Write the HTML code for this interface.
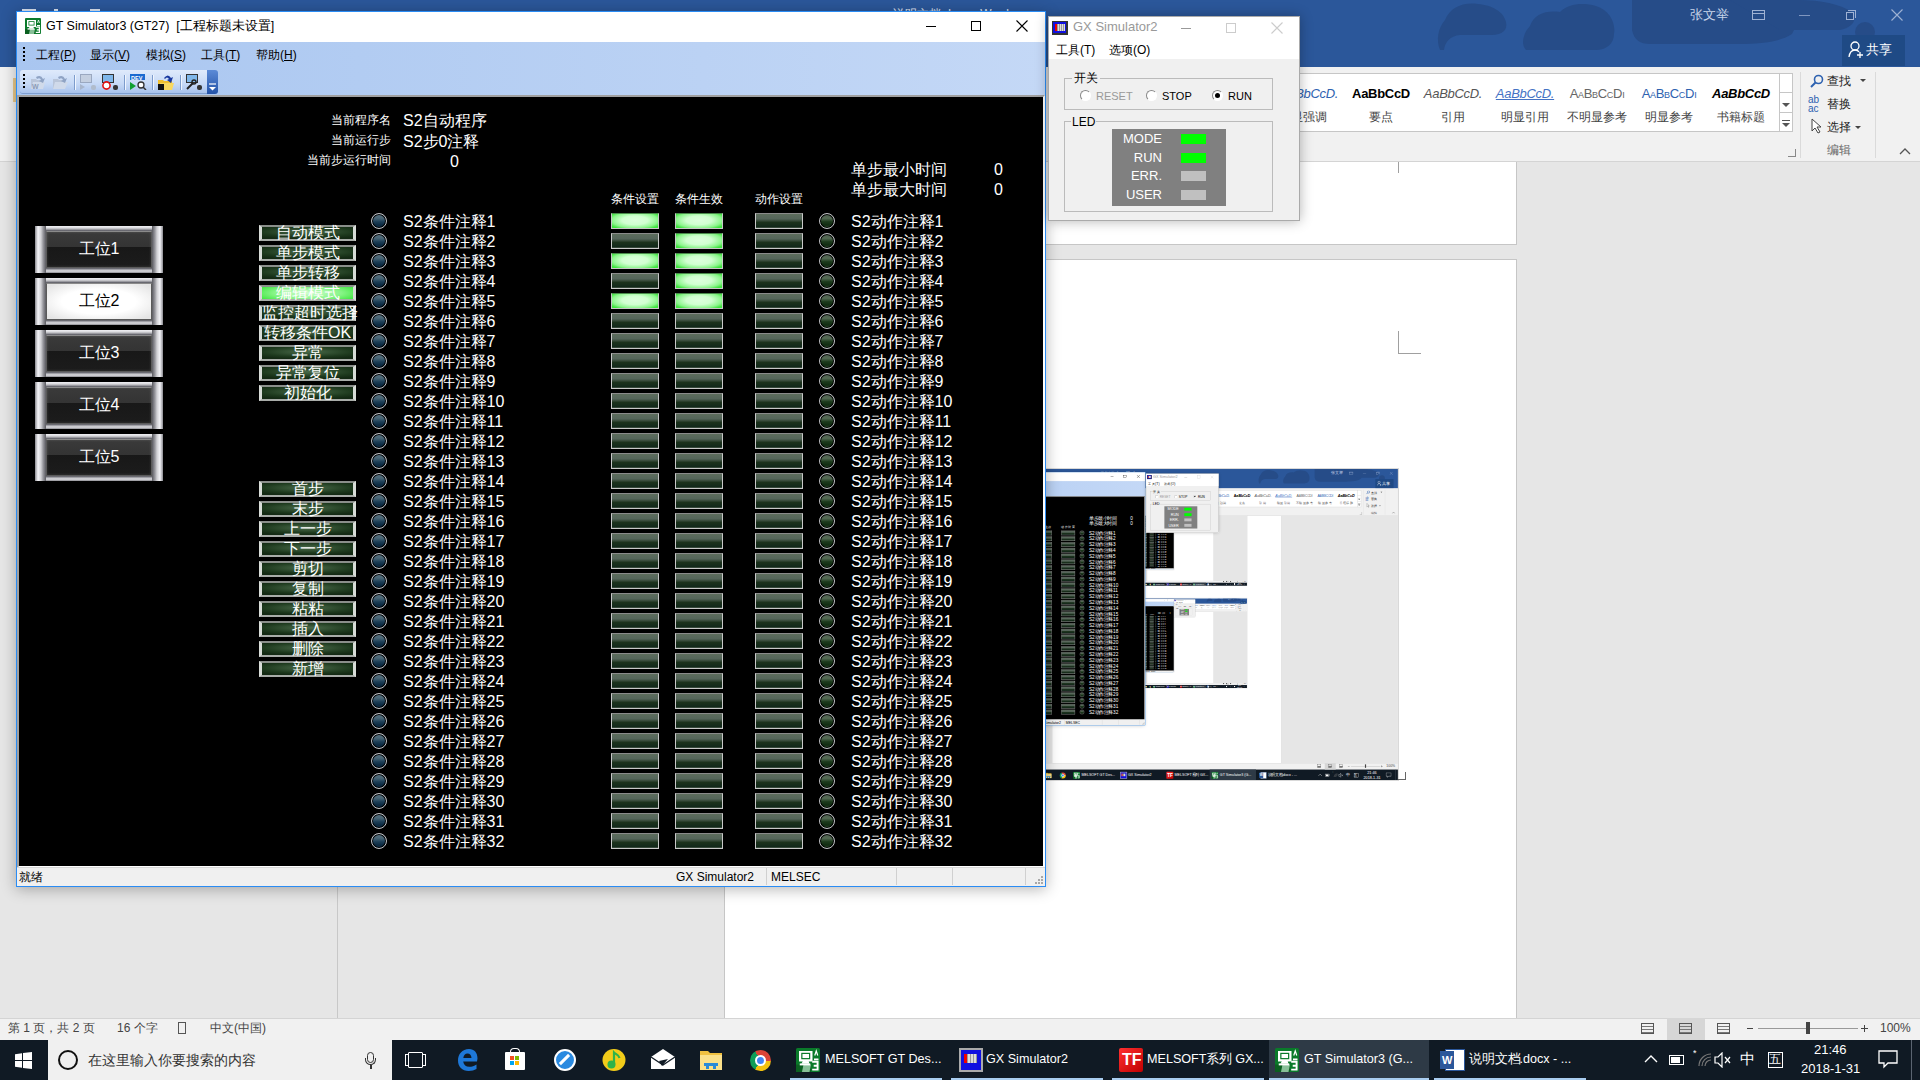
<!DOCTYPE html><html><head><meta charset="utf-8"><style>
*{margin:0;padding:0;box-sizing:border-box}
html,body{width:1920px;height:1080px;overflow:hidden;background:#e6e6e6;font-family:"Liberation Sans",sans-serif;position:relative}
.abs{position:absolute}
.t{position:absolute;white-space:nowrap}
.cj{display:inline-block;white-space:nowrap;overflow:visible}
</style></head><body>

<div class="abs" style="left:0;top:0;width:1920px;height:67px;background:#2b579a"></div>
<div class="abs" style="left:0;top:67px;width:1920px;height:95px;background:#f1f1f1;border-bottom:1px solid #d4d4d4"></div>
<div class="abs" style="left:0;top:162px;width:1920px;height:856px;background:#e6e6e6"></div>
<div class="abs" style="left:0;top:162px;width:1920px;height:856px;overflow:hidden">
<div class="abs" style="left:725px;top:0px;width:792px;height:83px;background:#fff;border-right:1px solid #c6c6c6;border-bottom:1px solid #c6c6c6"></div>
<div class="abs" style="left:724px;top:97px;width:793px;height:759px;background:#fff;border-top:1px solid #c6c6c6;border-right:1px solid #c6c6c6;border-left:1px solid #c6c6c6"></div>
<div class="abs" style="left:1398px;top:0px;width:1px;height:11px;background:#a0a0a0"></div>
<div class="abs" style="left:1398px;top:169px;width:1px;height:23px;background:#a0a0a0"></div>
<div class="abs" style="left:1398px;top:191px;width:23px;height:1px;background:#a0a0a0"></div>
<div class="abs" style="left:843px;top:307px;width:555px;height:311px;overflow:hidden;box-shadow:0 0 0 1px rgba(0,0,0,.15)"><div class="abs" style="left:0;top:0;width:1920px;height:1080px;transform:scale(0.289);transform-origin:0 0;overflow:hidden;background:#e6e6e6">
<div class="abs" style="left:0;top:0;width:1920px;height:67px;background:#2b579a"></div>
<div class="abs" style="left:0;top:67px;width:1920px;height:95px;background:#f1f1f1;border-bottom:1px solid #d4d4d4"></div>
<div class="abs" style="left:0;top:162px;width:1920px;height:856px;background:#e6e6e6"></div>
<div class="abs" style="left:0;top:162px;width:1920px;height:856px;overflow:hidden">
<div class="abs" style="left:725px;top:0px;width:792px;height:856px;background:#fff;border-right:1px solid #c6c6c6"></div>
<div class="abs" style="left:843px;top:-69px;width:555px;height:311px;overflow:hidden;box-shadow:0 0 0 1px rgba(0,0,0,.15)"><div class="abs" style="left:0;top:0;width:1920px;height:1080px;transform:scale(0.289);transform-origin:0 0;overflow:hidden;background:#e6e6e6">
<div class="abs" style="left:0;top:0;width:1920px;height:67px;background:#2b579a"></div>
<div class="abs" style="left:0;top:67px;width:1920px;height:95px;background:#f1f1f1;border-bottom:1px solid #d4d4d4"></div>
<div class="abs" style="left:0;top:162px;width:1920px;height:856px;background:#e6e6e6"></div>
<div class="abs" style="left:0;top:162px;width:1920px;height:856px;overflow:hidden">
<div class="abs" style="left:725px;top:0px;width:792px;height:856px;background:#fff;border-right:1px solid #c6c6c6"></div>
</div>
<div class="abs" style="left:0;top:1018px;width:1920px;height:22px;background:#f1f1f1;border-top:1px solid #d4d4d4"></div>
<div class="abs" style="left:0;top:1040px;width:1920px;height:40px;background:#101a24"></div>
<div class="abs" style="left:48px;top:1040px;width:344px;height:40px;background:#f0f0f0"></div>
<svg class="abs" style="left:1400px;top:0" width="520" height="66"><g fill="#264c88"><path d="M40 50C36 40 38 28 45 20C50 8 62 2 78 4C92 5 104 12 106 22C108 30 102 35 92 35H60C50 36 45 42 44 50Z"/><path d="M126 50C120 44 124 32 130 26C134 14 146 10 160 12C168 4 182 2 196 6C210 10 216 24 214 34C214 44 206 50 196 50Z"/><path d="M232 0H394C398 10 398 24 392 34C380 42 360 44 340 44H250C240 44 234 40 232 30Z"/><path d="M330 0H400C420 0 440 4 452 12C458 20 452 28 440 30H380Z"/><circle cx="465" cy="32" r="10"/></g></svg>
<div class="t" style="left:893px;top:7px;font-size:12px;line-height:14px;color:#e0e8f4"><span class="cj" style="width:4em">说明文档</span>.docx - Word</div>
<div class="abs" style="left:22px;top:9px;width:14px;height:3px;background:#dde6f3"></div><div class="abs" style="left:54px;top:9px;width:4px;height:3px;background:#dde6f3"></div><div class="abs" style="left:90px;top:9px;width:10px;height:3px;background:#dde6f3"></div>
<div class="t" style="left:1690px;top:7px;font-size:13px;line-height:16px;color:#c8d4e8"><span class="cj" style="width:3em">张文举</span></div>
<div class="abs" style="left:1752px;top:10px;width:13px;height:10px;border:1px solid #9fb2d4"></div>
<div class="abs" style="left:1752px;top:13px;width:13px;height:1px;background:#9fb2d4"></div>
<div class="abs" style="left:1799px;top:15px;width:11px;height:1px;background:#7f96c0"></div>
<div class="abs" style="left:1846px;top:12px;width:8px;height:8px;border:1px solid #9fb2d4"></div><div class="abs" style="left:1848px;top:10px;width:8px;height:8px;border-top:1px solid #9fb2d4;border-right:1px solid #9fb2d4"></div>
<svg class="abs" style="left:1891px;top:9px" width="12" height="12"><path d="M0.5 0.5L11.5 11.5M11.5 0.5L0.5 11.5" stroke="#9fb2d4" stroke-width="1.1"/></svg>
<div class="abs" style="left:1842px;top:35px;width:63px;height:31px;background:#1f4a85"></div>
<svg class="abs" style="left:1848px;top:41px" width="16" height="18"><circle cx="7" cy="5" r="4" fill="none" stroke="#fff" stroke-width="1.3"/><path d="M1 16 Q2 9 7 9 Q10 9 11 11" fill="none" stroke="#fff" stroke-width="1.3"/><path d="M9 14h6M12 11v6" stroke="#fff" stroke-width="1.3"/></svg>
<div class="t" style="left:1866px;top:42px;font-size:13px;line-height:16px;color:#fff"><span class="cj" style="width:2em">共享</span></div>
<div class="abs" style="left:1290px;top:73px;width:490px;height:59px;background:#fff;border:1px solid #c6c6c6"></div>
<div class="abs" style="left:1779px;top:73px;width:14px;height:59px;background:#fff;border:1px solid #c6c6c6"></div>
<div class="abs" style="left:1780px;top:92px;width:12px;height:1px;background:#c6c6c6"></div>
<div class="abs" style="left:1780px;top:112px;width:12px;height:1px;background:#c6c6c6"></div>
<div class="abs" style="left:1782px;top:103px;width:0;height:0;border-left:4px solid transparent;border-right:4px solid transparent;border-top:4px solid #555"></div>
<div class="abs" style="left:1782px;top:120px;width:8px;height:1px;background:#555"></div>
<div class="abs" style="left:1782px;top:123px;width:0;height:0;border-left:4px solid transparent;border-right:4px solid transparent;border-top:4px solid #555"></div>
<div class="t" style="left:1273px;width:72px;overflow:hidden;text-align:center;top:86px;font-size:13px;line-height:16px;color:#2e62b0;font-style:italic;font-weight:normal;letter-spacing:-0.3px">AaBbCcD.</div>
<div class="t" style="left:1269px;width:80px;text-align:center;top:110px;font-size:12px;line-height:14px;color:#444"><span class="cj" style="width:3em">显强调</span></div>
<div class="t" style="left:1345px;width:72px;overflow:hidden;text-align:center;top:86px;font-size:13px;line-height:16px;color:#000;font-style:normal;font-weight:bold;letter-spacing:-0.3px">AaBbCcD</div>
<div class="t" style="left:1341px;width:80px;text-align:center;top:110px;font-size:12px;line-height:14px;color:#444"><span class="cj" style="width:2em">要点</span></div>
<div class="t" style="left:1417px;width:72px;overflow:hidden;text-align:center;top:86px;font-size:13px;line-height:16px;color:#555;font-style:italic;font-weight:normal;letter-spacing:-0.3px">AaBbCcD.</div>
<div class="t" style="left:1413px;width:80px;text-align:center;top:110px;font-size:12px;line-height:14px;color:#444"><span class="cj" style="width:2em">引用</span></div>
<div class="t" style="left:1489px;width:72px;overflow:hidden;text-align:center;top:86px;font-size:13px;line-height:16px;color:#4472c4;font-style:italic;font-weight:normal;text-decoration:underline;letter-spacing:-0.3px">AaBbCcD.</div>
<div class="t" style="left:1485px;width:80px;text-align:center;top:110px;font-size:12px;line-height:14px;color:#444"><span class="cj" style="width:4em">明显引用</span></div>
<div class="t" style="left:1561px;width:72px;overflow:hidden;text-align:center;top:86px;font-size:13px;line-height:16px;color:#666;font-style:normal;font-weight:normal;font-variant:small-caps;letter-spacing:-0.3px">AaBbCcDı</div>
<div class="t" style="left:1557px;width:80px;text-align:center;top:110px;font-size:12px;line-height:14px;color:#444"><span class="cj" style="width:5em">不明显参考</span></div>
<div class="t" style="left:1633px;width:72px;overflow:hidden;text-align:center;top:86px;font-size:13px;line-height:16px;color:#2e62b0;font-style:normal;font-weight:normal;font-variant:small-caps;letter-spacing:-0.3px">AaBbCcDı</div>
<div class="t" style="left:1629px;width:80px;text-align:center;top:110px;font-size:12px;line-height:14px;color:#444"><span class="cj" style="width:4em">明显参考</span></div>
<div class="t" style="left:1705px;width:72px;overflow:hidden;text-align:center;top:86px;font-size:13px;line-height:16px;color:#000;font-style:italic;font-weight:bold;letter-spacing:-0.3px">AaBbCcD</div>
<div class="t" style="left:1701px;width:80px;text-align:center;top:110px;font-size:12px;line-height:14px;color:#444"><span class="cj" style="width:4em">书籍标题</span></div>
<div class="abs" style="left:1800px;top:72px;width:1px;height:86px;background:#dadada"></div>
<div class="abs" style="left:1875px;top:72px;width:1px;height:86px;background:#dadada"></div>
<svg class="abs" style="left:1810px;top:74px" width="14" height="14"><circle cx="8.5" cy="5.5" r="4" fill="none" stroke="#2e62b0" stroke-width="1.6"/><path d="M5.5 8.5L1 13" stroke="#2e62b0" stroke-width="2"/></svg>
<div class="t" style="left:1827px;top:74px;font-size:12px;line-height:14px;color:#222"><span class="cj" style="width:2em">查找</span></div>
<div class="abs" style="left:1860px;top:79px;width:0;height:0;border-left:3px solid transparent;border-right:3px solid transparent;border-top:3px solid #444"></div>
<div class="t" style="left:1808px;top:95px;font-size:10px;line-height:9px;color:#2e62b0">ab<br>ac</div>
<div class="t" style="left:1827px;top:97px;font-size:12px;line-height:14px;color:#222"><span class="cj" style="width:2em">替换</span></div>
<svg class="abs" style="left:1811px;top:118px" width="12" height="16"><path d="M1 1L1 13L4 10L7 15L9 14L6 9L10 9Z" fill="#fff" stroke="#444" stroke-width="1"/></svg>
<div class="t" style="left:1827px;top:120px;font-size:12px;line-height:14px;color:#222"><span class="cj" style="width:2em">选择</span></div>
<div class="abs" style="left:1855px;top:126px;width:0;height:0;border-left:3px solid transparent;border-right:3px solid transparent;border-top:3px solid #444"></div>
<div class="t" style="left:1827px;top:143px;font-size:12px;line-height:14px;color:#666"><span class="cj" style="width:2em">编辑</span></div>
<svg class="abs" style="left:1899px;top:148px" width="12" height="8"><path d="M1 6L6 1L11 6" fill="none" stroke="#555" stroke-width="1.3"/></svg>
<div class="abs" style="left:1788px;top:149px;width:8px;height:8px;border-right:1px solid #888;border-bottom:1px solid #888"></div>
<div class="abs" style="left:13px;top:78px;width:4px;height:24px;background:#e9c98a"></div>
<div class="abs" style="left:0px;top:162px;width:17px;height:856px;background:#e6e6e6"></div>
<div class="abs" style="left:337px;top:886px;width:1px;height:132px;background:#c8c8c8"></div>
<div class="t" style="left:8px;top:1021px;font-size:12px;line-height:14px;color:#444"><span class="cj" style="width:1em">第</span> 1 <span class="cj" style="width:3em">页，共</span> 2 <span class="cj" style="width:1em">页</span></div>
<div class="t" style="left:117px;top:1021px;font-size:12px;line-height:14px;color:#444">16 <span class="cj" style="width:2em">个字</span></div>
<div class="abs" style="left:178px;top:1022px;width:8px;height:12px;border:1px solid #555"></div>
<div class="t" style="left:210px;top:1021px;font-size:12px;line-height:14px;color:#444"><span class="cj" style="width:2em">中文</span>(<span class="cj" style="width:2em">中国</span>)</div>
<div class="abs" style="left:1667px;top:1018px;width:38px;height:22px;background:#d6d6d6"></div>
<div class="abs" style="left:1641px;top:1023px;width:13px;height:11px;border:1px solid #555;background:repeating-linear-gradient(transparent 0 2px,#777 2px 3px)"></div>
<div class="abs" style="left:1679px;top:1023px;width:13px;height:11px;border:1px solid #555;background:repeating-linear-gradient(transparent 0 2px,#777 2px 3px)"></div>
<div class="abs" style="left:1717px;top:1023px;width:13px;height:11px;border:1px solid #555;background:repeating-linear-gradient(transparent 0 2px,#777 2px 3px)"></div>
<div class="abs" style="left:1747px;top:1028px;width:6px;height:1px;background:#444"></div>
<div class="abs" style="left:1758px;top:1028px;width:100px;height:1px;background:#999"></div>
<div class="abs" style="left:1806px;top:1022px;width:4px;height:12px;background:#444"></div>
<div class="abs" style="left:1861px;top:1028px;width:7px;height:1px;background:#444"></div>
<div class="abs" style="left:1864px;top:1025px;width:1px;height:7px;background:#444"></div>
<div class="t" style="left:1880px;top:1021px;font-size:12px;line-height:14px;color:#444">100%</div>
<svg class="abs" style="left:15px;top:1052px" width="17" height="17"><path d="M0 2.3L7 1.3V8H0Z M8 1.1L17 0V8H8Z M0 9H7V15.7L0 14.7Z M8 9H17V17L8 15.9Z" fill="#fff"/></svg>
<div class="abs" style="left:58px;top:1050px;width:20px;height:20px;border-radius:50%;border:2.5px solid #111"></div>
<div class="t" style="left:88px;top:1052px;font-size:14px;line-height:16px;color:#333"><span class="cj" style="width:12em">在这里输入你要搜索的内容</span></div>
<div class="abs" style="left:367px;top:1052px;width:7px;height:11px;border:1.5px solid #333;border-radius:4px"></div>
<div class="abs" style="left:365px;top:1058px;width:11px;height:7px;border:1.5px solid #333;border-top:none;border-radius:0 0 6px 6px"></div>
<div class="abs" style="left:370px;top:1065px;width:1.5px;height:4px;background:#333"></div>
<div class="abs" style="left:408px;top:1052px;width:15px;height:16px;border:1.5px solid #fff;border-radius:1px"></div>
<div class="abs" style="left:405px;top:1054px;width:3px;height:12px;border:1.5px solid #fff;border-right:none"></div>
<div class="abs" style="left:423px;top:1054px;width:3px;height:12px;border:1.5px solid #fff;border-left:none"></div>
<svg class="abs" style="left:456px;top:1049px" width="22" height="22" viewBox="0 0 22 22"><path d="M21 12.5H7.2C7.6 16 10 17.8 13.3 17.8c2.6 0 5-0.9 7.2-2.3v4.6C18.3 21.4 15.8 22 12.8 22 6 22 2 17.8 2 11.5 2 5.2 6.2 0 13 0c5.3 0 8.5 3.600 8.5 9.5zM15.5 9C15.4 6.300 14 4.500 11.500 4.500 9.200 4.500 7.600 6.300 7.300 9z" fill="#1e78d8"/></svg>
<div class="abs" style="left:505px;top:1052px;width:20px;height:18px;background:#fff;border-radius:1px"></div>
<div class="abs" style="left:510px;top:1048px;width:10px;height:8px;border:1.5px solid #fff;border-bottom:none;border-radius:4px 4px 0 0"></div>
<div class="abs" style="left:510px;top:1056px;width:4px;height:4px;background:#f25022"></div><div class="abs" style="left:515px;top:1056px;width:4px;height:4px;background:#7fba00"></div><div class="abs" style="left:510px;top:1061px;width:4px;height:4px;background:#00a4ef"></div><div class="abs" style="left:515px;top:1061px;width:4px;height:4px;background:#ffb900"></div>
<div class="abs" style="left:554px;top:1049px;width:22px;height:22px;border-radius:50%;background:#2a8ae0;border:2px solid #fff"></div>
<div class="abs" style="left:563px;top:1053px;width:3px;height:13px;background:#fff;transform:rotate(45deg)"></div>
<svg class="abs" style="left:602px;top:1049px" width="24" height="22" viewBox="0 0 24 22"><ellipse cx="12" cy="11" rx="11.5" ry="11" fill="#f2cc1a"/><circle cx="9.5" cy="15.5" r="4" fill="#2fb34a"/><path d="M12 15V3.5c2 2 5 2.500 5.500 5.500" stroke="#2fb34a" stroke-width="2.2" fill="none"/></svg>
<svg class="abs" style="left:651px;top:1049px" width="24" height="20"><path d="M0 8L12 0L24 8V20H0Z" fill="#fff"/><path d="M0 8L12 16L24 8" fill="none" stroke="#101a24" stroke-width="1.3"/><path d="M8 12L17 10L11 17Z" fill="#101a24"/></svg>
<svg class="abs" style="left:700px;top:1050px" width="22" height="20"><path d="M0 1h8l2 2h12v17H0z" fill="#f0c040"/><path d="M0 5h22v15H0z" fill="#fbe08a"/><path d="M4 13h14v3h-2v3h-3v-3H9v3H6v-3H4z" fill="#2a8ad8"/></svg>
<div class="abs" style="left:750px;top:1050px;width:21px;height:21px;border-radius:50%;background:conic-gradient(from -30deg,#db4437 0 120deg,#f4c20d 120deg 240deg,#0f9d58 240deg 360deg)"></div>
<div class="abs" style="left:755px;top:1055px;width:11px;height:11px;border-radius:50%;background:#4285f4;border:2px solid #fff"></div>
<div class="abs" style="left:790px;top:1078px;width:152px;height:2px;background:#a9cdf0"></div>
<svg class="abs" style="left:796px;top:1048px" width="24" height="24" viewBox="0 0 16 16"><rect x="0" y="0" width="16" height="16" rx="1" fill="#0a7a2a"/><path d="M0 11h10v5H0z" fill="#0a6020"/><path d="M5 11h5l-1 5H4z" fill="#88c098"/><path d="M2 2h9v7H8.5l0.5 1.5H3.5L4.5 9H2z" fill="#fff"/><rect x="2.5" y="10.3" width="7" height="1.3" fill="#fff"/><rect x="3.5" y="3.2" width="6" height="4.3" fill="#0a7a2a"/><rect x="4.3" y="4" width="4.4" height="2.7" fill="#fff"/><path d="M10.8 9.2H14.4V14.4H10.8M11.8 11.8H14.4" stroke="#fff" stroke-width="1.3" fill="none"/><rect x="12" y="7" width="3" height="1.2" fill="#fff"/><path d="M12.5 5l1-3 1 3" stroke="#fff" stroke-width="0.8" fill="none"/></svg>
<div class="t" style="left:825px;top:1051px;font-size:12.6px;line-height:17px;color:#fff">MELSOFT GT Des...</div>
<div class="abs" style="left:951px;top:1078px;width:152px;height:2px;background:#a9cdf0"></div>
<div class="abs" style="left:959px;top:1048px;width:24px;height:24px;background:#1010e0;border:2px solid #aaa"></div>
<div class="abs" style="left:964px;top:1054px;width:13px;height:9px;background:repeating-linear-gradient(90deg,#999 0 1px,#ddd 1px 3px)"></div><div class="abs" style="left:964px;top:1054px;width:3px;height:9px;background:#e00"></div>
<div class="t" style="left:986px;top:1051px;font-size:12.6px;line-height:17px;color:#fff">GX Simulator2</div>
<div class="abs" style="left:1112px;top:1078px;width:152px;height:2px;background:#a9cdf0"></div>
<div class="abs" style="left:1119px;top:1048px;width:24px;height:24px;background:linear-gradient(135deg,#ff3030,#c00000);border-radius:2px"></div>
<div class="t" style="left:1122px;top:1051px;font-size:16px;line-height:18px;color:#fff;font-weight:bold">TF</div>
<div class="t" style="left:1147px;top:1051px;font-size:12.6px;line-height:17px;color:#fff">MELSOFT<span class="cj" style="width:2em">系列</span> GX...</div>
<div class="abs" style="left:1269px;top:1040px;width:160px;height:40px;background:#2e3a46"></div>
<div class="abs" style="left:1269px;top:1078px;width:160px;height:2px;background:#a9cdf0"></div>
<svg class="abs" style="left:1275px;top:1048px" width="24" height="24" viewBox="0 0 16 16"><rect x="0" y="0" width="16" height="16" rx="1" fill="#0a7a2a"/><path d="M0 11h10v5H0z" fill="#0a6020"/><path d="M5 11h5l-1 5H4z" fill="#88c098"/><path d="M2 2h9v7H8.5l0.5 1.5H3.5L4.5 9H2z" fill="#fff"/><rect x="2.5" y="10.3" width="7" height="1.3" fill="#fff"/><rect x="3.5" y="3.2" width="6" height="4.3" fill="#0a7a2a"/><rect x="4.3" y="4" width="4.4" height="2.7" fill="#fff"/><path d="M10.8 9.2H14.4V14.4H10.8M11.8 11.8H14.4" stroke="#fff" stroke-width="1.3" fill="none"/><rect x="12" y="7" width="3" height="1.2" fill="#fff"/><path d="M12.5 5l1-3 1 3" stroke="#fff" stroke-width="0.8" fill="none"/></svg>
<div class="t" style="left:1304px;top:1051px;font-size:12.6px;line-height:17px;color:#fff">GT Simulator3 (G...</div>
<div class="abs" style="left:1434px;top:1078px;width:152px;height:2px;background:#a9cdf0"></div>
<div class="abs" style="left:1445px;top:1049px;width:20px;height:22px;background:#fff;border:1px solid #2b579a"></div>
<div class="abs" style="left:1440px;top:1051px;width:14px;height:18px;background:#2b579a"></div>
<div class="t" style="left:1442px;top:1053px;font-size:11px;line-height:14px;color:#fff;font-weight:bold">W</div>
<div class="t" style="left:1469px;top:1051px;font-size:12.6px;line-height:17px;color:#fff"><span class="cj" style="width:4em">说明文档</span>.docx - ...</div>
<svg class="abs" style="left:1644px;top:1054px" width="14" height="9"><path d="M1 8L7 2L13 8" fill="none" stroke="#fff" stroke-width="1.4"/></svg>
<div class="abs" style="left:1669px;top:1055px;width:15px;height:10px;border:1.5px solid #fff"></div><div class="abs" style="left:1671px;top:1057px;width:9px;height:6px;background:#fff"></div>
<svg class="abs" style="left:1693px;top:1048px" width="20" height="20"><path d="M6 18A12 12 0 0 1 18 6M9 18A9 9 0 0 1 18 9M12 18A6 6 0 0 1 18 12" fill="none" stroke="#777" stroke-width="1.2"/><text x="0" y="8" font-size="9" fill="#fff">*</text></svg>
<svg class="abs" style="left:1714px;top:1052px" width="18" height="16"><path d="M1 5H4L8 1V15L4 11H1Z" fill="none" stroke="#fff" stroke-width="1.2"/><path d="M11 5L16 11M16 5L11 11" stroke="#fff" stroke-width="1.2"/></svg>
<div class="t" style="left:1740px;top:1050px;font-size:15px;line-height:18px;color:#fff"><span class="cj" style="width:1em">中</span></div>
<div class="abs" style="left:1768px;top:1052px;width:15px;height:16px;border:1.5px solid #fff"></div><div class="t" style="left:1769px;top:1052px;font-size:12px;line-height:15px;color:#fff"><span class="cj" style="width:1em">五</span></div>
<div class="t" style="left:1814px;top:1042px;font-size:13px;line-height:16px;color:#fff">21:46</div>
<div class="t" style="left:1801px;top:1061px;font-size:13px;line-height:16px;color:#fff">2018-1-31</div>
<svg class="abs" style="left:1878px;top:1050px" width="20" height="19"><path d="M1 1H19V13H10L6 17V13H1Z" fill="none" stroke="#fff" stroke-width="1.3"/></svg>
<div class="abs" style="left:1911px;top:1040px;width:1px;height:40px;background:#5a6470"></div>
<div class="abs" style="left:16px;top:11px;width:1030px;height:876px;background:#f0f0f0;border:1px solid #2a8cf4;box-shadow:0 2px 14px rgba(0,0,0,.3)"></div>
<div class="abs" style="left:17px;top:12px;width:1028px;height:30px;background:#fff"></div>
<div class="abs" style="left:17px;top:42px;width:1028px;height:53px;background:linear-gradient(90deg,#a9c6f0,#c4d8f6)"></div>
<div class="abs" style="left:17px;top:95px;width:1028px;height:773px;background:#000;border-left:2px solid #a0a0a0;border-top:2px solid #a0a0a0;border-right:2px solid #fff;border-bottom:2px solid #fff"></div>
<div class="abs" style="left:17px;top:867px;width:1028px;height:1px;background:#d8d8d8"></div>
<div class="abs" style="left:1041px;top:876px;width:2px;height:2px;background:#a8a8a8"></div>
<div class="abs" style="left:1038px;top:879px;width:2px;height:2px;background:#a8a8a8"></div>
<div class="abs" style="left:1041px;top:879px;width:2px;height:2px;background:#a8a8a8"></div>
<div class="abs" style="left:1035px;top:882px;width:2px;height:2px;background:#a8a8a8"></div>
<div class="abs" style="left:1038px;top:882px;width:2px;height:2px;background:#a8a8a8"></div>
<div class="abs" style="left:1041px;top:882px;width:2px;height:2px;background:#a8a8a8"></div>
<div class="t" style="left:46px;top:18px;font-size:12.5px;line-height:16px;color:#000">GT Simulator3 (GT27) &nbsp;[<span class="cj" style="width:7em">工程标题未设置</span> ]</div>
<svg class="abs" style="left:25px;top:18px" width="16" height="16" viewBox="0 0 16 16"><rect x="0" y="0" width="16" height="16" rx="1" fill="#0a7a2a"/><path d="M0 11h10v5H0z" fill="#0a6020"/><path d="M5 11h5l-1 5H4z" fill="#88c098"/><path d="M2 2h9v7H8.5l0.5 1.5H3.5L4.5 9H2z" fill="#fff"/><rect x="2.5" y="10.3" width="7" height="1.3" fill="#fff"/><rect x="3.5" y="3.2" width="6" height="4.3" fill="#0a7a2a"/><rect x="4.3" y="4" width="4.4" height="2.7" fill="#fff"/><path d="M10.8 9.2H14.4V14.4H10.8M11.8 11.8H14.4" stroke="#fff" stroke-width="1.3" fill="none"/><rect x="12" y="7" width="3" height="1.2" fill="#fff"/><path d="M12.5 5l1-3 1 3" stroke="#fff" stroke-width="0.8" fill="none"/></svg>
<div class="abs" style="left:926px;top:26px;width:10px;height:1px;background:#000"></div>
<div class="abs" style="left:971px;top:21px;width:10px;height:10px;border:1px solid #000"></div>
<svg class="abs" style="left:1016px;top:20px" width="12" height="12"><path d="M0.5 0.5L11.5 11.5M11.5 0.5L0.5 11.5" stroke="#000" stroke-width="1.1"/></svg>
<div class="abs" style="left:23px;top:47px;width:2px;height:14px;background:repeating-linear-gradient(#000 0 2px,transparent 2px 4px)"></div>
<div class="t" style="left:36px;top:48px;font-size:12px;line-height:14px;color:#000"><span class="cj" style="width:2em">工程</span>(<u>P</u>)</div>
<div class="t" style="left:90px;top:48px;font-size:12px;line-height:14px;color:#000"><span class="cj" style="width:2em">显示</span>(<u>V</u>)</div>
<div class="t" style="left:146px;top:48px;font-size:12px;line-height:14px;color:#000"><span class="cj" style="width:2em">模拟</span>(<u>S</u>)</div>
<div class="t" style="left:201px;top:48px;font-size:12px;line-height:14px;color:#000"><span class="cj" style="width:2em">工具</span>(<u>T</u>)</div>
<div class="t" style="left:256px;top:48px;font-size:12px;line-height:14px;color:#000"><span class="cj" style="width:2em">帮助</span>(<u>H</u>)</div>
<div class="abs" style="left:20px;top:70px;width:187px;height:24px;border-radius:3px 0 0 3px;background:linear-gradient(#dfeafb,#c6d9f6 60%,#a9c3ec);border-bottom:1px solid #7f9fd0"></div>
<div class="abs" style="left:207px;top:70px;width:11px;height:24px;border-radius:0 3px 3px 0;background:linear-gradient(#5b8ad6,#2453a8)"></div>
<svg class="abs" style="left:208px;top:83px" width="9" height="8"><path d="M1 1h7" stroke="#fff" stroke-width="1.2"/><path d="M1 4h7l-3.5 3.5z" fill="#fff"/></svg>
<div class="abs" style="left:23px;top:74px;width:2px;height:16px;background:repeating-linear-gradient(#000 0 2px,transparent 2px 4px)"></div>
<div class="abs" style="left:74px;top:75px;width:1px;height:15px;background:#7d9ccc;box-shadow:1px 0 0 #f0f6ff"></div>
<div class="abs" style="left:124px;top:75px;width:1px;height:15px;background:#7d9ccc;box-shadow:1px 0 0 #f0f6ff"></div>
<div class="abs" style="left:152px;top:75px;width:1px;height:15px;background:#7d9ccc;box-shadow:1px 0 0 #f0f6ff"></div>
<div class="abs" style="left:180px;top:75px;width:1px;height:15px;background:#7d9ccc;box-shadow:1px 0 0 #f0f6ff"></div>

<svg class="abs" style="left:30px;top:74px" width="17" height="16"><path d="M1 5h5l1 1h6v9H1z" fill="#b9c5d9"/><path d="M3 8h12l-2 7H1z" fill="#d0daea"/><path d="M6 3 Q11 0 13 5 L15 4 L13 9 L9 7 L11 6 Q10 3 7 5z" fill="#8fa3c4"/><text x="2" y="15" font-size="7" font-weight="bold" fill="#8a9ab8">W</text></svg>
<svg class="abs" style="left:52px;top:74px" width="17" height="16"><path d="M1 5h5l1 1h6v9H1z" fill="#b9c5d9"/><path d="M3 8h13l-3 7H1z" fill="#d0daea"/><path d="M6 3 Q11 0 13 5 L15 4 L13 9 L9 7 L11 6 Q10 3 7 5z" fill="#8fa3c4"/></svg>
<svg class="abs" style="left:80px;top:74px" width="17" height="16"><rect x="0.5" y="0.5" width="11" height="8" fill="#c4cfe0" stroke="#9aa8c0"/><path d="M0 10v6l5-3z" fill="#a8b6cc"/><rect x="11" y="11" width="5" height="5" rx="2" fill="#b0bccc"/></svg>
<svg class="abs" style="left:102px;top:74px" width="17" height="16"><rect x="0.5" y="0.5" width="11" height="8" fill="#7fb7ea" stroke="#333"/><circle cx="4.5" cy="11.5" r="3.6" fill="#fff" stroke="#e01010" stroke-width="1.6"/><rect x="11" y="11" width="5" height="5" rx="2" fill="#333"/></svg>
<svg class="abs" style="left:130px;top:74px" width="17" height="16"><rect x="0" y="0" width="15" height="6" fill="#1a6ad0"/><text x="1" y="5.5" font-size="5.5" font-weight="bold" fill="#fff">DEV</text><path d="M0 8v8l6-4z" fill="#10a030"/><circle cx="11" cy="11" r="3" fill="#fff" stroke="#333" stroke-width="1.3"/><path d="M13 13l3 3" stroke="#333" stroke-width="1.5"/></svg>
<svg class="abs" style="left:158px;top:74px" width="17" height="16"><path d="M0 6h5l1 1h8v9H0z" fill="#f0c030"/><path d="M2 9h14l-2 7H0z" fill="#f8d860"/><rect x="0" y="10" width="6" height="6" fill="#111"/><path d="M6 4 Q10 -1 13 4 L15 3 L13 9 L9 6 L11 5 Q9 2 7 5z" fill="#1a3aa0"/></svg>
<svg class="abs" style="left:186px;top:74px" width="17" height="16"><rect x="0.5" y="0.5" width="11" height="8" fill="#7fb7ea" stroke="#333"/><path d="M1 15 L7 9" stroke="#222" stroke-width="2"/><circle cx="8" cy="8" r="2" fill="none" stroke="#222" stroke-width="1.4"/><rect x="11" y="11" width="5" height="5" rx="2" fill="#333"/></svg>

<div class="t" style="left:19px;top:870px;font-size:12px;line-height:14px;color:#000"><span class="cj" style="width:2em">就绪</span></div>
<div class="t" style="left:676px;top:870px;font-size:12px;line-height:14px;color:#000">GX Simulator2</div>
<div class="t" style="left:771px;top:870px;font-size:12px;line-height:14px;color:#000">MELSEC</div>
<div class="abs" style="left:766px;top:868px;width:1px;height:17px;background:#d0d0d0"></div>
<div class="abs" style="left:896px;top:868px;width:1px;height:17px;background:#d0d0d0"></div>
<div class="abs" style="left:952px;top:868px;width:1px;height:17px;background:#d0d0d0"></div>
<div class="abs" style="left:1025px;top:868px;width:1px;height:17px;background:#d0d0d0"></div>
<div class="t lbl" style="right:1529px;top:114px"><span class="cj" style="width:5em">当前程序名</span></div>
<div class="t w" style="left:403px;top:113px">S2<span class="cj" style="width:4em">自动程序</span></div>
<div class="t lbl" style="right:1529px;top:134px"><span class="cj" style="width:5em">当前运行步</span></div>
<div class="t w" style="left:403px;top:134px">S2<span class="cj" style="width:1em">步</span>0<span class="cj" style="width:2em">注释</span></div>
<div class="t lbl" style="right:1529px;top:154px"><span class="cj" style="width:7em">当前步运行时间</span></div>
<div class="t w" style="left:450px;top:154px">0</div>
<div class="t w" style="left:851px;top:162px"><span class="cj" style="width:6em">单步最小时间</span></div>
<div class="t w" style="left:994px;top:162px">0</div>
<div class="t w" style="left:851px;top:182px"><span class="cj" style="width:6em">单步最大时间</span></div>
<div class="t w" style="left:994px;top:182px">0</div>
<div class="t lbl" style="left:611px;top:193px"><span class="cj" style="width:4em">条件设置</span></div>
<div class="t lbl" style="left:675px;top:193px"><span class="cj" style="width:4em">条件生效</span></div>
<div class="t lbl" style="left:755px;top:193px"><span class="cj" style="width:4em">动作设置</span></div>
<div class="cir" style="left:371px;top:213px"></div>
<div class="t w" style="left:403px;top:214px">S2<span class="cj" style="width:4em">条件注释</span>1</div>
<div class="lamp" style="left:611px;top:213px"></div>
<div class="lamp" style="left:675px;top:213px"></div>
<div class="lamp" style="left:755px;top:213px"></div>
<div class="cir g" style="left:819px;top:213px"></div>
<div class="t w" style="left:851px;top:214px">S2<span class="cj" style="width:4em">动作注释</span>1</div>
<div class="cir" style="left:371px;top:233px"></div>
<div class="t w" style="left:403px;top:234px">S2<span class="cj" style="width:4em">条件注释</span>2</div>
<div class="lamp" style="left:611px;top:233px"></div>
<div class="lamp" style="left:675px;top:233px"></div>
<div class="lamp" style="left:755px;top:233px"></div>
<div class="cir g" style="left:819px;top:233px"></div>
<div class="t w" style="left:851px;top:234px">S2<span class="cj" style="width:4em">动作注释</span>2</div>
<div class="cir" style="left:371px;top:253px"></div>
<div class="t w" style="left:403px;top:254px">S2<span class="cj" style="width:4em">条件注释</span>3</div>
<div class="lamp" style="left:611px;top:253px"></div>
<div class="lamp" style="left:675px;top:253px"></div>
<div class="lamp" style="left:755px;top:253px"></div>
<div class="cir g" style="left:819px;top:253px"></div>
<div class="t w" style="left:851px;top:254px">S2<span class="cj" style="width:4em">动作注释</span>3</div>
<div class="cir" style="left:371px;top:273px"></div>
<div class="t w" style="left:403px;top:274px">S2<span class="cj" style="width:4em">条件注释</span>4</div>
<div class="lamp" style="left:611px;top:273px"></div>
<div class="lamp" style="left:675px;top:273px"></div>
<div class="lamp" style="left:755px;top:273px"></div>
<div class="cir g" style="left:819px;top:273px"></div>
<div class="t w" style="left:851px;top:274px">S2<span class="cj" style="width:4em">动作注释</span>4</div>
<div class="cir" style="left:371px;top:293px"></div>
<div class="t w" style="left:403px;top:294px">S2<span class="cj" style="width:4em">条件注释</span>5</div>
<div class="lamp" style="left:611px;top:293px"></div>
<div class="lamp" style="left:675px;top:293px"></div>
<div class="lamp" style="left:755px;top:293px"></div>
<div class="cir g" style="left:819px;top:293px"></div>
<div class="t w" style="left:851px;top:294px">S2<span class="cj" style="width:4em">动作注释</span>5</div>
<div class="cir" style="left:371px;top:313px"></div>
<div class="t w" style="left:403px;top:314px">S2<span class="cj" style="width:4em">条件注释</span>6</div>
<div class="lamp" style="left:611px;top:313px"></div>
<div class="lamp" style="left:675px;top:313px"></div>
<div class="lamp" style="left:755px;top:313px"></div>
<div class="cir g" style="left:819px;top:313px"></div>
<div class="t w" style="left:851px;top:314px">S2<span class="cj" style="width:4em">动作注释</span>6</div>
<div class="cir" style="left:371px;top:333px"></div>
<div class="t w" style="left:403px;top:334px">S2<span class="cj" style="width:4em">条件注释</span>7</div>
<div class="lamp" style="left:611px;top:333px"></div>
<div class="lamp" style="left:675px;top:333px"></div>
<div class="lamp" style="left:755px;top:333px"></div>
<div class="cir g" style="left:819px;top:333px"></div>
<div class="t w" style="left:851px;top:334px">S2<span class="cj" style="width:4em">动作注释</span>7</div>
<div class="cir" style="left:371px;top:353px"></div>
<div class="t w" style="left:403px;top:354px">S2<span class="cj" style="width:4em">条件注释</span>8</div>
<div class="lamp" style="left:611px;top:353px"></div>
<div class="lamp" style="left:675px;top:353px"></div>
<div class="lamp" style="left:755px;top:353px"></div>
<div class="cir g" style="left:819px;top:353px"></div>
<div class="t w" style="left:851px;top:354px">S2<span class="cj" style="width:4em">动作注释</span>8</div>
<div class="cir" style="left:371px;top:373px"></div>
<div class="t w" style="left:403px;top:374px">S2<span class="cj" style="width:4em">条件注释</span>9</div>
<div class="lamp" style="left:611px;top:373px"></div>
<div class="lamp" style="left:675px;top:373px"></div>
<div class="lamp" style="left:755px;top:373px"></div>
<div class="cir g" style="left:819px;top:373px"></div>
<div class="t w" style="left:851px;top:374px">S2<span class="cj" style="width:4em">动作注释</span>9</div>
<div class="cir" style="left:371px;top:393px"></div>
<div class="t w" style="left:403px;top:394px">S2<span class="cj" style="width:4em">条件注释</span>10</div>
<div class="lamp" style="left:611px;top:393px"></div>
<div class="lamp" style="left:675px;top:393px"></div>
<div class="lamp" style="left:755px;top:393px"></div>
<div class="cir g" style="left:819px;top:393px"></div>
<div class="t w" style="left:851px;top:394px">S2<span class="cj" style="width:4em">动作注释</span>10</div>
<div class="cir" style="left:371px;top:413px"></div>
<div class="t w" style="left:403px;top:414px">S2<span class="cj" style="width:4em">条件注释</span>11</div>
<div class="lamp" style="left:611px;top:413px"></div>
<div class="lamp" style="left:675px;top:413px"></div>
<div class="lamp" style="left:755px;top:413px"></div>
<div class="cir g" style="left:819px;top:413px"></div>
<div class="t w" style="left:851px;top:414px">S2<span class="cj" style="width:4em">动作注释</span>11</div>
<div class="cir" style="left:371px;top:433px"></div>
<div class="t w" style="left:403px;top:434px">S2<span class="cj" style="width:4em">条件注释</span>12</div>
<div class="lamp" style="left:611px;top:433px"></div>
<div class="lamp" style="left:675px;top:433px"></div>
<div class="lamp" style="left:755px;top:433px"></div>
<div class="cir g" style="left:819px;top:433px"></div>
<div class="t w" style="left:851px;top:434px">S2<span class="cj" style="width:4em">动作注释</span>12</div>
<div class="cir" style="left:371px;top:453px"></div>
<div class="t w" style="left:403px;top:454px">S2<span class="cj" style="width:4em">条件注释</span>13</div>
<div class="lamp" style="left:611px;top:453px"></div>
<div class="lamp" style="left:675px;top:453px"></div>
<div class="lamp" style="left:755px;top:453px"></div>
<div class="cir g" style="left:819px;top:453px"></div>
<div class="t w" style="left:851px;top:454px">S2<span class="cj" style="width:4em">动作注释</span>13</div>
<div class="cir" style="left:371px;top:473px"></div>
<div class="t w" style="left:403px;top:474px">S2<span class="cj" style="width:4em">条件注释</span>14</div>
<div class="lamp" style="left:611px;top:473px"></div>
<div class="lamp" style="left:675px;top:473px"></div>
<div class="lamp" style="left:755px;top:473px"></div>
<div class="cir g" style="left:819px;top:473px"></div>
<div class="t w" style="left:851px;top:474px">S2<span class="cj" style="width:4em">动作注释</span>14</div>
<div class="cir" style="left:371px;top:493px"></div>
<div class="t w" style="left:403px;top:494px">S2<span class="cj" style="width:4em">条件注释</span>15</div>
<div class="lamp" style="left:611px;top:493px"></div>
<div class="lamp" style="left:675px;top:493px"></div>
<div class="lamp" style="left:755px;top:493px"></div>
<div class="cir g" style="left:819px;top:493px"></div>
<div class="t w" style="left:851px;top:494px">S2<span class="cj" style="width:4em">动作注释</span>15</div>
<div class="cir" style="left:371px;top:513px"></div>
<div class="t w" style="left:403px;top:514px">S2<span class="cj" style="width:4em">条件注释</span>16</div>
<div class="lamp" style="left:611px;top:513px"></div>
<div class="lamp" style="left:675px;top:513px"></div>
<div class="lamp" style="left:755px;top:513px"></div>
<div class="cir g" style="left:819px;top:513px"></div>
<div class="t w" style="left:851px;top:514px">S2<span class="cj" style="width:4em">动作注释</span>16</div>
<div class="cir" style="left:371px;top:533px"></div>
<div class="t w" style="left:403px;top:534px">S2<span class="cj" style="width:4em">条件注释</span>17</div>
<div class="lamp" style="left:611px;top:533px"></div>
<div class="lamp" style="left:675px;top:533px"></div>
<div class="lamp" style="left:755px;top:533px"></div>
<div class="cir g" style="left:819px;top:533px"></div>
<div class="t w" style="left:851px;top:534px">S2<span class="cj" style="width:4em">动作注释</span>17</div>
<div class="cir" style="left:371px;top:553px"></div>
<div class="t w" style="left:403px;top:554px">S2<span class="cj" style="width:4em">条件注释</span>18</div>
<div class="lamp" style="left:611px;top:553px"></div>
<div class="lamp" style="left:675px;top:553px"></div>
<div class="lamp" style="left:755px;top:553px"></div>
<div class="cir g" style="left:819px;top:553px"></div>
<div class="t w" style="left:851px;top:554px">S2<span class="cj" style="width:4em">动作注释</span>18</div>
<div class="cir" style="left:371px;top:573px"></div>
<div class="t w" style="left:403px;top:574px">S2<span class="cj" style="width:4em">条件注释</span>19</div>
<div class="lamp" style="left:611px;top:573px"></div>
<div class="lamp" style="left:675px;top:573px"></div>
<div class="lamp" style="left:755px;top:573px"></div>
<div class="cir g" style="left:819px;top:573px"></div>
<div class="t w" style="left:851px;top:574px">S2<span class="cj" style="width:4em">动作注释</span>19</div>
<div class="cir" style="left:371px;top:593px"></div>
<div class="t w" style="left:403px;top:594px">S2<span class="cj" style="width:4em">条件注释</span>20</div>
<div class="lamp" style="left:611px;top:593px"></div>
<div class="lamp" style="left:675px;top:593px"></div>
<div class="lamp" style="left:755px;top:593px"></div>
<div class="cir g" style="left:819px;top:593px"></div>
<div class="t w" style="left:851px;top:594px">S2<span class="cj" style="width:4em">动作注释</span>20</div>
<div class="cir" style="left:371px;top:613px"></div>
<div class="t w" style="left:403px;top:614px">S2<span class="cj" style="width:4em">条件注释</span>21</div>
<div class="lamp" style="left:611px;top:613px"></div>
<div class="lamp" style="left:675px;top:613px"></div>
<div class="lamp" style="left:755px;top:613px"></div>
<div class="cir g" style="left:819px;top:613px"></div>
<div class="t w" style="left:851px;top:614px">S2<span class="cj" style="width:4em">动作注释</span>21</div>
<div class="cir" style="left:371px;top:633px"></div>
<div class="t w" style="left:403px;top:634px">S2<span class="cj" style="width:4em">条件注释</span>22</div>
<div class="lamp" style="left:611px;top:633px"></div>
<div class="lamp" style="left:675px;top:633px"></div>
<div class="lamp" style="left:755px;top:633px"></div>
<div class="cir g" style="left:819px;top:633px"></div>
<div class="t w" style="left:851px;top:634px">S2<span class="cj" style="width:4em">动作注释</span>22</div>
<div class="cir" style="left:371px;top:653px"></div>
<div class="t w" style="left:403px;top:654px">S2<span class="cj" style="width:4em">条件注释</span>23</div>
<div class="lamp" style="left:611px;top:653px"></div>
<div class="lamp" style="left:675px;top:653px"></div>
<div class="lamp" style="left:755px;top:653px"></div>
<div class="cir g" style="left:819px;top:653px"></div>
<div class="t w" style="left:851px;top:654px">S2<span class="cj" style="width:4em">动作注释</span>23</div>
<div class="cir" style="left:371px;top:673px"></div>
<div class="t w" style="left:403px;top:674px">S2<span class="cj" style="width:4em">条件注释</span>24</div>
<div class="lamp" style="left:611px;top:673px"></div>
<div class="lamp" style="left:675px;top:673px"></div>
<div class="lamp" style="left:755px;top:673px"></div>
<div class="cir g" style="left:819px;top:673px"></div>
<div class="t w" style="left:851px;top:674px">S2<span class="cj" style="width:4em">动作注释</span>24</div>
<div class="cir" style="left:371px;top:693px"></div>
<div class="t w" style="left:403px;top:694px">S2<span class="cj" style="width:4em">条件注释</span>25</div>
<div class="lamp" style="left:611px;top:693px"></div>
<div class="lamp" style="left:675px;top:693px"></div>
<div class="lamp" style="left:755px;top:693px"></div>
<div class="cir g" style="left:819px;top:693px"></div>
<div class="t w" style="left:851px;top:694px">S2<span class="cj" style="width:4em">动作注释</span>25</div>
<div class="cir" style="left:371px;top:713px"></div>
<div class="t w" style="left:403px;top:714px">S2<span class="cj" style="width:4em">条件注释</span>26</div>
<div class="lamp" style="left:611px;top:713px"></div>
<div class="lamp" style="left:675px;top:713px"></div>
<div class="lamp" style="left:755px;top:713px"></div>
<div class="cir g" style="left:819px;top:713px"></div>
<div class="t w" style="left:851px;top:714px">S2<span class="cj" style="width:4em">动作注释</span>26</div>
<div class="cir" style="left:371px;top:733px"></div>
<div class="t w" style="left:403px;top:734px">S2<span class="cj" style="width:4em">条件注释</span>27</div>
<div class="lamp" style="left:611px;top:733px"></div>
<div class="lamp" style="left:675px;top:733px"></div>
<div class="lamp" style="left:755px;top:733px"></div>
<div class="cir g" style="left:819px;top:733px"></div>
<div class="t w" style="left:851px;top:734px">S2<span class="cj" style="width:4em">动作注释</span>27</div>
<div class="cir" style="left:371px;top:753px"></div>
<div class="t w" style="left:403px;top:754px">S2<span class="cj" style="width:4em">条件注释</span>28</div>
<div class="lamp" style="left:611px;top:753px"></div>
<div class="lamp" style="left:675px;top:753px"></div>
<div class="lamp" style="left:755px;top:753px"></div>
<div class="cir g" style="left:819px;top:753px"></div>
<div class="t w" style="left:851px;top:754px">S2<span class="cj" style="width:4em">动作注释</span>28</div>
<div class="cir" style="left:371px;top:773px"></div>
<div class="t w" style="left:403px;top:774px">S2<span class="cj" style="width:4em">条件注释</span>29</div>
<div class="lamp" style="left:611px;top:773px"></div>
<div class="lamp" style="left:675px;top:773px"></div>
<div class="lamp" style="left:755px;top:773px"></div>
<div class="cir g" style="left:819px;top:773px"></div>
<div class="t w" style="left:851px;top:774px">S2<span class="cj" style="width:4em">动作注释</span>29</div>
<div class="cir" style="left:371px;top:793px"></div>
<div class="t w" style="left:403px;top:794px">S2<span class="cj" style="width:4em">条件注释</span>30</div>
<div class="lamp" style="left:611px;top:793px"></div>
<div class="lamp" style="left:675px;top:793px"></div>
<div class="lamp" style="left:755px;top:793px"></div>
<div class="cir g" style="left:819px;top:793px"></div>
<div class="t w" style="left:851px;top:794px">S2<span class="cj" style="width:4em">动作注释</span>30</div>
<div class="cir" style="left:371px;top:813px"></div>
<div class="t w" style="left:403px;top:814px">S2<span class="cj" style="width:4em">条件注释</span>31</div>
<div class="lamp" style="left:611px;top:813px"></div>
<div class="lamp" style="left:675px;top:813px"></div>
<div class="lamp" style="left:755px;top:813px"></div>
<div class="cir g" style="left:819px;top:813px"></div>
<div class="t w" style="left:851px;top:814px">S2<span class="cj" style="width:4em">动作注释</span>31</div>
<div class="cir" style="left:371px;top:833px"></div>
<div class="t w" style="left:403px;top:834px">S2<span class="cj" style="width:4em">条件注释</span>32</div>
<div class="lamp" style="left:611px;top:833px"></div>
<div class="lamp" style="left:675px;top:833px"></div>
<div class="lamp" style="left:755px;top:833px"></div>
<div class="cir g" style="left:819px;top:833px"></div>
<div class="t w" style="left:851px;top:834px">S2<span class="cj" style="width:4em">动作注释</span>32</div>
<div class="sb" style="top:226px"><i><span class="cj" style="width:2em">工位</span>1</i></div>
<div class="sb on" style="top:278px"><i><span class="cj" style="width:2em">工位</span>2</i></div>
<div class="sb" style="top:330px"><i><span class="cj" style="width:2em">工位</span>3</i></div>
<div class="sb" style="top:382px"><i><span class="cj" style="width:2em">工位</span>4</i></div>
<div class="sb" style="top:434px"><i><span class="cj" style="width:2em">工位</span>5</i></div>
<div class="mb" style="left:259px;top:225px"><span class="cj" style="width:4em">自动模式</span></div>
<div class="mb" style="left:259px;top:245px"><span class="cj" style="width:4em">单步模式</span></div>
<div class="mb" style="left:259px;top:265px"><span class="cj" style="width:4em">单步转移</span></div>
<div class="mb on" style="left:259px;top:285px"><span class="cj" style="width:4em">编辑模式</span></div>
<div class="mb" style="left:259px;top:305px"><span class="cj" style="width:6em">监控超时选择</span></div>
<div class="mb" style="left:259px;top:325px"><span class="cj" style="width:4em">转移条件</span>OK</div>
<div class="mb" style="left:259px;top:345px"><span class="cj" style="width:2em">异常</span></div>
<div class="mb" style="left:259px;top:365px"><span class="cj" style="width:4em">异常复位</span></div>
<div class="mb" style="left:259px;top:385px"><span class="cj" style="width:3em">初始化</span></div>
<div class="mb" style="left:259px;top:481px"><span class="cj" style="width:2em">首步</span></div>
<div class="mb" style="left:259px;top:501px"><span class="cj" style="width:2em">末步</span></div>
<div class="mb" style="left:259px;top:521px"><span class="cj" style="width:3em">上一步</span></div>
<div class="mb" style="left:259px;top:541px"><span class="cj" style="width:3em">下一步</span></div>
<div class="mb" style="left:259px;top:561px"><span class="cj" style="width:2em">剪切</span></div>
<div class="mb" style="left:259px;top:581px"><span class="cj" style="width:2em">复制</span></div>
<div class="mb" style="left:259px;top:601px"><span class="cj" style="width:2em">粘粘</span></div>
<div class="mb" style="left:259px;top:621px"><span class="cj" style="width:2em">插入</span></div>
<div class="mb" style="left:259px;top:641px"><span class="cj" style="width:2em">删除</span></div>
<div class="mb" style="left:259px;top:661px"><span class="cj" style="width:2em">新增</span></div>
<div class="abs" style="left:1048px;top:16px;width:252px;height:205px;background:#f0f0f0;border:1px solid #aaa;box-shadow:0 0 12px rgba(0,0,0,.3)"></div>
<div class="abs" style="left:1049px;top:17px;width:250px;height:42px;background:#fff"></div>
<div class="abs" style="left:1052px;top:21px;width:16px;height:14px;background:#1010e0;border:1px solid #333;border-right-width:2px;border-bottom-width:2px"></div>
<div class="abs" style="left:1055px;top:24px;width:10px;height:7px;background:repeating-linear-gradient(90deg,#999 0 1px,#ddd 1px 2px)"></div><div class="abs" style="left:1055px;top:24px;width:2px;height:7px;background:#e00"></div>
<div class="t" style="left:1073px;top:19px;font-size:13px;line-height:16px;color:#999">GX Simulator2</div>
<div class="abs" style="left:1181px;top:28px;width:10px;height:1px;background:#999"></div>
<div class="abs" style="left:1226px;top:23px;width:10px;height:10px;border:1px solid #ccc"></div>
<svg class="abs" style="left:1271px;top:22px" width="12" height="12"><path d="M0.5 0.5L11.5 11.5M11.5 0.5L0.5 11.5" stroke="#ccc" stroke-width="1.1"/></svg>
<div class="t" style="left:1056px;top:43px;font-size:12px;line-height:14px;color:#000"><span class="cj" style="width:2em">工具</span>(T)</div>
<div class="t" style="left:1109px;top:43px;font-size:12px;line-height:14px;color:#000"><span class="cj" style="width:2em">选项</span>(O)</div>
<div class="abs" style="left:1064px;top:78px;width:209px;height:32px;border:1px solid #bbb"></div>
<div class="t" style="left:1072px;top:72px;font-size:12px;line-height:13px;color:#000;background:#f0f0f0;padding:0 2px"><span class="cj" style="width:2em">开关</span></div>
<div class="abs" style="left:1064px;top:121px;width:209px;height:91px;border:1px solid #bbb"></div>
<div class="t" style="left:1071px;top:116px;font-size:12px;line-height:12px;color:#000;background:#f0f0f0;padding:0 1px">LED</div>
<div class="abs" style="left:1080px;top:90px;width:11px;height:11px;border-radius:50%;border:1px solid #888;border-right-color:#fff;border-bottom-color:#fff;background:#fff"></div>
<div class="t" style="left:1096px;top:90px;font-size:11px;line-height:13px;color:#999">RESET</div>
<div class="abs" style="left:1146px;top:90px;width:11px;height:11px;border-radius:50%;border:1px solid #888;border-right-color:#fff;border-bottom-color:#fff;background:#fff"></div>
<div class="t" style="left:1162px;top:90px;font-size:11px;line-height:13px;color:#000">STOP</div>
<div class="abs" style="left:1212px;top:90px;width:11px;height:11px;border-radius:50%;border:1px solid #888;border-right-color:#fff;border-bottom-color:#fff;background:#fff"></div>
<div class="abs" style="left:1215px;top:93px;width:5px;height:5px;border-radius:50%;background:#000"></div>
<div class="t" style="left:1228px;top:90px;font-size:11px;line-height:13px;color:#000">RUN</div>
<div class="abs" style="left:1112px;top:129px;width:114px;height:77px;background:#808080"></div>
<div class="t" style="right:758px;top:132.0px;font-size:13px;line-height:14px;color:#fff">MODE</div>
<div class="abs" style="left:1181px;top:134.0px;width:25px;height:10px;background:#00ff00"></div>
<div class="t" style="right:758px;top:150.5px;font-size:13px;line-height:14px;color:#fff">RUN</div>
<div class="abs" style="left:1181px;top:152.5px;width:25px;height:10px;background:#00ff00"></div>
<div class="t" style="right:758px;top:169.0px;font-size:13px;line-height:14px;color:#fff">ERR.</div>
<div class="abs" style="left:1181px;top:171.0px;width:25px;height:10px;background:#c0c0c0"></div>
<div class="t" style="right:758px;top:187.5px;font-size:13px;line-height:14px;color:#fff">USER</div>
<div class="abs" style="left:1181px;top:189.5px;width:25px;height:10px;background:#c0c0c0"></div>
</div></div>
<div class="abs" style="left:843px;top:285px;width:555px;height:311px;overflow:hidden;box-shadow:0 0 0 1px rgba(0,0,0,.15)"><div class="abs" style="left:0;top:0;width:1920px;height:1080px;transform:scale(0.289);transform-origin:0 0;overflow:hidden;background:#e6e6e6">
<div class="abs" style="left:0;top:0;width:1920px;height:67px;background:#2b579a"></div>
<div class="abs" style="left:0;top:67px;width:1920px;height:95px;background:#f1f1f1;border-bottom:1px solid #d4d4d4"></div>
<div class="abs" style="left:0;top:162px;width:1920px;height:856px;background:#e6e6e6"></div>
<div class="abs" style="left:0;top:162px;width:1920px;height:856px;overflow:hidden">
<div class="abs" style="left:725px;top:0px;width:792px;height:856px;background:#fff;border-right:1px solid #c6c6c6"></div>
</div>
<div class="abs" style="left:0;top:1018px;width:1920px;height:22px;background:#f1f1f1;border-top:1px solid #d4d4d4"></div>
<div class="abs" style="left:0;top:1040px;width:1920px;height:40px;background:#101a24"></div>
<div class="abs" style="left:48px;top:1040px;width:344px;height:40px;background:#f0f0f0"></div>
<svg class="abs" style="left:1400px;top:0" width="520" height="66"><g fill="#264c88"><path d="M40 50C36 40 38 28 45 20C50 8 62 2 78 4C92 5 104 12 106 22C108 30 102 35 92 35H60C50 36 45 42 44 50Z"/><path d="M126 50C120 44 124 32 130 26C134 14 146 10 160 12C168 4 182 2 196 6C210 10 216 24 214 34C214 44 206 50 196 50Z"/><path d="M232 0H394C398 10 398 24 392 34C380 42 360 44 340 44H250C240 44 234 40 232 30Z"/><path d="M330 0H400C420 0 440 4 452 12C458 20 452 28 440 30H380Z"/><circle cx="465" cy="32" r="10"/></g></svg>
<div class="t" style="left:893px;top:7px;font-size:12px;line-height:14px;color:#e0e8f4"><span class="cj" style="width:4em">说明文档</span>.docx - Word</div>
<div class="abs" style="left:22px;top:9px;width:14px;height:3px;background:#dde6f3"></div><div class="abs" style="left:54px;top:9px;width:4px;height:3px;background:#dde6f3"></div><div class="abs" style="left:90px;top:9px;width:10px;height:3px;background:#dde6f3"></div>
<div class="t" style="left:1690px;top:7px;font-size:13px;line-height:16px;color:#c8d4e8"><span class="cj" style="width:3em">张文举</span></div>
<div class="abs" style="left:1752px;top:10px;width:13px;height:10px;border:1px solid #9fb2d4"></div>
<div class="abs" style="left:1752px;top:13px;width:13px;height:1px;background:#9fb2d4"></div>
<div class="abs" style="left:1799px;top:15px;width:11px;height:1px;background:#7f96c0"></div>
<div class="abs" style="left:1846px;top:12px;width:8px;height:8px;border:1px solid #9fb2d4"></div><div class="abs" style="left:1848px;top:10px;width:8px;height:8px;border-top:1px solid #9fb2d4;border-right:1px solid #9fb2d4"></div>
<svg class="abs" style="left:1891px;top:9px" width="12" height="12"><path d="M0.5 0.5L11.5 11.5M11.5 0.5L0.5 11.5" stroke="#9fb2d4" stroke-width="1.1"/></svg>
<div class="abs" style="left:1842px;top:35px;width:63px;height:31px;background:#1f4a85"></div>
<svg class="abs" style="left:1848px;top:41px" width="16" height="18"><circle cx="7" cy="5" r="4" fill="none" stroke="#fff" stroke-width="1.3"/><path d="M1 16 Q2 9 7 9 Q10 9 11 11" fill="none" stroke="#fff" stroke-width="1.3"/><path d="M9 14h6M12 11v6" stroke="#fff" stroke-width="1.3"/></svg>
<div class="t" style="left:1866px;top:42px;font-size:13px;line-height:16px;color:#fff"><span class="cj" style="width:2em">共享</span></div>
<div class="abs" style="left:1290px;top:73px;width:490px;height:59px;background:#fff;border:1px solid #c6c6c6"></div>
<div class="abs" style="left:1779px;top:73px;width:14px;height:59px;background:#fff;border:1px solid #c6c6c6"></div>
<div class="abs" style="left:1780px;top:92px;width:12px;height:1px;background:#c6c6c6"></div>
<div class="abs" style="left:1780px;top:112px;width:12px;height:1px;background:#c6c6c6"></div>
<div class="abs" style="left:1782px;top:103px;width:0;height:0;border-left:4px solid transparent;border-right:4px solid transparent;border-top:4px solid #555"></div>
<div class="abs" style="left:1782px;top:120px;width:8px;height:1px;background:#555"></div>
<div class="abs" style="left:1782px;top:123px;width:0;height:0;border-left:4px solid transparent;border-right:4px solid transparent;border-top:4px solid #555"></div>
<div class="t" style="left:1273px;width:72px;overflow:hidden;text-align:center;top:86px;font-size:13px;line-height:16px;color:#2e62b0;font-style:italic;font-weight:normal;letter-spacing:-0.3px">AaBbCcD.</div>
<div class="t" style="left:1269px;width:80px;text-align:center;top:110px;font-size:12px;line-height:14px;color:#444"><span class="cj" style="width:3em">显强调</span></div>
<div class="t" style="left:1345px;width:72px;overflow:hidden;text-align:center;top:86px;font-size:13px;line-height:16px;color:#000;font-style:normal;font-weight:bold;letter-spacing:-0.3px">AaBbCcD</div>
<div class="t" style="left:1341px;width:80px;text-align:center;top:110px;font-size:12px;line-height:14px;color:#444"><span class="cj" style="width:2em">要点</span></div>
<div class="t" style="left:1417px;width:72px;overflow:hidden;text-align:center;top:86px;font-size:13px;line-height:16px;color:#555;font-style:italic;font-weight:normal;letter-spacing:-0.3px">AaBbCcD.</div>
<div class="t" style="left:1413px;width:80px;text-align:center;top:110px;font-size:12px;line-height:14px;color:#444"><span class="cj" style="width:2em">引用</span></div>
<div class="t" style="left:1489px;width:72px;overflow:hidden;text-align:center;top:86px;font-size:13px;line-height:16px;color:#4472c4;font-style:italic;font-weight:normal;text-decoration:underline;letter-spacing:-0.3px">AaBbCcD.</div>
<div class="t" style="left:1485px;width:80px;text-align:center;top:110px;font-size:12px;line-height:14px;color:#444"><span class="cj" style="width:4em">明显引用</span></div>
<div class="t" style="left:1561px;width:72px;overflow:hidden;text-align:center;top:86px;font-size:13px;line-height:16px;color:#666;font-style:normal;font-weight:normal;font-variant:small-caps;letter-spacing:-0.3px">AaBbCcDı</div>
<div class="t" style="left:1557px;width:80px;text-align:center;top:110px;font-size:12px;line-height:14px;color:#444"><span class="cj" style="width:5em">不明显参考</span></div>
<div class="t" style="left:1633px;width:72px;overflow:hidden;text-align:center;top:86px;font-size:13px;line-height:16px;color:#2e62b0;font-style:normal;font-weight:normal;font-variant:small-caps;letter-spacing:-0.3px">AaBbCcDı</div>
<div class="t" style="left:1629px;width:80px;text-align:center;top:110px;font-size:12px;line-height:14px;color:#444"><span class="cj" style="width:4em">明显参考</span></div>
<div class="t" style="left:1705px;width:72px;overflow:hidden;text-align:center;top:86px;font-size:13px;line-height:16px;color:#000;font-style:italic;font-weight:bold;letter-spacing:-0.3px">AaBbCcD</div>
<div class="t" style="left:1701px;width:80px;text-align:center;top:110px;font-size:12px;line-height:14px;color:#444"><span class="cj" style="width:4em">书籍标题</span></div>
<div class="abs" style="left:1800px;top:72px;width:1px;height:86px;background:#dadada"></div>
<div class="abs" style="left:1875px;top:72px;width:1px;height:86px;background:#dadada"></div>
<svg class="abs" style="left:1810px;top:74px" width="14" height="14"><circle cx="8.5" cy="5.5" r="4" fill="none" stroke="#2e62b0" stroke-width="1.6"/><path d="M5.5 8.5L1 13" stroke="#2e62b0" stroke-width="2"/></svg>
<div class="t" style="left:1827px;top:74px;font-size:12px;line-height:14px;color:#222"><span class="cj" style="width:2em">查找</span></div>
<div class="abs" style="left:1860px;top:79px;width:0;height:0;border-left:3px solid transparent;border-right:3px solid transparent;border-top:3px solid #444"></div>
<div class="t" style="left:1808px;top:95px;font-size:10px;line-height:9px;color:#2e62b0">ab<br>ac</div>
<div class="t" style="left:1827px;top:97px;font-size:12px;line-height:14px;color:#222"><span class="cj" style="width:2em">替换</span></div>
<svg class="abs" style="left:1811px;top:118px" width="12" height="16"><path d="M1 1L1 13L4 10L7 15L9 14L6 9L10 9Z" fill="#fff" stroke="#444" stroke-width="1"/></svg>
<div class="t" style="left:1827px;top:120px;font-size:12px;line-height:14px;color:#222"><span class="cj" style="width:2em">选择</span></div>
<div class="abs" style="left:1855px;top:126px;width:0;height:0;border-left:3px solid transparent;border-right:3px solid transparent;border-top:3px solid #444"></div>
<div class="t" style="left:1827px;top:143px;font-size:12px;line-height:14px;color:#666"><span class="cj" style="width:2em">编辑</span></div>
<svg class="abs" style="left:1899px;top:148px" width="12" height="8"><path d="M1 6L6 1L11 6" fill="none" stroke="#555" stroke-width="1.3"/></svg>
<div class="abs" style="left:1788px;top:149px;width:8px;height:8px;border-right:1px solid #888;border-bottom:1px solid #888"></div>
<div class="abs" style="left:13px;top:78px;width:4px;height:24px;background:#e9c98a"></div>
<div class="abs" style="left:0px;top:162px;width:17px;height:856px;background:#e6e6e6"></div>
<div class="abs" style="left:337px;top:886px;width:1px;height:132px;background:#c8c8c8"></div>
<div class="t" style="left:8px;top:1021px;font-size:12px;line-height:14px;color:#444"><span class="cj" style="width:1em">第</span> 1 <span class="cj" style="width:3em">页，共</span> 2 <span class="cj" style="width:1em">页</span></div>
<div class="t" style="left:117px;top:1021px;font-size:12px;line-height:14px;color:#444">16 <span class="cj" style="width:2em">个字</span></div>
<div class="abs" style="left:178px;top:1022px;width:8px;height:12px;border:1px solid #555"></div>
<div class="t" style="left:210px;top:1021px;font-size:12px;line-height:14px;color:#444"><span class="cj" style="width:2em">中文</span>(<span class="cj" style="width:2em">中国</span>)</div>
<div class="abs" style="left:1667px;top:1018px;width:38px;height:22px;background:#d6d6d6"></div>
<div class="abs" style="left:1641px;top:1023px;width:13px;height:11px;border:1px solid #555;background:repeating-linear-gradient(transparent 0 2px,#777 2px 3px)"></div>
<div class="abs" style="left:1679px;top:1023px;width:13px;height:11px;border:1px solid #555;background:repeating-linear-gradient(transparent 0 2px,#777 2px 3px)"></div>
<div class="abs" style="left:1717px;top:1023px;width:13px;height:11px;border:1px solid #555;background:repeating-linear-gradient(transparent 0 2px,#777 2px 3px)"></div>
<div class="abs" style="left:1747px;top:1028px;width:6px;height:1px;background:#444"></div>
<div class="abs" style="left:1758px;top:1028px;width:100px;height:1px;background:#999"></div>
<div class="abs" style="left:1806px;top:1022px;width:4px;height:12px;background:#444"></div>
<div class="abs" style="left:1861px;top:1028px;width:7px;height:1px;background:#444"></div>
<div class="abs" style="left:1864px;top:1025px;width:1px;height:7px;background:#444"></div>
<div class="t" style="left:1880px;top:1021px;font-size:12px;line-height:14px;color:#444">100%</div>
<svg class="abs" style="left:15px;top:1052px" width="17" height="17"><path d="M0 2.3L7 1.3V8H0Z M8 1.1L17 0V8H8Z M0 9H7V15.7L0 14.7Z M8 9H17V17L8 15.9Z" fill="#fff"/></svg>
<div class="abs" style="left:58px;top:1050px;width:20px;height:20px;border-radius:50%;border:2.5px solid #111"></div>
<div class="t" style="left:88px;top:1052px;font-size:14px;line-height:16px;color:#333"><span class="cj" style="width:12em">在这里输入你要搜索的内容</span></div>
<div class="abs" style="left:367px;top:1052px;width:7px;height:11px;border:1.5px solid #333;border-radius:4px"></div>
<div class="abs" style="left:365px;top:1058px;width:11px;height:7px;border:1.5px solid #333;border-top:none;border-radius:0 0 6px 6px"></div>
<div class="abs" style="left:370px;top:1065px;width:1.5px;height:4px;background:#333"></div>
<div class="abs" style="left:408px;top:1052px;width:15px;height:16px;border:1.5px solid #fff;border-radius:1px"></div>
<div class="abs" style="left:405px;top:1054px;width:3px;height:12px;border:1.5px solid #fff;border-right:none"></div>
<div class="abs" style="left:423px;top:1054px;width:3px;height:12px;border:1.5px solid #fff;border-left:none"></div>
<svg class="abs" style="left:456px;top:1049px" width="22" height="22" viewBox="0 0 22 22"><path d="M21 12.5H7.2C7.6 16 10 17.8 13.3 17.8c2.6 0 5-0.9 7.2-2.3v4.6C18.3 21.4 15.8 22 12.8 22 6 22 2 17.8 2 11.5 2 5.2 6.2 0 13 0c5.3 0 8.5 3.600 8.5 9.5zM15.5 9C15.4 6.300 14 4.500 11.500 4.500 9.200 4.500 7.600 6.300 7.300 9z" fill="#1e78d8"/></svg>
<div class="abs" style="left:505px;top:1052px;width:20px;height:18px;background:#fff;border-radius:1px"></div>
<div class="abs" style="left:510px;top:1048px;width:10px;height:8px;border:1.5px solid #fff;border-bottom:none;border-radius:4px 4px 0 0"></div>
<div class="abs" style="left:510px;top:1056px;width:4px;height:4px;background:#f25022"></div><div class="abs" style="left:515px;top:1056px;width:4px;height:4px;background:#7fba00"></div><div class="abs" style="left:510px;top:1061px;width:4px;height:4px;background:#00a4ef"></div><div class="abs" style="left:515px;top:1061px;width:4px;height:4px;background:#ffb900"></div>
<div class="abs" style="left:554px;top:1049px;width:22px;height:22px;border-radius:50%;background:#2a8ae0;border:2px solid #fff"></div>
<div class="abs" style="left:563px;top:1053px;width:3px;height:13px;background:#fff;transform:rotate(45deg)"></div>
<svg class="abs" style="left:602px;top:1049px" width="24" height="22" viewBox="0 0 24 22"><ellipse cx="12" cy="11" rx="11.5" ry="11" fill="#f2cc1a"/><circle cx="9.5" cy="15.5" r="4" fill="#2fb34a"/><path d="M12 15V3.5c2 2 5 2.500 5.500 5.500" stroke="#2fb34a" stroke-width="2.2" fill="none"/></svg>
<svg class="abs" style="left:651px;top:1049px" width="24" height="20"><path d="M0 8L12 0L24 8V20H0Z" fill="#fff"/><path d="M0 8L12 16L24 8" fill="none" stroke="#101a24" stroke-width="1.3"/><path d="M8 12L17 10L11 17Z" fill="#101a24"/></svg>
<svg class="abs" style="left:700px;top:1050px" width="22" height="20"><path d="M0 1h8l2 2h12v17H0z" fill="#f0c040"/><path d="M0 5h22v15H0z" fill="#fbe08a"/><path d="M4 13h14v3h-2v3h-3v-3H9v3H6v-3H4z" fill="#2a8ad8"/></svg>
<div class="abs" style="left:750px;top:1050px;width:21px;height:21px;border-radius:50%;background:conic-gradient(from -30deg,#db4437 0 120deg,#f4c20d 120deg 240deg,#0f9d58 240deg 360deg)"></div>
<div class="abs" style="left:755px;top:1055px;width:11px;height:11px;border-radius:50%;background:#4285f4;border:2px solid #fff"></div>
<div class="abs" style="left:790px;top:1078px;width:152px;height:2px;background:#a9cdf0"></div>
<svg class="abs" style="left:796px;top:1048px" width="24" height="24" viewBox="0 0 16 16"><rect x="0" y="0" width="16" height="16" rx="1" fill="#0a7a2a"/><path d="M0 11h10v5H0z" fill="#0a6020"/><path d="M5 11h5l-1 5H4z" fill="#88c098"/><path d="M2 2h9v7H8.5l0.5 1.5H3.5L4.5 9H2z" fill="#fff"/><rect x="2.5" y="10.3" width="7" height="1.3" fill="#fff"/><rect x="3.5" y="3.2" width="6" height="4.3" fill="#0a7a2a"/><rect x="4.3" y="4" width="4.4" height="2.7" fill="#fff"/><path d="M10.8 9.2H14.4V14.4H10.8M11.8 11.8H14.4" stroke="#fff" stroke-width="1.3" fill="none"/><rect x="12" y="7" width="3" height="1.2" fill="#fff"/><path d="M12.5 5l1-3 1 3" stroke="#fff" stroke-width="0.8" fill="none"/></svg>
<div class="t" style="left:825px;top:1051px;font-size:12.6px;line-height:17px;color:#fff">MELSOFT GT Des...</div>
<div class="abs" style="left:951px;top:1078px;width:152px;height:2px;background:#a9cdf0"></div>
<div class="abs" style="left:959px;top:1048px;width:24px;height:24px;background:#1010e0;border:2px solid #aaa"></div>
<div class="abs" style="left:964px;top:1054px;width:13px;height:9px;background:repeating-linear-gradient(90deg,#999 0 1px,#ddd 1px 3px)"></div><div class="abs" style="left:964px;top:1054px;width:3px;height:9px;background:#e00"></div>
<div class="t" style="left:986px;top:1051px;font-size:12.6px;line-height:17px;color:#fff">GX Simulator2</div>
<div class="abs" style="left:1112px;top:1078px;width:152px;height:2px;background:#a9cdf0"></div>
<div class="abs" style="left:1119px;top:1048px;width:24px;height:24px;background:linear-gradient(135deg,#ff3030,#c00000);border-radius:2px"></div>
<div class="t" style="left:1122px;top:1051px;font-size:16px;line-height:18px;color:#fff;font-weight:bold">TF</div>
<div class="t" style="left:1147px;top:1051px;font-size:12.6px;line-height:17px;color:#fff">MELSOFT<span class="cj" style="width:2em">系列</span> GX...</div>
<div class="abs" style="left:1269px;top:1040px;width:160px;height:40px;background:#2e3a46"></div>
<div class="abs" style="left:1269px;top:1078px;width:160px;height:2px;background:#a9cdf0"></div>
<svg class="abs" style="left:1275px;top:1048px" width="24" height="24" viewBox="0 0 16 16"><rect x="0" y="0" width="16" height="16" rx="1" fill="#0a7a2a"/><path d="M0 11h10v5H0z" fill="#0a6020"/><path d="M5 11h5l-1 5H4z" fill="#88c098"/><path d="M2 2h9v7H8.5l0.5 1.5H3.5L4.5 9H2z" fill="#fff"/><rect x="2.5" y="10.3" width="7" height="1.3" fill="#fff"/><rect x="3.5" y="3.2" width="6" height="4.3" fill="#0a7a2a"/><rect x="4.3" y="4" width="4.4" height="2.7" fill="#fff"/><path d="M10.8 9.2H14.4V14.4H10.8M11.8 11.8H14.4" stroke="#fff" stroke-width="1.3" fill="none"/><rect x="12" y="7" width="3" height="1.2" fill="#fff"/><path d="M12.5 5l1-3 1 3" stroke="#fff" stroke-width="0.8" fill="none"/></svg>
<div class="t" style="left:1304px;top:1051px;font-size:12.6px;line-height:17px;color:#fff">GT Simulator3 (G...</div>
<div class="abs" style="left:1434px;top:1078px;width:152px;height:2px;background:#a9cdf0"></div>
<div class="abs" style="left:1445px;top:1049px;width:20px;height:22px;background:#fff;border:1px solid #2b579a"></div>
<div class="abs" style="left:1440px;top:1051px;width:14px;height:18px;background:#2b579a"></div>
<div class="t" style="left:1442px;top:1053px;font-size:11px;line-height:14px;color:#fff;font-weight:bold">W</div>
<div class="t" style="left:1469px;top:1051px;font-size:12.6px;line-height:17px;color:#fff"><span class="cj" style="width:4em">说明文档</span>.docx - ...</div>
<svg class="abs" style="left:1644px;top:1054px" width="14" height="9"><path d="M1 8L7 2L13 8" fill="none" stroke="#fff" stroke-width="1.4"/></svg>
<div class="abs" style="left:1669px;top:1055px;width:15px;height:10px;border:1.5px solid #fff"></div><div class="abs" style="left:1671px;top:1057px;width:9px;height:6px;background:#fff"></div>
<svg class="abs" style="left:1693px;top:1048px" width="20" height="20"><path d="M6 18A12 12 0 0 1 18 6M9 18A9 9 0 0 1 18 9M12 18A6 6 0 0 1 18 12" fill="none" stroke="#777" stroke-width="1.2"/><text x="0" y="8" font-size="9" fill="#fff">*</text></svg>
<svg class="abs" style="left:1714px;top:1052px" width="18" height="16"><path d="M1 5H4L8 1V15L4 11H1Z" fill="none" stroke="#fff" stroke-width="1.2"/><path d="M11 5L16 11M16 5L11 11" stroke="#fff" stroke-width="1.2"/></svg>
<div class="t" style="left:1740px;top:1050px;font-size:15px;line-height:18px;color:#fff"><span class="cj" style="width:1em">中</span></div>
<div class="abs" style="left:1768px;top:1052px;width:15px;height:16px;border:1.5px solid #fff"></div><div class="t" style="left:1769px;top:1052px;font-size:12px;line-height:15px;color:#fff"><span class="cj" style="width:1em">五</span></div>
<div class="t" style="left:1814px;top:1042px;font-size:13px;line-height:16px;color:#fff">21:46</div>
<div class="t" style="left:1801px;top:1061px;font-size:13px;line-height:16px;color:#fff">2018-1-31</div>
<svg class="abs" style="left:1878px;top:1050px" width="20" height="19"><path d="M1 1H19V13H10L6 17V13H1Z" fill="none" stroke="#fff" stroke-width="1.3"/></svg>
<div class="abs" style="left:1911px;top:1040px;width:1px;height:40px;background:#5a6470"></div>
<div class="abs" style="left:16px;top:11px;width:1030px;height:876px;background:#f0f0f0;border:1px solid #2a8cf4;box-shadow:0 2px 14px rgba(0,0,0,.3)"></div>
<div class="abs" style="left:17px;top:12px;width:1028px;height:30px;background:#fff"></div>
<div class="abs" style="left:17px;top:42px;width:1028px;height:53px;background:linear-gradient(90deg,#a9c6f0,#c4d8f6)"></div>
<div class="abs" style="left:17px;top:95px;width:1028px;height:773px;background:#000;border-left:2px solid #a0a0a0;border-top:2px solid #a0a0a0;border-right:2px solid #fff;border-bottom:2px solid #fff"></div>
<div class="abs" style="left:17px;top:867px;width:1028px;height:1px;background:#d8d8d8"></div>
<div class="abs" style="left:1041px;top:876px;width:2px;height:2px;background:#a8a8a8"></div>
<div class="abs" style="left:1038px;top:879px;width:2px;height:2px;background:#a8a8a8"></div>
<div class="abs" style="left:1041px;top:879px;width:2px;height:2px;background:#a8a8a8"></div>
<div class="abs" style="left:1035px;top:882px;width:2px;height:2px;background:#a8a8a8"></div>
<div class="abs" style="left:1038px;top:882px;width:2px;height:2px;background:#a8a8a8"></div>
<div class="abs" style="left:1041px;top:882px;width:2px;height:2px;background:#a8a8a8"></div>
<div class="t" style="left:46px;top:18px;font-size:12.5px;line-height:16px;color:#000">GT Simulator3 (GT27) &nbsp;[<span class="cj" style="width:7em">工程标题未设置</span> ]</div>
<svg class="abs" style="left:25px;top:18px" width="16" height="16" viewBox="0 0 16 16"><rect x="0" y="0" width="16" height="16" rx="1" fill="#0a7a2a"/><path d="M0 11h10v5H0z" fill="#0a6020"/><path d="M5 11h5l-1 5H4z" fill="#88c098"/><path d="M2 2h9v7H8.5l0.5 1.5H3.5L4.5 9H2z" fill="#fff"/><rect x="2.5" y="10.3" width="7" height="1.3" fill="#fff"/><rect x="3.5" y="3.2" width="6" height="4.3" fill="#0a7a2a"/><rect x="4.3" y="4" width="4.4" height="2.7" fill="#fff"/><path d="M10.8 9.2H14.4V14.4H10.8M11.8 11.8H14.4" stroke="#fff" stroke-width="1.3" fill="none"/><rect x="12" y="7" width="3" height="1.2" fill="#fff"/><path d="M12.5 5l1-3 1 3" stroke="#fff" stroke-width="0.8" fill="none"/></svg>
<div class="abs" style="left:926px;top:26px;width:10px;height:1px;background:#000"></div>
<div class="abs" style="left:971px;top:21px;width:10px;height:10px;border:1px solid #000"></div>
<svg class="abs" style="left:1016px;top:20px" width="12" height="12"><path d="M0.5 0.5L11.5 11.5M11.5 0.5L0.5 11.5" stroke="#000" stroke-width="1.1"/></svg>
<div class="abs" style="left:23px;top:47px;width:2px;height:14px;background:repeating-linear-gradient(#000 0 2px,transparent 2px 4px)"></div>
<div class="t" style="left:36px;top:48px;font-size:12px;line-height:14px;color:#000"><span class="cj" style="width:2em">工程</span>(<u>P</u>)</div>
<div class="t" style="left:90px;top:48px;font-size:12px;line-height:14px;color:#000"><span class="cj" style="width:2em">显示</span>(<u>V</u>)</div>
<div class="t" style="left:146px;top:48px;font-size:12px;line-height:14px;color:#000"><span class="cj" style="width:2em">模拟</span>(<u>S</u>)</div>
<div class="t" style="left:201px;top:48px;font-size:12px;line-height:14px;color:#000"><span class="cj" style="width:2em">工具</span>(<u>T</u>)</div>
<div class="t" style="left:256px;top:48px;font-size:12px;line-height:14px;color:#000"><span class="cj" style="width:2em">帮助</span>(<u>H</u>)</div>
<div class="abs" style="left:20px;top:70px;width:187px;height:24px;border-radius:3px 0 0 3px;background:linear-gradient(#dfeafb,#c6d9f6 60%,#a9c3ec);border-bottom:1px solid #7f9fd0"></div>
<div class="abs" style="left:207px;top:70px;width:11px;height:24px;border-radius:0 3px 3px 0;background:linear-gradient(#5b8ad6,#2453a8)"></div>
<svg class="abs" style="left:208px;top:83px" width="9" height="8"><path d="M1 1h7" stroke="#fff" stroke-width="1.2"/><path d="M1 4h7l-3.5 3.5z" fill="#fff"/></svg>
<div class="abs" style="left:23px;top:74px;width:2px;height:16px;background:repeating-linear-gradient(#000 0 2px,transparent 2px 4px)"></div>
<div class="abs" style="left:74px;top:75px;width:1px;height:15px;background:#7d9ccc;box-shadow:1px 0 0 #f0f6ff"></div>
<div class="abs" style="left:124px;top:75px;width:1px;height:15px;background:#7d9ccc;box-shadow:1px 0 0 #f0f6ff"></div>
<div class="abs" style="left:152px;top:75px;width:1px;height:15px;background:#7d9ccc;box-shadow:1px 0 0 #f0f6ff"></div>
<div class="abs" style="left:180px;top:75px;width:1px;height:15px;background:#7d9ccc;box-shadow:1px 0 0 #f0f6ff"></div>

<svg class="abs" style="left:30px;top:74px" width="17" height="16"><path d="M1 5h5l1 1h6v9H1z" fill="#b9c5d9"/><path d="M3 8h12l-2 7H1z" fill="#d0daea"/><path d="M6 3 Q11 0 13 5 L15 4 L13 9 L9 7 L11 6 Q10 3 7 5z" fill="#8fa3c4"/><text x="2" y="15" font-size="7" font-weight="bold" fill="#8a9ab8">W</text></svg>
<svg class="abs" style="left:52px;top:74px" width="17" height="16"><path d="M1 5h5l1 1h6v9H1z" fill="#b9c5d9"/><path d="M3 8h13l-3 7H1z" fill="#d0daea"/><path d="M6 3 Q11 0 13 5 L15 4 L13 9 L9 7 L11 6 Q10 3 7 5z" fill="#8fa3c4"/></svg>
<svg class="abs" style="left:80px;top:74px" width="17" height="16"><rect x="0.5" y="0.5" width="11" height="8" fill="#c4cfe0" stroke="#9aa8c0"/><path d="M0 10v6l5-3z" fill="#a8b6cc"/><rect x="11" y="11" width="5" height="5" rx="2" fill="#b0bccc"/></svg>
<svg class="abs" style="left:102px;top:74px" width="17" height="16"><rect x="0.5" y="0.5" width="11" height="8" fill="#7fb7ea" stroke="#333"/><circle cx="4.5" cy="11.5" r="3.6" fill="#fff" stroke="#e01010" stroke-width="1.6"/><rect x="11" y="11" width="5" height="5" rx="2" fill="#333"/></svg>
<svg class="abs" style="left:130px;top:74px" width="17" height="16"><rect x="0" y="0" width="15" height="6" fill="#1a6ad0"/><text x="1" y="5.5" font-size="5.5" font-weight="bold" fill="#fff">DEV</text><path d="M0 8v8l6-4z" fill="#10a030"/><circle cx="11" cy="11" r="3" fill="#fff" stroke="#333" stroke-width="1.3"/><path d="M13 13l3 3" stroke="#333" stroke-width="1.5"/></svg>
<svg class="abs" style="left:158px;top:74px" width="17" height="16"><path d="M0 6h5l1 1h8v9H0z" fill="#f0c030"/><path d="M2 9h14l-2 7H0z" fill="#f8d860"/><rect x="0" y="10" width="6" height="6" fill="#111"/><path d="M6 4 Q10 -1 13 4 L15 3 L13 9 L9 6 L11 5 Q9 2 7 5z" fill="#1a3aa0"/></svg>
<svg class="abs" style="left:186px;top:74px" width="17" height="16"><rect x="0.5" y="0.5" width="11" height="8" fill="#7fb7ea" stroke="#333"/><path d="M1 15 L7 9" stroke="#222" stroke-width="2"/><circle cx="8" cy="8" r="2" fill="none" stroke="#222" stroke-width="1.4"/><rect x="11" y="11" width="5" height="5" rx="2" fill="#333"/></svg>

<div class="t" style="left:19px;top:870px;font-size:12px;line-height:14px;color:#000"><span class="cj" style="width:2em">就绪</span></div>
<div class="t" style="left:676px;top:870px;font-size:12px;line-height:14px;color:#000">GX Simulator2</div>
<div class="t" style="left:771px;top:870px;font-size:12px;line-height:14px;color:#000">MELSEC</div>
<div class="abs" style="left:766px;top:868px;width:1px;height:17px;background:#d0d0d0"></div>
<div class="abs" style="left:896px;top:868px;width:1px;height:17px;background:#d0d0d0"></div>
<div class="abs" style="left:952px;top:868px;width:1px;height:17px;background:#d0d0d0"></div>
<div class="abs" style="left:1025px;top:868px;width:1px;height:17px;background:#d0d0d0"></div>
<div class="t lbl" style="right:1529px;top:114px"><span class="cj" style="width:5em">当前程序名</span></div>
<div class="t w" style="left:403px;top:113px">S2<span class="cj" style="width:4em">自动程序</span></div>
<div class="t lbl" style="right:1529px;top:134px"><span class="cj" style="width:5em">当前运行步</span></div>
<div class="t w" style="left:403px;top:134px">S2<span class="cj" style="width:1em">步</span>0<span class="cj" style="width:2em">注释</span></div>
<div class="t lbl" style="right:1529px;top:154px"><span class="cj" style="width:7em">当前步运行时间</span></div>
<div class="t w" style="left:450px;top:154px">0</div>
<div class="t w" style="left:851px;top:162px"><span class="cj" style="width:6em">单步最小时间</span></div>
<div class="t w" style="left:994px;top:162px">0</div>
<div class="t w" style="left:851px;top:182px"><span class="cj" style="width:6em">单步最大时间</span></div>
<div class="t w" style="left:994px;top:182px">0</div>
<div class="t lbl" style="left:611px;top:193px"><span class="cj" style="width:4em">条件设置</span></div>
<div class="t lbl" style="left:675px;top:193px"><span class="cj" style="width:4em">条件生效</span></div>
<div class="t lbl" style="left:755px;top:193px"><span class="cj" style="width:4em">动作设置</span></div>
<div class="cir" style="left:371px;top:213px"></div>
<div class="t w" style="left:403px;top:214px">S2<span class="cj" style="width:4em">条件注释</span>1</div>
<div class="lamp" style="left:611px;top:213px"></div>
<div class="lamp" style="left:675px;top:213px"></div>
<div class="lamp" style="left:755px;top:213px"></div>
<div class="cir g" style="left:819px;top:213px"></div>
<div class="t w" style="left:851px;top:214px">S2<span class="cj" style="width:4em">动作注释</span>1</div>
<div class="cir" style="left:371px;top:233px"></div>
<div class="t w" style="left:403px;top:234px">S2<span class="cj" style="width:4em">条件注释</span>2</div>
<div class="lamp" style="left:611px;top:233px"></div>
<div class="lamp" style="left:675px;top:233px"></div>
<div class="lamp" style="left:755px;top:233px"></div>
<div class="cir g" style="left:819px;top:233px"></div>
<div class="t w" style="left:851px;top:234px">S2<span class="cj" style="width:4em">动作注释</span>2</div>
<div class="cir" style="left:371px;top:253px"></div>
<div class="t w" style="left:403px;top:254px">S2<span class="cj" style="width:4em">条件注释</span>3</div>
<div class="lamp" style="left:611px;top:253px"></div>
<div class="lamp" style="left:675px;top:253px"></div>
<div class="lamp" style="left:755px;top:253px"></div>
<div class="cir g" style="left:819px;top:253px"></div>
<div class="t w" style="left:851px;top:254px">S2<span class="cj" style="width:4em">动作注释</span>3</div>
<div class="cir" style="left:371px;top:273px"></div>
<div class="t w" style="left:403px;top:274px">S2<span class="cj" style="width:4em">条件注释</span>4</div>
<div class="lamp" style="left:611px;top:273px"></div>
<div class="lamp" style="left:675px;top:273px"></div>
<div class="lamp" style="left:755px;top:273px"></div>
<div class="cir g" style="left:819px;top:273px"></div>
<div class="t w" style="left:851px;top:274px">S2<span class="cj" style="width:4em">动作注释</span>4</div>
<div class="cir" style="left:371px;top:293px"></div>
<div class="t w" style="left:403px;top:294px">S2<span class="cj" style="width:4em">条件注释</span>5</div>
<div class="lamp" style="left:611px;top:293px"></div>
<div class="lamp" style="left:675px;top:293px"></div>
<div class="lamp" style="left:755px;top:293px"></div>
<div class="cir g" style="left:819px;top:293px"></div>
<div class="t w" style="left:851px;top:294px">S2<span class="cj" style="width:4em">动作注释</span>5</div>
<div class="cir" style="left:371px;top:313px"></div>
<div class="t w" style="left:403px;top:314px">S2<span class="cj" style="width:4em">条件注释</span>6</div>
<div class="lamp" style="left:611px;top:313px"></div>
<div class="lamp" style="left:675px;top:313px"></div>
<div class="lamp" style="left:755px;top:313px"></div>
<div class="cir g" style="left:819px;top:313px"></div>
<div class="t w" style="left:851px;top:314px">S2<span class="cj" style="width:4em">动作注释</span>6</div>
<div class="cir" style="left:371px;top:333px"></div>
<div class="t w" style="left:403px;top:334px">S2<span class="cj" style="width:4em">条件注释</span>7</div>
<div class="lamp" style="left:611px;top:333px"></div>
<div class="lamp" style="left:675px;top:333px"></div>
<div class="lamp" style="left:755px;top:333px"></div>
<div class="cir g" style="left:819px;top:333px"></div>
<div class="t w" style="left:851px;top:334px">S2<span class="cj" style="width:4em">动作注释</span>7</div>
<div class="cir" style="left:371px;top:353px"></div>
<div class="t w" style="left:403px;top:354px">S2<span class="cj" style="width:4em">条件注释</span>8</div>
<div class="lamp" style="left:611px;top:353px"></div>
<div class="lamp" style="left:675px;top:353px"></div>
<div class="lamp" style="left:755px;top:353px"></div>
<div class="cir g" style="left:819px;top:353px"></div>
<div class="t w" style="left:851px;top:354px">S2<span class="cj" style="width:4em">动作注释</span>8</div>
<div class="cir" style="left:371px;top:373px"></div>
<div class="t w" style="left:403px;top:374px">S2<span class="cj" style="width:4em">条件注释</span>9</div>
<div class="lamp" style="left:611px;top:373px"></div>
<div class="lamp" style="left:675px;top:373px"></div>
<div class="lamp" style="left:755px;top:373px"></div>
<div class="cir g" style="left:819px;top:373px"></div>
<div class="t w" style="left:851px;top:374px">S2<span class="cj" style="width:4em">动作注释</span>9</div>
<div class="cir" style="left:371px;top:393px"></div>
<div class="t w" style="left:403px;top:394px">S2<span class="cj" style="width:4em">条件注释</span>10</div>
<div class="lamp" style="left:611px;top:393px"></div>
<div class="lamp" style="left:675px;top:393px"></div>
<div class="lamp" style="left:755px;top:393px"></div>
<div class="cir g" style="left:819px;top:393px"></div>
<div class="t w" style="left:851px;top:394px">S2<span class="cj" style="width:4em">动作注释</span>10</div>
<div class="cir" style="left:371px;top:413px"></div>
<div class="t w" style="left:403px;top:414px">S2<span class="cj" style="width:4em">条件注释</span>11</div>
<div class="lamp" style="left:611px;top:413px"></div>
<div class="lamp" style="left:675px;top:413px"></div>
<div class="lamp" style="left:755px;top:413px"></div>
<div class="cir g" style="left:819px;top:413px"></div>
<div class="t w" style="left:851px;top:414px">S2<span class="cj" style="width:4em">动作注释</span>11</div>
<div class="cir" style="left:371px;top:433px"></div>
<div class="t w" style="left:403px;top:434px">S2<span class="cj" style="width:4em">条件注释</span>12</div>
<div class="lamp" style="left:611px;top:433px"></div>
<div class="lamp" style="left:675px;top:433px"></div>
<div class="lamp" style="left:755px;top:433px"></div>
<div class="cir g" style="left:819px;top:433px"></div>
<div class="t w" style="left:851px;top:434px">S2<span class="cj" style="width:4em">动作注释</span>12</div>
<div class="cir" style="left:371px;top:453px"></div>
<div class="t w" style="left:403px;top:454px">S2<span class="cj" style="width:4em">条件注释</span>13</div>
<div class="lamp" style="left:611px;top:453px"></div>
<div class="lamp" style="left:675px;top:453px"></div>
<div class="lamp" style="left:755px;top:453px"></div>
<div class="cir g" style="left:819px;top:453px"></div>
<div class="t w" style="left:851px;top:454px">S2<span class="cj" style="width:4em">动作注释</span>13</div>
<div class="cir" style="left:371px;top:473px"></div>
<div class="t w" style="left:403px;top:474px">S2<span class="cj" style="width:4em">条件注释</span>14</div>
<div class="lamp" style="left:611px;top:473px"></div>
<div class="lamp" style="left:675px;top:473px"></div>
<div class="lamp" style="left:755px;top:473px"></div>
<div class="cir g" style="left:819px;top:473px"></div>
<div class="t w" style="left:851px;top:474px">S2<span class="cj" style="width:4em">动作注释</span>14</div>
<div class="cir" style="left:371px;top:493px"></div>
<div class="t w" style="left:403px;top:494px">S2<span class="cj" style="width:4em">条件注释</span>15</div>
<div class="lamp" style="left:611px;top:493px"></div>
<div class="lamp" style="left:675px;top:493px"></div>
<div class="lamp" style="left:755px;top:493px"></div>
<div class="cir g" style="left:819px;top:493px"></div>
<div class="t w" style="left:851px;top:494px">S2<span class="cj" style="width:4em">动作注释</span>15</div>
<div class="cir" style="left:371px;top:513px"></div>
<div class="t w" style="left:403px;top:514px">S2<span class="cj" style="width:4em">条件注释</span>16</div>
<div class="lamp" style="left:611px;top:513px"></div>
<div class="lamp" style="left:675px;top:513px"></div>
<div class="lamp" style="left:755px;top:513px"></div>
<div class="cir g" style="left:819px;top:513px"></div>
<div class="t w" style="left:851px;top:514px">S2<span class="cj" style="width:4em">动作注释</span>16</div>
<div class="cir" style="left:371px;top:533px"></div>
<div class="t w" style="left:403px;top:534px">S2<span class="cj" style="width:4em">条件注释</span>17</div>
<div class="lamp" style="left:611px;top:533px"></div>
<div class="lamp" style="left:675px;top:533px"></div>
<div class="lamp" style="left:755px;top:533px"></div>
<div class="cir g" style="left:819px;top:533px"></div>
<div class="t w" style="left:851px;top:534px">S2<span class="cj" style="width:4em">动作注释</span>17</div>
<div class="cir" style="left:371px;top:553px"></div>
<div class="t w" style="left:403px;top:554px">S2<span class="cj" style="width:4em">条件注释</span>18</div>
<div class="lamp" style="left:611px;top:553px"></div>
<div class="lamp" style="left:675px;top:553px"></div>
<div class="lamp" style="left:755px;top:553px"></div>
<div class="cir g" style="left:819px;top:553px"></div>
<div class="t w" style="left:851px;top:554px">S2<span class="cj" style="width:4em">动作注释</span>18</div>
<div class="cir" style="left:371px;top:573px"></div>
<div class="t w" style="left:403px;top:574px">S2<span class="cj" style="width:4em">条件注释</span>19</div>
<div class="lamp" style="left:611px;top:573px"></div>
<div class="lamp" style="left:675px;top:573px"></div>
<div class="lamp" style="left:755px;top:573px"></div>
<div class="cir g" style="left:819px;top:573px"></div>
<div class="t w" style="left:851px;top:574px">S2<span class="cj" style="width:4em">动作注释</span>19</div>
<div class="cir" style="left:371px;top:593px"></div>
<div class="t w" style="left:403px;top:594px">S2<span class="cj" style="width:4em">条件注释</span>20</div>
<div class="lamp" style="left:611px;top:593px"></div>
<div class="lamp" style="left:675px;top:593px"></div>
<div class="lamp" style="left:755px;top:593px"></div>
<div class="cir g" style="left:819px;top:593px"></div>
<div class="t w" style="left:851px;top:594px">S2<span class="cj" style="width:4em">动作注释</span>20</div>
<div class="cir" style="left:371px;top:613px"></div>
<div class="t w" style="left:403px;top:614px">S2<span class="cj" style="width:4em">条件注释</span>21</div>
<div class="lamp" style="left:611px;top:613px"></div>
<div class="lamp" style="left:675px;top:613px"></div>
<div class="lamp" style="left:755px;top:613px"></div>
<div class="cir g" style="left:819px;top:613px"></div>
<div class="t w" style="left:851px;top:614px">S2<span class="cj" style="width:4em">动作注释</span>21</div>
<div class="cir" style="left:371px;top:633px"></div>
<div class="t w" style="left:403px;top:634px">S2<span class="cj" style="width:4em">条件注释</span>22</div>
<div class="lamp" style="left:611px;top:633px"></div>
<div class="lamp" style="left:675px;top:633px"></div>
<div class="lamp" style="left:755px;top:633px"></div>
<div class="cir g" style="left:819px;top:633px"></div>
<div class="t w" style="left:851px;top:634px">S2<span class="cj" style="width:4em">动作注释</span>22</div>
<div class="cir" style="left:371px;top:653px"></div>
<div class="t w" style="left:403px;top:654px">S2<span class="cj" style="width:4em">条件注释</span>23</div>
<div class="lamp" style="left:611px;top:653px"></div>
<div class="lamp" style="left:675px;top:653px"></div>
<div class="lamp" style="left:755px;top:653px"></div>
<div class="cir g" style="left:819px;top:653px"></div>
<div class="t w" style="left:851px;top:654px">S2<span class="cj" style="width:4em">动作注释</span>23</div>
<div class="cir" style="left:371px;top:673px"></div>
<div class="t w" style="left:403px;top:674px">S2<span class="cj" style="width:4em">条件注释</span>24</div>
<div class="lamp" style="left:611px;top:673px"></div>
<div class="lamp" style="left:675px;top:673px"></div>
<div class="lamp" style="left:755px;top:673px"></div>
<div class="cir g" style="left:819px;top:673px"></div>
<div class="t w" style="left:851px;top:674px">S2<span class="cj" style="width:4em">动作注释</span>24</div>
<div class="cir" style="left:371px;top:693px"></div>
<div class="t w" style="left:403px;top:694px">S2<span class="cj" style="width:4em">条件注释</span>25</div>
<div class="lamp" style="left:611px;top:693px"></div>
<div class="lamp" style="left:675px;top:693px"></div>
<div class="lamp" style="left:755px;top:693px"></div>
<div class="cir g" style="left:819px;top:693px"></div>
<div class="t w" style="left:851px;top:694px">S2<span class="cj" style="width:4em">动作注释</span>25</div>
<div class="cir" style="left:371px;top:713px"></div>
<div class="t w" style="left:403px;top:714px">S2<span class="cj" style="width:4em">条件注释</span>26</div>
<div class="lamp" style="left:611px;top:713px"></div>
<div class="lamp" style="left:675px;top:713px"></div>
<div class="lamp" style="left:755px;top:713px"></div>
<div class="cir g" style="left:819px;top:713px"></div>
<div class="t w" style="left:851px;top:714px">S2<span class="cj" style="width:4em">动作注释</span>26</div>
<div class="cir" style="left:371px;top:733px"></div>
<div class="t w" style="left:403px;top:734px">S2<span class="cj" style="width:4em">条件注释</span>27</div>
<div class="lamp" style="left:611px;top:733px"></div>
<div class="lamp" style="left:675px;top:733px"></div>
<div class="lamp" style="left:755px;top:733px"></div>
<div class="cir g" style="left:819px;top:733px"></div>
<div class="t w" style="left:851px;top:734px">S2<span class="cj" style="width:4em">动作注释</span>27</div>
<div class="cir" style="left:371px;top:753px"></div>
<div class="t w" style="left:403px;top:754px">S2<span class="cj" style="width:4em">条件注释</span>28</div>
<div class="lamp" style="left:611px;top:753px"></div>
<div class="lamp" style="left:675px;top:753px"></div>
<div class="lamp" style="left:755px;top:753px"></div>
<div class="cir g" style="left:819px;top:753px"></div>
<div class="t w" style="left:851px;top:754px">S2<span class="cj" style="width:4em">动作注释</span>28</div>
<div class="cir" style="left:371px;top:773px"></div>
<div class="t w" style="left:403px;top:774px">S2<span class="cj" style="width:4em">条件注释</span>29</div>
<div class="lamp" style="left:611px;top:773px"></div>
<div class="lamp" style="left:675px;top:773px"></div>
<div class="lamp" style="left:755px;top:773px"></div>
<div class="cir g" style="left:819px;top:773px"></div>
<div class="t w" style="left:851px;top:774px">S2<span class="cj" style="width:4em">动作注释</span>29</div>
<div class="cir" style="left:371px;top:793px"></div>
<div class="t w" style="left:403px;top:794px">S2<span class="cj" style="width:4em">条件注释</span>30</div>
<div class="lamp" style="left:611px;top:793px"></div>
<div class="lamp" style="left:675px;top:793px"></div>
<div class="lamp" style="left:755px;top:793px"></div>
<div class="cir g" style="left:819px;top:793px"></div>
<div class="t w" style="left:851px;top:794px">S2<span class="cj" style="width:4em">动作注释</span>30</div>
<div class="cir" style="left:371px;top:813px"></div>
<div class="t w" style="left:403px;top:814px">S2<span class="cj" style="width:4em">条件注释</span>31</div>
<div class="lamp" style="left:611px;top:813px"></div>
<div class="lamp" style="left:675px;top:813px"></div>
<div class="lamp" style="left:755px;top:813px"></div>
<div class="cir g" style="left:819px;top:813px"></div>
<div class="t w" style="left:851px;top:814px">S2<span class="cj" style="width:4em">动作注释</span>31</div>
<div class="cir" style="left:371px;top:833px"></div>
<div class="t w" style="left:403px;top:834px">S2<span class="cj" style="width:4em">条件注释</span>32</div>
<div class="lamp" style="left:611px;top:833px"></div>
<div class="lamp" style="left:675px;top:833px"></div>
<div class="lamp" style="left:755px;top:833px"></div>
<div class="cir g" style="left:819px;top:833px"></div>
<div class="t w" style="left:851px;top:834px">S2<span class="cj" style="width:4em">动作注释</span>32</div>
<div class="sb" style="top:226px"><i><span class="cj" style="width:2em">工位</span>1</i></div>
<div class="sb on" style="top:278px"><i><span class="cj" style="width:2em">工位</span>2</i></div>
<div class="sb" style="top:330px"><i><span class="cj" style="width:2em">工位</span>3</i></div>
<div class="sb" style="top:382px"><i><span class="cj" style="width:2em">工位</span>4</i></div>
<div class="sb" style="top:434px"><i><span class="cj" style="width:2em">工位</span>5</i></div>
<div class="mb" style="left:259px;top:225px"><span class="cj" style="width:4em">自动模式</span></div>
<div class="mb" style="left:259px;top:245px"><span class="cj" style="width:4em">单步模式</span></div>
<div class="mb" style="left:259px;top:265px"><span class="cj" style="width:4em">单步转移</span></div>
<div class="mb on" style="left:259px;top:285px"><span class="cj" style="width:4em">编辑模式</span></div>
<div class="mb" style="left:259px;top:305px"><span class="cj" style="width:6em">监控超时选择</span></div>
<div class="mb" style="left:259px;top:325px"><span class="cj" style="width:4em">转移条件</span>OK</div>
<div class="mb" style="left:259px;top:345px"><span class="cj" style="width:2em">异常</span></div>
<div class="mb" style="left:259px;top:365px"><span class="cj" style="width:4em">异常复位</span></div>
<div class="mb" style="left:259px;top:385px"><span class="cj" style="width:3em">初始化</span></div>
<div class="mb" style="left:259px;top:481px"><span class="cj" style="width:2em">首步</span></div>
<div class="mb" style="left:259px;top:501px"><span class="cj" style="width:2em">末步</span></div>
<div class="mb" style="left:259px;top:521px"><span class="cj" style="width:3em">上一步</span></div>
<div class="mb" style="left:259px;top:541px"><span class="cj" style="width:3em">下一步</span></div>
<div class="mb" style="left:259px;top:561px"><span class="cj" style="width:2em">剪切</span></div>
<div class="mb" style="left:259px;top:581px"><span class="cj" style="width:2em">复制</span></div>
<div class="mb" style="left:259px;top:601px"><span class="cj" style="width:2em">粘粘</span></div>
<div class="mb" style="left:259px;top:621px"><span class="cj" style="width:2em">插入</span></div>
<div class="mb" style="left:259px;top:641px"><span class="cj" style="width:2em">删除</span></div>
<div class="mb" style="left:259px;top:661px"><span class="cj" style="width:2em">新增</span></div>
<div class="abs" style="left:1048px;top:16px;width:252px;height:205px;background:#f0f0f0;border:1px solid #aaa;box-shadow:0 0 12px rgba(0,0,0,.3)"></div>
<div class="abs" style="left:1049px;top:17px;width:250px;height:42px;background:#fff"></div>
<div class="abs" style="left:1052px;top:21px;width:16px;height:14px;background:#1010e0;border:1px solid #333;border-right-width:2px;border-bottom-width:2px"></div>
<div class="abs" style="left:1055px;top:24px;width:10px;height:7px;background:repeating-linear-gradient(90deg,#999 0 1px,#ddd 1px 2px)"></div><div class="abs" style="left:1055px;top:24px;width:2px;height:7px;background:#e00"></div>
<div class="t" style="left:1073px;top:19px;font-size:13px;line-height:16px;color:#999">GX Simulator2</div>
<div class="abs" style="left:1181px;top:28px;width:10px;height:1px;background:#999"></div>
<div class="abs" style="left:1226px;top:23px;width:10px;height:10px;border:1px solid #ccc"></div>
<svg class="abs" style="left:1271px;top:22px" width="12" height="12"><path d="M0.5 0.5L11.5 11.5M11.5 0.5L0.5 11.5" stroke="#ccc" stroke-width="1.1"/></svg>
<div class="t" style="left:1056px;top:43px;font-size:12px;line-height:14px;color:#000"><span class="cj" style="width:2em">工具</span>(T)</div>
<div class="t" style="left:1109px;top:43px;font-size:12px;line-height:14px;color:#000"><span class="cj" style="width:2em">选项</span>(O)</div>
<div class="abs" style="left:1064px;top:78px;width:209px;height:32px;border:1px solid #bbb"></div>
<div class="t" style="left:1072px;top:72px;font-size:12px;line-height:13px;color:#000;background:#f0f0f0;padding:0 2px"><span class="cj" style="width:2em">开关</span></div>
<div class="abs" style="left:1064px;top:121px;width:209px;height:91px;border:1px solid #bbb"></div>
<div class="t" style="left:1071px;top:116px;font-size:12px;line-height:12px;color:#000;background:#f0f0f0;padding:0 1px">LED</div>
<div class="abs" style="left:1080px;top:90px;width:11px;height:11px;border-radius:50%;border:1px solid #888;border-right-color:#fff;border-bottom-color:#fff;background:#fff"></div>
<div class="t" style="left:1096px;top:90px;font-size:11px;line-height:13px;color:#999">RESET</div>
<div class="abs" style="left:1146px;top:90px;width:11px;height:11px;border-radius:50%;border:1px solid #888;border-right-color:#fff;border-bottom-color:#fff;background:#fff"></div>
<div class="t" style="left:1162px;top:90px;font-size:11px;line-height:13px;color:#000">STOP</div>
<div class="abs" style="left:1212px;top:90px;width:11px;height:11px;border-radius:50%;border:1px solid #888;border-right-color:#fff;border-bottom-color:#fff;background:#fff"></div>
<div class="abs" style="left:1215px;top:93px;width:5px;height:5px;border-radius:50%;background:#000"></div>
<div class="t" style="left:1228px;top:90px;font-size:11px;line-height:13px;color:#000">RUN</div>
<div class="abs" style="left:1112px;top:129px;width:114px;height:77px;background:#808080"></div>
<div class="t" style="right:758px;top:132.0px;font-size:13px;line-height:14px;color:#fff">MODE</div>
<div class="abs" style="left:1181px;top:134.0px;width:25px;height:10px;background:#00ff00"></div>
<div class="t" style="right:758px;top:150.5px;font-size:13px;line-height:14px;color:#fff">RUN</div>
<div class="abs" style="left:1181px;top:152.5px;width:25px;height:10px;background:#00ff00"></div>
<div class="t" style="right:758px;top:169.0px;font-size:13px;line-height:14px;color:#fff">ERR.</div>
<div class="abs" style="left:1181px;top:171.0px;width:25px;height:10px;background:#c0c0c0"></div>
<div class="t" style="right:758px;top:187.5px;font-size:13px;line-height:14px;color:#fff">USER</div>
<div class="abs" style="left:1181px;top:189.5px;width:25px;height:10px;background:#c0c0c0"></div>
</div></div>
</div>
<div class="abs" style="left:0;top:1018px;width:1920px;height:22px;background:#f1f1f1;border-top:1px solid #d4d4d4"></div>
<div class="abs" style="left:0;top:1040px;width:1920px;height:40px;background:#101a24"></div>
<div class="abs" style="left:48px;top:1040px;width:344px;height:40px;background:#f0f0f0"></div>
<svg class="abs" style="left:1400px;top:0" width="520" height="66"><g fill="#264c88"><path d="M40 50C36 40 38 28 45 20C50 8 62 2 78 4C92 5 104 12 106 22C108 30 102 35 92 35H60C50 36 45 42 44 50Z"/><path d="M126 50C120 44 124 32 130 26C134 14 146 10 160 12C168 4 182 2 196 6C210 10 216 24 214 34C214 44 206 50 196 50Z"/><path d="M232 0H394C398 10 398 24 392 34C380 42 360 44 340 44H250C240 44 234 40 232 30Z"/><path d="M330 0H400C420 0 440 4 452 12C458 20 452 28 440 30H380Z"/><circle cx="465" cy="32" r="10"/></g></svg>
<div class="t" style="left:893px;top:7px;font-size:12px;line-height:14px;color:#e0e8f4"><span class="cj" style="width:4em">说明文档</span>.docx - Word</div>
<div class="abs" style="left:22px;top:9px;width:14px;height:3px;background:#dde6f3"></div><div class="abs" style="left:54px;top:9px;width:4px;height:3px;background:#dde6f3"></div><div class="abs" style="left:90px;top:9px;width:10px;height:3px;background:#dde6f3"></div>
<div class="t" style="left:1690px;top:7px;font-size:13px;line-height:16px;color:#c8d4e8"><span class="cj" style="width:3em">张文举</span></div>
<div class="abs" style="left:1752px;top:10px;width:13px;height:10px;border:1px solid #9fb2d4"></div>
<div class="abs" style="left:1752px;top:13px;width:13px;height:1px;background:#9fb2d4"></div>
<div class="abs" style="left:1799px;top:15px;width:11px;height:1px;background:#7f96c0"></div>
<div class="abs" style="left:1846px;top:12px;width:8px;height:8px;border:1px solid #9fb2d4"></div><div class="abs" style="left:1848px;top:10px;width:8px;height:8px;border-top:1px solid #9fb2d4;border-right:1px solid #9fb2d4"></div>
<svg class="abs" style="left:1891px;top:9px" width="12" height="12"><path d="M0.5 0.5L11.5 11.5M11.5 0.5L0.5 11.5" stroke="#9fb2d4" stroke-width="1.1"/></svg>
<div class="abs" style="left:1842px;top:35px;width:63px;height:31px;background:#1f4a85"></div>
<svg class="abs" style="left:1848px;top:41px" width="16" height="18"><circle cx="7" cy="5" r="4" fill="none" stroke="#fff" stroke-width="1.3"/><path d="M1 16 Q2 9 7 9 Q10 9 11 11" fill="none" stroke="#fff" stroke-width="1.3"/><path d="M9 14h6M12 11v6" stroke="#fff" stroke-width="1.3"/></svg>
<div class="t" style="left:1866px;top:42px;font-size:13px;line-height:16px;color:#fff"><span class="cj" style="width:2em">共享</span></div>
<div class="abs" style="left:1290px;top:73px;width:490px;height:59px;background:#fff;border:1px solid #c6c6c6"></div>
<div class="abs" style="left:1779px;top:73px;width:14px;height:59px;background:#fff;border:1px solid #c6c6c6"></div>
<div class="abs" style="left:1780px;top:92px;width:12px;height:1px;background:#c6c6c6"></div>
<div class="abs" style="left:1780px;top:112px;width:12px;height:1px;background:#c6c6c6"></div>
<div class="abs" style="left:1782px;top:103px;width:0;height:0;border-left:4px solid transparent;border-right:4px solid transparent;border-top:4px solid #555"></div>
<div class="abs" style="left:1782px;top:120px;width:8px;height:1px;background:#555"></div>
<div class="abs" style="left:1782px;top:123px;width:0;height:0;border-left:4px solid transparent;border-right:4px solid transparent;border-top:4px solid #555"></div>
<div class="t" style="left:1273px;width:72px;overflow:hidden;text-align:center;top:86px;font-size:13px;line-height:16px;color:#2e62b0;font-style:italic;font-weight:normal;letter-spacing:-0.3px">AaBbCcD.</div>
<div class="t" style="left:1269px;width:80px;text-align:center;top:110px;font-size:12px;line-height:14px;color:#444"><span class="cj" style="width:3em">显强调</span></div>
<div class="t" style="left:1345px;width:72px;overflow:hidden;text-align:center;top:86px;font-size:13px;line-height:16px;color:#000;font-style:normal;font-weight:bold;letter-spacing:-0.3px">AaBbCcD</div>
<div class="t" style="left:1341px;width:80px;text-align:center;top:110px;font-size:12px;line-height:14px;color:#444"><span class="cj" style="width:2em">要点</span></div>
<div class="t" style="left:1417px;width:72px;overflow:hidden;text-align:center;top:86px;font-size:13px;line-height:16px;color:#555;font-style:italic;font-weight:normal;letter-spacing:-0.3px">AaBbCcD.</div>
<div class="t" style="left:1413px;width:80px;text-align:center;top:110px;font-size:12px;line-height:14px;color:#444"><span class="cj" style="width:2em">引用</span></div>
<div class="t" style="left:1489px;width:72px;overflow:hidden;text-align:center;top:86px;font-size:13px;line-height:16px;color:#4472c4;font-style:italic;font-weight:normal;text-decoration:underline;letter-spacing:-0.3px">AaBbCcD.</div>
<div class="t" style="left:1485px;width:80px;text-align:center;top:110px;font-size:12px;line-height:14px;color:#444"><span class="cj" style="width:4em">明显引用</span></div>
<div class="t" style="left:1561px;width:72px;overflow:hidden;text-align:center;top:86px;font-size:13px;line-height:16px;color:#666;font-style:normal;font-weight:normal;font-variant:small-caps;letter-spacing:-0.3px">AaBbCcDı</div>
<div class="t" style="left:1557px;width:80px;text-align:center;top:110px;font-size:12px;line-height:14px;color:#444"><span class="cj" style="width:5em">不明显参考</span></div>
<div class="t" style="left:1633px;width:72px;overflow:hidden;text-align:center;top:86px;font-size:13px;line-height:16px;color:#2e62b0;font-style:normal;font-weight:normal;font-variant:small-caps;letter-spacing:-0.3px">AaBbCcDı</div>
<div class="t" style="left:1629px;width:80px;text-align:center;top:110px;font-size:12px;line-height:14px;color:#444"><span class="cj" style="width:4em">明显参考</span></div>
<div class="t" style="left:1705px;width:72px;overflow:hidden;text-align:center;top:86px;font-size:13px;line-height:16px;color:#000;font-style:italic;font-weight:bold;letter-spacing:-0.3px">AaBbCcD</div>
<div class="t" style="left:1701px;width:80px;text-align:center;top:110px;font-size:12px;line-height:14px;color:#444"><span class="cj" style="width:4em">书籍标题</span></div>
<div class="abs" style="left:1800px;top:72px;width:1px;height:86px;background:#dadada"></div>
<div class="abs" style="left:1875px;top:72px;width:1px;height:86px;background:#dadada"></div>
<svg class="abs" style="left:1810px;top:74px" width="14" height="14"><circle cx="8.5" cy="5.5" r="4" fill="none" stroke="#2e62b0" stroke-width="1.6"/><path d="M5.5 8.5L1 13" stroke="#2e62b0" stroke-width="2"/></svg>
<div class="t" style="left:1827px;top:74px;font-size:12px;line-height:14px;color:#222"><span class="cj" style="width:2em">查找</span></div>
<div class="abs" style="left:1860px;top:79px;width:0;height:0;border-left:3px solid transparent;border-right:3px solid transparent;border-top:3px solid #444"></div>
<div class="t" style="left:1808px;top:95px;font-size:10px;line-height:9px;color:#2e62b0">ab<br>ac</div>
<div class="t" style="left:1827px;top:97px;font-size:12px;line-height:14px;color:#222"><span class="cj" style="width:2em">替换</span></div>
<svg class="abs" style="left:1811px;top:118px" width="12" height="16"><path d="M1 1L1 13L4 10L7 15L9 14L6 9L10 9Z" fill="#fff" stroke="#444" stroke-width="1"/></svg>
<div class="t" style="left:1827px;top:120px;font-size:12px;line-height:14px;color:#222"><span class="cj" style="width:2em">选择</span></div>
<div class="abs" style="left:1855px;top:126px;width:0;height:0;border-left:3px solid transparent;border-right:3px solid transparent;border-top:3px solid #444"></div>
<div class="t" style="left:1827px;top:143px;font-size:12px;line-height:14px;color:#666"><span class="cj" style="width:2em">编辑</span></div>
<svg class="abs" style="left:1899px;top:148px" width="12" height="8"><path d="M1 6L6 1L11 6" fill="none" stroke="#555" stroke-width="1.3"/></svg>
<div class="abs" style="left:1788px;top:149px;width:8px;height:8px;border-right:1px solid #888;border-bottom:1px solid #888"></div>
<div class="abs" style="left:13px;top:78px;width:4px;height:24px;background:#e9c98a"></div>
<div class="abs" style="left:0px;top:162px;width:17px;height:856px;background:#e6e6e6"></div>
<div class="abs" style="left:337px;top:886px;width:1px;height:132px;background:#c8c8c8"></div>
<div class="t" style="left:8px;top:1021px;font-size:12px;line-height:14px;color:#444"><span class="cj" style="width:1em">第</span> 1 <span class="cj" style="width:3em">页，共</span> 2 <span class="cj" style="width:1em">页</span></div>
<div class="t" style="left:117px;top:1021px;font-size:12px;line-height:14px;color:#444">16 <span class="cj" style="width:2em">个字</span></div>
<div class="abs" style="left:178px;top:1022px;width:8px;height:12px;border:1px solid #555"></div>
<div class="t" style="left:210px;top:1021px;font-size:12px;line-height:14px;color:#444"><span class="cj" style="width:2em">中文</span>(<span class="cj" style="width:2em">中国</span>)</div>
<div class="abs" style="left:1667px;top:1018px;width:38px;height:22px;background:#d6d6d6"></div>
<div class="abs" style="left:1641px;top:1023px;width:13px;height:11px;border:1px solid #555;background:repeating-linear-gradient(transparent 0 2px,#777 2px 3px)"></div>
<div class="abs" style="left:1679px;top:1023px;width:13px;height:11px;border:1px solid #555;background:repeating-linear-gradient(transparent 0 2px,#777 2px 3px)"></div>
<div class="abs" style="left:1717px;top:1023px;width:13px;height:11px;border:1px solid #555;background:repeating-linear-gradient(transparent 0 2px,#777 2px 3px)"></div>
<div class="abs" style="left:1747px;top:1028px;width:6px;height:1px;background:#444"></div>
<div class="abs" style="left:1758px;top:1028px;width:100px;height:1px;background:#999"></div>
<div class="abs" style="left:1806px;top:1022px;width:4px;height:12px;background:#444"></div>
<div class="abs" style="left:1861px;top:1028px;width:7px;height:1px;background:#444"></div>
<div class="abs" style="left:1864px;top:1025px;width:1px;height:7px;background:#444"></div>
<div class="t" style="left:1880px;top:1021px;font-size:12px;line-height:14px;color:#444">100%</div>
<svg class="abs" style="left:15px;top:1052px" width="17" height="17"><path d="M0 2.3L7 1.3V8H0Z M8 1.1L17 0V8H8Z M0 9H7V15.7L0 14.7Z M8 9H17V17L8 15.9Z" fill="#fff"/></svg>
<div class="abs" style="left:58px;top:1050px;width:20px;height:20px;border-radius:50%;border:2.5px solid #111"></div>
<div class="t" style="left:88px;top:1052px;font-size:14px;line-height:16px;color:#333"><span class="cj" style="width:12em">在这里输入你要搜索的内容</span></div>
<div class="abs" style="left:367px;top:1052px;width:7px;height:11px;border:1.5px solid #333;border-radius:4px"></div>
<div class="abs" style="left:365px;top:1058px;width:11px;height:7px;border:1.5px solid #333;border-top:none;border-radius:0 0 6px 6px"></div>
<div class="abs" style="left:370px;top:1065px;width:1.5px;height:4px;background:#333"></div>
<div class="abs" style="left:408px;top:1052px;width:15px;height:16px;border:1.5px solid #fff;border-radius:1px"></div>
<div class="abs" style="left:405px;top:1054px;width:3px;height:12px;border:1.5px solid #fff;border-right:none"></div>
<div class="abs" style="left:423px;top:1054px;width:3px;height:12px;border:1.5px solid #fff;border-left:none"></div>
<svg class="abs" style="left:456px;top:1049px" width="22" height="22" viewBox="0 0 22 22"><path d="M21 12.5H7.2C7.6 16 10 17.8 13.3 17.8c2.6 0 5-0.9 7.2-2.3v4.6C18.3 21.4 15.8 22 12.8 22 6 22 2 17.8 2 11.5 2 5.2 6.2 0 13 0c5.3 0 8.5 3.600 8.5 9.5zM15.5 9C15.4 6.300 14 4.500 11.500 4.500 9.200 4.500 7.600 6.300 7.300 9z" fill="#1e78d8"/></svg>
<div class="abs" style="left:505px;top:1052px;width:20px;height:18px;background:#fff;border-radius:1px"></div>
<div class="abs" style="left:510px;top:1048px;width:10px;height:8px;border:1.5px solid #fff;border-bottom:none;border-radius:4px 4px 0 0"></div>
<div class="abs" style="left:510px;top:1056px;width:4px;height:4px;background:#f25022"></div><div class="abs" style="left:515px;top:1056px;width:4px;height:4px;background:#7fba00"></div><div class="abs" style="left:510px;top:1061px;width:4px;height:4px;background:#00a4ef"></div><div class="abs" style="left:515px;top:1061px;width:4px;height:4px;background:#ffb900"></div>
<div class="abs" style="left:554px;top:1049px;width:22px;height:22px;border-radius:50%;background:#2a8ae0;border:2px solid #fff"></div>
<div class="abs" style="left:563px;top:1053px;width:3px;height:13px;background:#fff;transform:rotate(45deg)"></div>
<svg class="abs" style="left:602px;top:1049px" width="24" height="22" viewBox="0 0 24 22"><ellipse cx="12" cy="11" rx="11.5" ry="11" fill="#f2cc1a"/><circle cx="9.5" cy="15.5" r="4" fill="#2fb34a"/><path d="M12 15V3.5c2 2 5 2.500 5.500 5.500" stroke="#2fb34a" stroke-width="2.2" fill="none"/></svg>
<svg class="abs" style="left:651px;top:1049px" width="24" height="20"><path d="M0 8L12 0L24 8V20H0Z" fill="#fff"/><path d="M0 8L12 16L24 8" fill="none" stroke="#101a24" stroke-width="1.3"/><path d="M8 12L17 10L11 17Z" fill="#101a24"/></svg>
<svg class="abs" style="left:700px;top:1050px" width="22" height="20"><path d="M0 1h8l2 2h12v17H0z" fill="#f0c040"/><path d="M0 5h22v15H0z" fill="#fbe08a"/><path d="M4 13h14v3h-2v3h-3v-3H9v3H6v-3H4z" fill="#2a8ad8"/></svg>
<div class="abs" style="left:750px;top:1050px;width:21px;height:21px;border-radius:50%;background:conic-gradient(from -30deg,#db4437 0 120deg,#f4c20d 120deg 240deg,#0f9d58 240deg 360deg)"></div>
<div class="abs" style="left:755px;top:1055px;width:11px;height:11px;border-radius:50%;background:#4285f4;border:2px solid #fff"></div>
<div class="abs" style="left:790px;top:1078px;width:152px;height:2px;background:#a9cdf0"></div>
<svg class="abs" style="left:796px;top:1048px" width="24" height="24" viewBox="0 0 16 16"><rect x="0" y="0" width="16" height="16" rx="1" fill="#0a7a2a"/><path d="M0 11h10v5H0z" fill="#0a6020"/><path d="M5 11h5l-1 5H4z" fill="#88c098"/><path d="M2 2h9v7H8.5l0.5 1.5H3.5L4.5 9H2z" fill="#fff"/><rect x="2.5" y="10.3" width="7" height="1.3" fill="#fff"/><rect x="3.5" y="3.2" width="6" height="4.3" fill="#0a7a2a"/><rect x="4.3" y="4" width="4.4" height="2.7" fill="#fff"/><path d="M10.8 9.2H14.4V14.4H10.8M11.8 11.8H14.4" stroke="#fff" stroke-width="1.3" fill="none"/><rect x="12" y="7" width="3" height="1.2" fill="#fff"/><path d="M12.5 5l1-3 1 3" stroke="#fff" stroke-width="0.8" fill="none"/></svg>
<div class="t" style="left:825px;top:1051px;font-size:12.6px;line-height:17px;color:#fff">MELSOFT GT Des...</div>
<div class="abs" style="left:951px;top:1078px;width:152px;height:2px;background:#a9cdf0"></div>
<div class="abs" style="left:959px;top:1048px;width:24px;height:24px;background:#1010e0;border:2px solid #aaa"></div>
<div class="abs" style="left:964px;top:1054px;width:13px;height:9px;background:repeating-linear-gradient(90deg,#999 0 1px,#ddd 1px 3px)"></div><div class="abs" style="left:964px;top:1054px;width:3px;height:9px;background:#e00"></div>
<div class="t" style="left:986px;top:1051px;font-size:12.6px;line-height:17px;color:#fff">GX Simulator2</div>
<div class="abs" style="left:1112px;top:1078px;width:152px;height:2px;background:#a9cdf0"></div>
<div class="abs" style="left:1119px;top:1048px;width:24px;height:24px;background:linear-gradient(135deg,#ff3030,#c00000);border-radius:2px"></div>
<div class="t" style="left:1122px;top:1051px;font-size:16px;line-height:18px;color:#fff;font-weight:bold">TF</div>
<div class="t" style="left:1147px;top:1051px;font-size:12.6px;line-height:17px;color:#fff">MELSOFT<span class="cj" style="width:2em">系列</span> GX...</div>
<div class="abs" style="left:1269px;top:1040px;width:160px;height:40px;background:#2e3a46"></div>
<div class="abs" style="left:1269px;top:1078px;width:160px;height:2px;background:#a9cdf0"></div>
<svg class="abs" style="left:1275px;top:1048px" width="24" height="24" viewBox="0 0 16 16"><rect x="0" y="0" width="16" height="16" rx="1" fill="#0a7a2a"/><path d="M0 11h10v5H0z" fill="#0a6020"/><path d="M5 11h5l-1 5H4z" fill="#88c098"/><path d="M2 2h9v7H8.5l0.5 1.5H3.5L4.5 9H2z" fill="#fff"/><rect x="2.5" y="10.3" width="7" height="1.3" fill="#fff"/><rect x="3.5" y="3.2" width="6" height="4.3" fill="#0a7a2a"/><rect x="4.3" y="4" width="4.4" height="2.7" fill="#fff"/><path d="M10.8 9.2H14.4V14.4H10.8M11.8 11.8H14.4" stroke="#fff" stroke-width="1.3" fill="none"/><rect x="12" y="7" width="3" height="1.2" fill="#fff"/><path d="M12.5 5l1-3 1 3" stroke="#fff" stroke-width="0.8" fill="none"/></svg>
<div class="t" style="left:1304px;top:1051px;font-size:12.6px;line-height:17px;color:#fff">GT Simulator3 (G...</div>
<div class="abs" style="left:1434px;top:1078px;width:152px;height:2px;background:#a9cdf0"></div>
<div class="abs" style="left:1445px;top:1049px;width:20px;height:22px;background:#fff;border:1px solid #2b579a"></div>
<div class="abs" style="left:1440px;top:1051px;width:14px;height:18px;background:#2b579a"></div>
<div class="t" style="left:1442px;top:1053px;font-size:11px;line-height:14px;color:#fff;font-weight:bold">W</div>
<div class="t" style="left:1469px;top:1051px;font-size:12.6px;line-height:17px;color:#fff"><span class="cj" style="width:4em">说明文档</span>.docx - ...</div>
<svg class="abs" style="left:1644px;top:1054px" width="14" height="9"><path d="M1 8L7 2L13 8" fill="none" stroke="#fff" stroke-width="1.4"/></svg>
<div class="abs" style="left:1669px;top:1055px;width:15px;height:10px;border:1.5px solid #fff"></div><div class="abs" style="left:1671px;top:1057px;width:9px;height:6px;background:#fff"></div>
<svg class="abs" style="left:1693px;top:1048px" width="20" height="20"><path d="M6 18A12 12 0 0 1 18 6M9 18A9 9 0 0 1 18 9M12 18A6 6 0 0 1 18 12" fill="none" stroke="#777" stroke-width="1.2"/><text x="0" y="8" font-size="9" fill="#fff">*</text></svg>
<svg class="abs" style="left:1714px;top:1052px" width="18" height="16"><path d="M1 5H4L8 1V15L4 11H1Z" fill="none" stroke="#fff" stroke-width="1.2"/><path d="M11 5L16 11M16 5L11 11" stroke="#fff" stroke-width="1.2"/></svg>
<div class="t" style="left:1740px;top:1050px;font-size:15px;line-height:18px;color:#fff"><span class="cj" style="width:1em">中</span></div>
<div class="abs" style="left:1768px;top:1052px;width:15px;height:16px;border:1.5px solid #fff"></div><div class="t" style="left:1769px;top:1052px;font-size:12px;line-height:15px;color:#fff"><span class="cj" style="width:1em">五</span></div>
<div class="t" style="left:1814px;top:1042px;font-size:13px;line-height:16px;color:#fff">21:46</div>
<div class="t" style="left:1801px;top:1061px;font-size:13px;line-height:16px;color:#fff">2018-1-31</div>
<svg class="abs" style="left:1878px;top:1050px" width="20" height="19"><path d="M1 1H19V13H10L6 17V13H1Z" fill="none" stroke="#fff" stroke-width="1.3"/></svg>
<div class="abs" style="left:1911px;top:1040px;width:1px;height:40px;background:#5a6470"></div>
<div class="abs" style="left:16px;top:11px;width:1030px;height:876px;background:#f0f0f0;border:1px solid #2a8cf4;box-shadow:0 2px 14px rgba(0,0,0,.3)"></div>
<div class="abs" style="left:17px;top:12px;width:1028px;height:30px;background:#fff"></div>
<div class="abs" style="left:17px;top:42px;width:1028px;height:53px;background:linear-gradient(90deg,#a9c6f0,#c4d8f6)"></div>
<div class="abs" style="left:17px;top:95px;width:1028px;height:773px;background:#000;border-left:2px solid #a0a0a0;border-top:2px solid #a0a0a0;border-right:2px solid #fff;border-bottom:2px solid #fff"></div>
<div class="abs" style="left:17px;top:867px;width:1028px;height:1px;background:#d8d8d8"></div>
<div class="abs" style="left:1041px;top:876px;width:2px;height:2px;background:#a8a8a8"></div>
<div class="abs" style="left:1038px;top:879px;width:2px;height:2px;background:#a8a8a8"></div>
<div class="abs" style="left:1041px;top:879px;width:2px;height:2px;background:#a8a8a8"></div>
<div class="abs" style="left:1035px;top:882px;width:2px;height:2px;background:#a8a8a8"></div>
<div class="abs" style="left:1038px;top:882px;width:2px;height:2px;background:#a8a8a8"></div>
<div class="abs" style="left:1041px;top:882px;width:2px;height:2px;background:#a8a8a8"></div>
<div class="t" style="left:46px;top:18px;font-size:12.5px;line-height:16px;color:#000">GT Simulator3 (GT27) &nbsp;[<span class="cj" style="width:7em">工程标题未设置</span> ]</div>
<svg class="abs" style="left:25px;top:18px" width="16" height="16" viewBox="0 0 16 16"><rect x="0" y="0" width="16" height="16" rx="1" fill="#0a7a2a"/><path d="M0 11h10v5H0z" fill="#0a6020"/><path d="M5 11h5l-1 5H4z" fill="#88c098"/><path d="M2 2h9v7H8.5l0.5 1.5H3.5L4.5 9H2z" fill="#fff"/><rect x="2.5" y="10.3" width="7" height="1.3" fill="#fff"/><rect x="3.5" y="3.2" width="6" height="4.3" fill="#0a7a2a"/><rect x="4.3" y="4" width="4.4" height="2.7" fill="#fff"/><path d="M10.8 9.2H14.4V14.4H10.8M11.8 11.8H14.4" stroke="#fff" stroke-width="1.3" fill="none"/><rect x="12" y="7" width="3" height="1.2" fill="#fff"/><path d="M12.5 5l1-3 1 3" stroke="#fff" stroke-width="0.8" fill="none"/></svg>
<div class="abs" style="left:926px;top:26px;width:10px;height:1px;background:#000"></div>
<div class="abs" style="left:971px;top:21px;width:10px;height:10px;border:1px solid #000"></div>
<svg class="abs" style="left:1016px;top:20px" width="12" height="12"><path d="M0.5 0.5L11.5 11.5M11.5 0.5L0.5 11.5" stroke="#000" stroke-width="1.1"/></svg>
<div class="abs" style="left:23px;top:47px;width:2px;height:14px;background:repeating-linear-gradient(#000 0 2px,transparent 2px 4px)"></div>
<div class="t" style="left:36px;top:48px;font-size:12px;line-height:14px;color:#000"><span class="cj" style="width:2em">工程</span>(<u>P</u>)</div>
<div class="t" style="left:90px;top:48px;font-size:12px;line-height:14px;color:#000"><span class="cj" style="width:2em">显示</span>(<u>V</u>)</div>
<div class="t" style="left:146px;top:48px;font-size:12px;line-height:14px;color:#000"><span class="cj" style="width:2em">模拟</span>(<u>S</u>)</div>
<div class="t" style="left:201px;top:48px;font-size:12px;line-height:14px;color:#000"><span class="cj" style="width:2em">工具</span>(<u>T</u>)</div>
<div class="t" style="left:256px;top:48px;font-size:12px;line-height:14px;color:#000"><span class="cj" style="width:2em">帮助</span>(<u>H</u>)</div>
<div class="abs" style="left:20px;top:70px;width:187px;height:24px;border-radius:3px 0 0 3px;background:linear-gradient(#dfeafb,#c6d9f6 60%,#a9c3ec);border-bottom:1px solid #7f9fd0"></div>
<div class="abs" style="left:207px;top:70px;width:11px;height:24px;border-radius:0 3px 3px 0;background:linear-gradient(#5b8ad6,#2453a8)"></div>
<svg class="abs" style="left:208px;top:83px" width="9" height="8"><path d="M1 1h7" stroke="#fff" stroke-width="1.2"/><path d="M1 4h7l-3.5 3.5z" fill="#fff"/></svg>
<div class="abs" style="left:23px;top:74px;width:2px;height:16px;background:repeating-linear-gradient(#000 0 2px,transparent 2px 4px)"></div>
<div class="abs" style="left:74px;top:75px;width:1px;height:15px;background:#7d9ccc;box-shadow:1px 0 0 #f0f6ff"></div>
<div class="abs" style="left:124px;top:75px;width:1px;height:15px;background:#7d9ccc;box-shadow:1px 0 0 #f0f6ff"></div>
<div class="abs" style="left:152px;top:75px;width:1px;height:15px;background:#7d9ccc;box-shadow:1px 0 0 #f0f6ff"></div>
<div class="abs" style="left:180px;top:75px;width:1px;height:15px;background:#7d9ccc;box-shadow:1px 0 0 #f0f6ff"></div>

<svg class="abs" style="left:30px;top:74px" width="17" height="16"><path d="M1 5h5l1 1h6v9H1z" fill="#b9c5d9"/><path d="M3 8h12l-2 7H1z" fill="#d0daea"/><path d="M6 3 Q11 0 13 5 L15 4 L13 9 L9 7 L11 6 Q10 3 7 5z" fill="#8fa3c4"/><text x="2" y="15" font-size="7" font-weight="bold" fill="#8a9ab8">W</text></svg>
<svg class="abs" style="left:52px;top:74px" width="17" height="16"><path d="M1 5h5l1 1h6v9H1z" fill="#b9c5d9"/><path d="M3 8h13l-3 7H1z" fill="#d0daea"/><path d="M6 3 Q11 0 13 5 L15 4 L13 9 L9 7 L11 6 Q10 3 7 5z" fill="#8fa3c4"/></svg>
<svg class="abs" style="left:80px;top:74px" width="17" height="16"><rect x="0.5" y="0.5" width="11" height="8" fill="#c4cfe0" stroke="#9aa8c0"/><path d="M0 10v6l5-3z" fill="#a8b6cc"/><rect x="11" y="11" width="5" height="5" rx="2" fill="#b0bccc"/></svg>
<svg class="abs" style="left:102px;top:74px" width="17" height="16"><rect x="0.5" y="0.5" width="11" height="8" fill="#7fb7ea" stroke="#333"/><circle cx="4.5" cy="11.5" r="3.6" fill="#fff" stroke="#e01010" stroke-width="1.6"/><rect x="11" y="11" width="5" height="5" rx="2" fill="#333"/></svg>
<svg class="abs" style="left:130px;top:74px" width="17" height="16"><rect x="0" y="0" width="15" height="6" fill="#1a6ad0"/><text x="1" y="5.5" font-size="5.5" font-weight="bold" fill="#fff">DEV</text><path d="M0 8v8l6-4z" fill="#10a030"/><circle cx="11" cy="11" r="3" fill="#fff" stroke="#333" stroke-width="1.3"/><path d="M13 13l3 3" stroke="#333" stroke-width="1.5"/></svg>
<svg class="abs" style="left:158px;top:74px" width="17" height="16"><path d="M0 6h5l1 1h8v9H0z" fill="#f0c030"/><path d="M2 9h14l-2 7H0z" fill="#f8d860"/><rect x="0" y="10" width="6" height="6" fill="#111"/><path d="M6 4 Q10 -1 13 4 L15 3 L13 9 L9 6 L11 5 Q9 2 7 5z" fill="#1a3aa0"/></svg>
<svg class="abs" style="left:186px;top:74px" width="17" height="16"><rect x="0.5" y="0.5" width="11" height="8" fill="#7fb7ea" stroke="#333"/><path d="M1 15 L7 9" stroke="#222" stroke-width="2"/><circle cx="8" cy="8" r="2" fill="none" stroke="#222" stroke-width="1.4"/><rect x="11" y="11" width="5" height="5" rx="2" fill="#333"/></svg>

<div class="t" style="left:19px;top:870px;font-size:12px;line-height:14px;color:#000"><span class="cj" style="width:2em">就绪</span></div>
<div class="t" style="left:676px;top:870px;font-size:12px;line-height:14px;color:#000">GX Simulator2</div>
<div class="t" style="left:771px;top:870px;font-size:12px;line-height:14px;color:#000">MELSEC</div>
<div class="abs" style="left:766px;top:868px;width:1px;height:17px;background:#d0d0d0"></div>
<div class="abs" style="left:896px;top:868px;width:1px;height:17px;background:#d0d0d0"></div>
<div class="abs" style="left:952px;top:868px;width:1px;height:17px;background:#d0d0d0"></div>
<div class="abs" style="left:1025px;top:868px;width:1px;height:17px;background:#d0d0d0"></div>
<div class="t lbl" style="right:1529px;top:114px"><span class="cj" style="width:5em">当前程序名</span></div>
<div class="t w" style="left:403px;top:113px">S2<span class="cj" style="width:4em">自动程序</span></div>
<div class="t lbl" style="right:1529px;top:134px"><span class="cj" style="width:5em">当前运行步</span></div>
<div class="t w" style="left:403px;top:134px">S2<span class="cj" style="width:1em">步</span>0<span class="cj" style="width:2em">注释</span></div>
<div class="t lbl" style="right:1529px;top:154px"><span class="cj" style="width:7em">当前步运行时间</span></div>
<div class="t w" style="left:450px;top:154px">0</div>
<div class="t w" style="left:851px;top:162px"><span class="cj" style="width:6em">单步最小时间</span></div>
<div class="t w" style="left:994px;top:162px">0</div>
<div class="t w" style="left:851px;top:182px"><span class="cj" style="width:6em">单步最大时间</span></div>
<div class="t w" style="left:994px;top:182px">0</div>
<div class="t lbl" style="left:611px;top:193px"><span class="cj" style="width:4em">条件设置</span></div>
<div class="t lbl" style="left:675px;top:193px"><span class="cj" style="width:4em">条件生效</span></div>
<div class="t lbl" style="left:755px;top:193px"><span class="cj" style="width:4em">动作设置</span></div>
<div class="cir" style="left:371px;top:213px"></div>
<div class="t w" style="left:403px;top:214px">S2<span class="cj" style="width:4em">条件注释</span>1</div>
<div class="lamp" style="left:611px;top:213px"></div>
<div class="lamp" style="left:675px;top:213px"></div>
<div class="lamp" style="left:755px;top:213px"></div>
<div class="cir g" style="left:819px;top:213px"></div>
<div class="t w" style="left:851px;top:214px">S2<span class="cj" style="width:4em">动作注释</span>1</div>
<div class="cir" style="left:371px;top:233px"></div>
<div class="t w" style="left:403px;top:234px">S2<span class="cj" style="width:4em">条件注释</span>2</div>
<div class="lamp" style="left:611px;top:233px"></div>
<div class="lamp" style="left:675px;top:233px"></div>
<div class="lamp" style="left:755px;top:233px"></div>
<div class="cir g" style="left:819px;top:233px"></div>
<div class="t w" style="left:851px;top:234px">S2<span class="cj" style="width:4em">动作注释</span>2</div>
<div class="cir" style="left:371px;top:253px"></div>
<div class="t w" style="left:403px;top:254px">S2<span class="cj" style="width:4em">条件注释</span>3</div>
<div class="lamp" style="left:611px;top:253px"></div>
<div class="lamp" style="left:675px;top:253px"></div>
<div class="lamp" style="left:755px;top:253px"></div>
<div class="cir g" style="left:819px;top:253px"></div>
<div class="t w" style="left:851px;top:254px">S2<span class="cj" style="width:4em">动作注释</span>3</div>
<div class="cir" style="left:371px;top:273px"></div>
<div class="t w" style="left:403px;top:274px">S2<span class="cj" style="width:4em">条件注释</span>4</div>
<div class="lamp" style="left:611px;top:273px"></div>
<div class="lamp" style="left:675px;top:273px"></div>
<div class="lamp" style="left:755px;top:273px"></div>
<div class="cir g" style="left:819px;top:273px"></div>
<div class="t w" style="left:851px;top:274px">S2<span class="cj" style="width:4em">动作注释</span>4</div>
<div class="cir" style="left:371px;top:293px"></div>
<div class="t w" style="left:403px;top:294px">S2<span class="cj" style="width:4em">条件注释</span>5</div>
<div class="lamp" style="left:611px;top:293px"></div>
<div class="lamp" style="left:675px;top:293px"></div>
<div class="lamp" style="left:755px;top:293px"></div>
<div class="cir g" style="left:819px;top:293px"></div>
<div class="t w" style="left:851px;top:294px">S2<span class="cj" style="width:4em">动作注释</span>5</div>
<div class="cir" style="left:371px;top:313px"></div>
<div class="t w" style="left:403px;top:314px">S2<span class="cj" style="width:4em">条件注释</span>6</div>
<div class="lamp" style="left:611px;top:313px"></div>
<div class="lamp" style="left:675px;top:313px"></div>
<div class="lamp" style="left:755px;top:313px"></div>
<div class="cir g" style="left:819px;top:313px"></div>
<div class="t w" style="left:851px;top:314px">S2<span class="cj" style="width:4em">动作注释</span>6</div>
<div class="cir" style="left:371px;top:333px"></div>
<div class="t w" style="left:403px;top:334px">S2<span class="cj" style="width:4em">条件注释</span>7</div>
<div class="lamp" style="left:611px;top:333px"></div>
<div class="lamp" style="left:675px;top:333px"></div>
<div class="lamp" style="left:755px;top:333px"></div>
<div class="cir g" style="left:819px;top:333px"></div>
<div class="t w" style="left:851px;top:334px">S2<span class="cj" style="width:4em">动作注释</span>7</div>
<div class="cir" style="left:371px;top:353px"></div>
<div class="t w" style="left:403px;top:354px">S2<span class="cj" style="width:4em">条件注释</span>8</div>
<div class="lamp" style="left:611px;top:353px"></div>
<div class="lamp" style="left:675px;top:353px"></div>
<div class="lamp" style="left:755px;top:353px"></div>
<div class="cir g" style="left:819px;top:353px"></div>
<div class="t w" style="left:851px;top:354px">S2<span class="cj" style="width:4em">动作注释</span>8</div>
<div class="cir" style="left:371px;top:373px"></div>
<div class="t w" style="left:403px;top:374px">S2<span class="cj" style="width:4em">条件注释</span>9</div>
<div class="lamp" style="left:611px;top:373px"></div>
<div class="lamp" style="left:675px;top:373px"></div>
<div class="lamp" style="left:755px;top:373px"></div>
<div class="cir g" style="left:819px;top:373px"></div>
<div class="t w" style="left:851px;top:374px">S2<span class="cj" style="width:4em">动作注释</span>9</div>
<div class="cir" style="left:371px;top:393px"></div>
<div class="t w" style="left:403px;top:394px">S2<span class="cj" style="width:4em">条件注释</span>10</div>
<div class="lamp" style="left:611px;top:393px"></div>
<div class="lamp" style="left:675px;top:393px"></div>
<div class="lamp" style="left:755px;top:393px"></div>
<div class="cir g" style="left:819px;top:393px"></div>
<div class="t w" style="left:851px;top:394px">S2<span class="cj" style="width:4em">动作注释</span>10</div>
<div class="cir" style="left:371px;top:413px"></div>
<div class="t w" style="left:403px;top:414px">S2<span class="cj" style="width:4em">条件注释</span>11</div>
<div class="lamp" style="left:611px;top:413px"></div>
<div class="lamp" style="left:675px;top:413px"></div>
<div class="lamp" style="left:755px;top:413px"></div>
<div class="cir g" style="left:819px;top:413px"></div>
<div class="t w" style="left:851px;top:414px">S2<span class="cj" style="width:4em">动作注释</span>11</div>
<div class="cir" style="left:371px;top:433px"></div>
<div class="t w" style="left:403px;top:434px">S2<span class="cj" style="width:4em">条件注释</span>12</div>
<div class="lamp" style="left:611px;top:433px"></div>
<div class="lamp" style="left:675px;top:433px"></div>
<div class="lamp" style="left:755px;top:433px"></div>
<div class="cir g" style="left:819px;top:433px"></div>
<div class="t w" style="left:851px;top:434px">S2<span class="cj" style="width:4em">动作注释</span>12</div>
<div class="cir" style="left:371px;top:453px"></div>
<div class="t w" style="left:403px;top:454px">S2<span class="cj" style="width:4em">条件注释</span>13</div>
<div class="lamp" style="left:611px;top:453px"></div>
<div class="lamp" style="left:675px;top:453px"></div>
<div class="lamp" style="left:755px;top:453px"></div>
<div class="cir g" style="left:819px;top:453px"></div>
<div class="t w" style="left:851px;top:454px">S2<span class="cj" style="width:4em">动作注释</span>13</div>
<div class="cir" style="left:371px;top:473px"></div>
<div class="t w" style="left:403px;top:474px">S2<span class="cj" style="width:4em">条件注释</span>14</div>
<div class="lamp" style="left:611px;top:473px"></div>
<div class="lamp" style="left:675px;top:473px"></div>
<div class="lamp" style="left:755px;top:473px"></div>
<div class="cir g" style="left:819px;top:473px"></div>
<div class="t w" style="left:851px;top:474px">S2<span class="cj" style="width:4em">动作注释</span>14</div>
<div class="cir" style="left:371px;top:493px"></div>
<div class="t w" style="left:403px;top:494px">S2<span class="cj" style="width:4em">条件注释</span>15</div>
<div class="lamp" style="left:611px;top:493px"></div>
<div class="lamp" style="left:675px;top:493px"></div>
<div class="lamp" style="left:755px;top:493px"></div>
<div class="cir g" style="left:819px;top:493px"></div>
<div class="t w" style="left:851px;top:494px">S2<span class="cj" style="width:4em">动作注释</span>15</div>
<div class="cir" style="left:371px;top:513px"></div>
<div class="t w" style="left:403px;top:514px">S2<span class="cj" style="width:4em">条件注释</span>16</div>
<div class="lamp" style="left:611px;top:513px"></div>
<div class="lamp" style="left:675px;top:513px"></div>
<div class="lamp" style="left:755px;top:513px"></div>
<div class="cir g" style="left:819px;top:513px"></div>
<div class="t w" style="left:851px;top:514px">S2<span class="cj" style="width:4em">动作注释</span>16</div>
<div class="cir" style="left:371px;top:533px"></div>
<div class="t w" style="left:403px;top:534px">S2<span class="cj" style="width:4em">条件注释</span>17</div>
<div class="lamp" style="left:611px;top:533px"></div>
<div class="lamp" style="left:675px;top:533px"></div>
<div class="lamp" style="left:755px;top:533px"></div>
<div class="cir g" style="left:819px;top:533px"></div>
<div class="t w" style="left:851px;top:534px">S2<span class="cj" style="width:4em">动作注释</span>17</div>
<div class="cir" style="left:371px;top:553px"></div>
<div class="t w" style="left:403px;top:554px">S2<span class="cj" style="width:4em">条件注释</span>18</div>
<div class="lamp" style="left:611px;top:553px"></div>
<div class="lamp" style="left:675px;top:553px"></div>
<div class="lamp" style="left:755px;top:553px"></div>
<div class="cir g" style="left:819px;top:553px"></div>
<div class="t w" style="left:851px;top:554px">S2<span class="cj" style="width:4em">动作注释</span>18</div>
<div class="cir" style="left:371px;top:573px"></div>
<div class="t w" style="left:403px;top:574px">S2<span class="cj" style="width:4em">条件注释</span>19</div>
<div class="lamp" style="left:611px;top:573px"></div>
<div class="lamp" style="left:675px;top:573px"></div>
<div class="lamp" style="left:755px;top:573px"></div>
<div class="cir g" style="left:819px;top:573px"></div>
<div class="t w" style="left:851px;top:574px">S2<span class="cj" style="width:4em">动作注释</span>19</div>
<div class="cir" style="left:371px;top:593px"></div>
<div class="t w" style="left:403px;top:594px">S2<span class="cj" style="width:4em">条件注释</span>20</div>
<div class="lamp" style="left:611px;top:593px"></div>
<div class="lamp" style="left:675px;top:593px"></div>
<div class="lamp" style="left:755px;top:593px"></div>
<div class="cir g" style="left:819px;top:593px"></div>
<div class="t w" style="left:851px;top:594px">S2<span class="cj" style="width:4em">动作注释</span>20</div>
<div class="cir" style="left:371px;top:613px"></div>
<div class="t w" style="left:403px;top:614px">S2<span class="cj" style="width:4em">条件注释</span>21</div>
<div class="lamp" style="left:611px;top:613px"></div>
<div class="lamp" style="left:675px;top:613px"></div>
<div class="lamp" style="left:755px;top:613px"></div>
<div class="cir g" style="left:819px;top:613px"></div>
<div class="t w" style="left:851px;top:614px">S2<span class="cj" style="width:4em">动作注释</span>21</div>
<div class="cir" style="left:371px;top:633px"></div>
<div class="t w" style="left:403px;top:634px">S2<span class="cj" style="width:4em">条件注释</span>22</div>
<div class="lamp" style="left:611px;top:633px"></div>
<div class="lamp" style="left:675px;top:633px"></div>
<div class="lamp" style="left:755px;top:633px"></div>
<div class="cir g" style="left:819px;top:633px"></div>
<div class="t w" style="left:851px;top:634px">S2<span class="cj" style="width:4em">动作注释</span>22</div>
<div class="cir" style="left:371px;top:653px"></div>
<div class="t w" style="left:403px;top:654px">S2<span class="cj" style="width:4em">条件注释</span>23</div>
<div class="lamp" style="left:611px;top:653px"></div>
<div class="lamp" style="left:675px;top:653px"></div>
<div class="lamp" style="left:755px;top:653px"></div>
<div class="cir g" style="left:819px;top:653px"></div>
<div class="t w" style="left:851px;top:654px">S2<span class="cj" style="width:4em">动作注释</span>23</div>
<div class="cir" style="left:371px;top:673px"></div>
<div class="t w" style="left:403px;top:674px">S2<span class="cj" style="width:4em">条件注释</span>24</div>
<div class="lamp" style="left:611px;top:673px"></div>
<div class="lamp" style="left:675px;top:673px"></div>
<div class="lamp" style="left:755px;top:673px"></div>
<div class="cir g" style="left:819px;top:673px"></div>
<div class="t w" style="left:851px;top:674px">S2<span class="cj" style="width:4em">动作注释</span>24</div>
<div class="cir" style="left:371px;top:693px"></div>
<div class="t w" style="left:403px;top:694px">S2<span class="cj" style="width:4em">条件注释</span>25</div>
<div class="lamp" style="left:611px;top:693px"></div>
<div class="lamp" style="left:675px;top:693px"></div>
<div class="lamp" style="left:755px;top:693px"></div>
<div class="cir g" style="left:819px;top:693px"></div>
<div class="t w" style="left:851px;top:694px">S2<span class="cj" style="width:4em">动作注释</span>25</div>
<div class="cir" style="left:371px;top:713px"></div>
<div class="t w" style="left:403px;top:714px">S2<span class="cj" style="width:4em">条件注释</span>26</div>
<div class="lamp" style="left:611px;top:713px"></div>
<div class="lamp" style="left:675px;top:713px"></div>
<div class="lamp" style="left:755px;top:713px"></div>
<div class="cir g" style="left:819px;top:713px"></div>
<div class="t w" style="left:851px;top:714px">S2<span class="cj" style="width:4em">动作注释</span>26</div>
<div class="cir" style="left:371px;top:733px"></div>
<div class="t w" style="left:403px;top:734px">S2<span class="cj" style="width:4em">条件注释</span>27</div>
<div class="lamp" style="left:611px;top:733px"></div>
<div class="lamp" style="left:675px;top:733px"></div>
<div class="lamp" style="left:755px;top:733px"></div>
<div class="cir g" style="left:819px;top:733px"></div>
<div class="t w" style="left:851px;top:734px">S2<span class="cj" style="width:4em">动作注释</span>27</div>
<div class="cir" style="left:371px;top:753px"></div>
<div class="t w" style="left:403px;top:754px">S2<span class="cj" style="width:4em">条件注释</span>28</div>
<div class="lamp" style="left:611px;top:753px"></div>
<div class="lamp" style="left:675px;top:753px"></div>
<div class="lamp" style="left:755px;top:753px"></div>
<div class="cir g" style="left:819px;top:753px"></div>
<div class="t w" style="left:851px;top:754px">S2<span class="cj" style="width:4em">动作注释</span>28</div>
<div class="cir" style="left:371px;top:773px"></div>
<div class="t w" style="left:403px;top:774px">S2<span class="cj" style="width:4em">条件注释</span>29</div>
<div class="lamp" style="left:611px;top:773px"></div>
<div class="lamp" style="left:675px;top:773px"></div>
<div class="lamp" style="left:755px;top:773px"></div>
<div class="cir g" style="left:819px;top:773px"></div>
<div class="t w" style="left:851px;top:774px">S2<span class="cj" style="width:4em">动作注释</span>29</div>
<div class="cir" style="left:371px;top:793px"></div>
<div class="t w" style="left:403px;top:794px">S2<span class="cj" style="width:4em">条件注释</span>30</div>
<div class="lamp" style="left:611px;top:793px"></div>
<div class="lamp" style="left:675px;top:793px"></div>
<div class="lamp" style="left:755px;top:793px"></div>
<div class="cir g" style="left:819px;top:793px"></div>
<div class="t w" style="left:851px;top:794px">S2<span class="cj" style="width:4em">动作注释</span>30</div>
<div class="cir" style="left:371px;top:813px"></div>
<div class="t w" style="left:403px;top:814px">S2<span class="cj" style="width:4em">条件注释</span>31</div>
<div class="lamp" style="left:611px;top:813px"></div>
<div class="lamp" style="left:675px;top:813px"></div>
<div class="lamp" style="left:755px;top:813px"></div>
<div class="cir g" style="left:819px;top:813px"></div>
<div class="t w" style="left:851px;top:814px">S2<span class="cj" style="width:4em">动作注释</span>31</div>
<div class="cir" style="left:371px;top:833px"></div>
<div class="t w" style="left:403px;top:834px">S2<span class="cj" style="width:4em">条件注释</span>32</div>
<div class="lamp" style="left:611px;top:833px"></div>
<div class="lamp" style="left:675px;top:833px"></div>
<div class="lamp" style="left:755px;top:833px"></div>
<div class="cir g" style="left:819px;top:833px"></div>
<div class="t w" style="left:851px;top:834px">S2<span class="cj" style="width:4em">动作注释</span>32</div>
<div class="sb" style="top:226px"><i><span class="cj" style="width:2em">工位</span>1</i></div>
<div class="sb on" style="top:278px"><i><span class="cj" style="width:2em">工位</span>2</i></div>
<div class="sb" style="top:330px"><i><span class="cj" style="width:2em">工位</span>3</i></div>
<div class="sb" style="top:382px"><i><span class="cj" style="width:2em">工位</span>4</i></div>
<div class="sb" style="top:434px"><i><span class="cj" style="width:2em">工位</span>5</i></div>
<div class="mb" style="left:259px;top:225px"><span class="cj" style="width:4em">自动模式</span></div>
<div class="mb" style="left:259px;top:245px"><span class="cj" style="width:4em">单步模式</span></div>
<div class="mb" style="left:259px;top:265px"><span class="cj" style="width:4em">单步转移</span></div>
<div class="mb on" style="left:259px;top:285px"><span class="cj" style="width:4em">编辑模式</span></div>
<div class="mb" style="left:259px;top:305px"><span class="cj" style="width:6em">监控超时选择</span></div>
<div class="mb" style="left:259px;top:325px"><span class="cj" style="width:4em">转移条件</span>OK</div>
<div class="mb" style="left:259px;top:345px"><span class="cj" style="width:2em">异常</span></div>
<div class="mb" style="left:259px;top:365px"><span class="cj" style="width:4em">异常复位</span></div>
<div class="mb" style="left:259px;top:385px"><span class="cj" style="width:3em">初始化</span></div>
<div class="mb" style="left:259px;top:481px"><span class="cj" style="width:2em">首步</span></div>
<div class="mb" style="left:259px;top:501px"><span class="cj" style="width:2em">末步</span></div>
<div class="mb" style="left:259px;top:521px"><span class="cj" style="width:3em">上一步</span></div>
<div class="mb" style="left:259px;top:541px"><span class="cj" style="width:3em">下一步</span></div>
<div class="mb" style="left:259px;top:561px"><span class="cj" style="width:2em">剪切</span></div>
<div class="mb" style="left:259px;top:581px"><span class="cj" style="width:2em">复制</span></div>
<div class="mb" style="left:259px;top:601px"><span class="cj" style="width:2em">粘粘</span></div>
<div class="mb" style="left:259px;top:621px"><span class="cj" style="width:2em">插入</span></div>
<div class="mb" style="left:259px;top:641px"><span class="cj" style="width:2em">删除</span></div>
<div class="mb" style="left:259px;top:661px"><span class="cj" style="width:2em">新增</span></div>
<div class="abs" style="left:1048px;top:16px;width:252px;height:205px;background:#f0f0f0;border:1px solid #aaa;box-shadow:0 0 12px rgba(0,0,0,.3)"></div>
<div class="abs" style="left:1049px;top:17px;width:250px;height:42px;background:#fff"></div>
<div class="abs" style="left:1052px;top:21px;width:16px;height:14px;background:#1010e0;border:1px solid #333;border-right-width:2px;border-bottom-width:2px"></div>
<div class="abs" style="left:1055px;top:24px;width:10px;height:7px;background:repeating-linear-gradient(90deg,#999 0 1px,#ddd 1px 2px)"></div><div class="abs" style="left:1055px;top:24px;width:2px;height:7px;background:#e00"></div>
<div class="t" style="left:1073px;top:19px;font-size:13px;line-height:16px;color:#999">GX Simulator2</div>
<div class="abs" style="left:1181px;top:28px;width:10px;height:1px;background:#999"></div>
<div class="abs" style="left:1226px;top:23px;width:10px;height:10px;border:1px solid #ccc"></div>
<svg class="abs" style="left:1271px;top:22px" width="12" height="12"><path d="M0.5 0.5L11.5 11.5M11.5 0.5L0.5 11.5" stroke="#ccc" stroke-width="1.1"/></svg>
<div class="t" style="left:1056px;top:43px;font-size:12px;line-height:14px;color:#000"><span class="cj" style="width:2em">工具</span>(T)</div>
<div class="t" style="left:1109px;top:43px;font-size:12px;line-height:14px;color:#000"><span class="cj" style="width:2em">选项</span>(O)</div>
<div class="abs" style="left:1064px;top:78px;width:209px;height:32px;border:1px solid #bbb"></div>
<div class="t" style="left:1072px;top:72px;font-size:12px;line-height:13px;color:#000;background:#f0f0f0;padding:0 2px"><span class="cj" style="width:2em">开关</span></div>
<div class="abs" style="left:1064px;top:121px;width:209px;height:91px;border:1px solid #bbb"></div>
<div class="t" style="left:1071px;top:116px;font-size:12px;line-height:12px;color:#000;background:#f0f0f0;padding:0 1px">LED</div>
<div class="abs" style="left:1080px;top:90px;width:11px;height:11px;border-radius:50%;border:1px solid #888;border-right-color:#fff;border-bottom-color:#fff;background:#fff"></div>
<div class="t" style="left:1096px;top:90px;font-size:11px;line-height:13px;color:#999">RESET</div>
<div class="abs" style="left:1146px;top:90px;width:11px;height:11px;border-radius:50%;border:1px solid #888;border-right-color:#fff;border-bottom-color:#fff;background:#fff"></div>
<div class="t" style="left:1162px;top:90px;font-size:11px;line-height:13px;color:#000">STOP</div>
<div class="abs" style="left:1212px;top:90px;width:11px;height:11px;border-radius:50%;border:1px solid #888;border-right-color:#fff;border-bottom-color:#fff;background:#fff"></div>
<div class="abs" style="left:1215px;top:93px;width:5px;height:5px;border-radius:50%;background:#000"></div>
<div class="t" style="left:1228px;top:90px;font-size:11px;line-height:13px;color:#000">RUN</div>
<div class="abs" style="left:1112px;top:129px;width:114px;height:77px;background:#808080"></div>
<div class="t" style="right:758px;top:132.0px;font-size:13px;line-height:14px;color:#fff">MODE</div>
<div class="abs" style="left:1181px;top:134.0px;width:25px;height:10px;background:#00ff00"></div>
<div class="t" style="right:758px;top:150.5px;font-size:13px;line-height:14px;color:#fff">RUN</div>
<div class="abs" style="left:1181px;top:152.5px;width:25px;height:10px;background:#00ff00"></div>
<div class="t" style="right:758px;top:169.0px;font-size:13px;line-height:14px;color:#fff">ERR.</div>
<div class="abs" style="left:1181px;top:171.0px;width:25px;height:10px;background:#c0c0c0"></div>
<div class="t" style="right:758px;top:187.5px;font-size:13px;line-height:14px;color:#fff">USER</div>
<div class="abs" style="left:1181px;top:189.5px;width:25px;height:10px;background:#c0c0c0"></div>
</div></div>
<div class="abs" style="left:1398px;top:610px;width:8px;height:8px;border-right:1px solid #666;border-bottom:1px solid #666"></div>
</div>
<div class="abs" style="left:0;top:1018px;width:1920px;height:22px;background:#f1f1f1;border-top:1px solid #d4d4d4"></div>
<div class="abs" style="left:0;top:1040px;width:1920px;height:40px;background:#101a24"></div>
<div class="abs" style="left:48px;top:1040px;width:344px;height:40px;background:#f0f0f0"></div>
<svg class="abs" style="left:1400px;top:0" width="520" height="66"><g fill="#264c88"><path d="M40 50C36 40 38 28 45 20C50 8 62 2 78 4C92 5 104 12 106 22C108 30 102 35 92 35H60C50 36 45 42 44 50Z"/><path d="M126 50C120 44 124 32 130 26C134 14 146 10 160 12C168 4 182 2 196 6C210 10 216 24 214 34C214 44 206 50 196 50Z"/><path d="M232 0H394C398 10 398 24 392 34C380 42 360 44 340 44H250C240 44 234 40 232 30Z"/><path d="M330 0H400C420 0 440 4 452 12C458 20 452 28 440 30H380Z"/><circle cx="465" cy="32" r="10"/></g></svg>
<div class="t" style="left:893px;top:7px;font-size:12px;line-height:14px;color:#e0e8f4"><span class="cj" style="width:4em">说明文档</span>.docx - Word</div>
<div class="abs" style="left:22px;top:9px;width:14px;height:3px;background:#dde6f3"></div><div class="abs" style="left:54px;top:9px;width:4px;height:3px;background:#dde6f3"></div><div class="abs" style="left:90px;top:9px;width:10px;height:3px;background:#dde6f3"></div>
<div class="t" style="left:1690px;top:7px;font-size:13px;line-height:16px;color:#c8d4e8"><span class="cj" style="width:3em">张文举</span></div>
<div class="abs" style="left:1752px;top:10px;width:13px;height:10px;border:1px solid #9fb2d4"></div>
<div class="abs" style="left:1752px;top:13px;width:13px;height:1px;background:#9fb2d4"></div>
<div class="abs" style="left:1799px;top:15px;width:11px;height:1px;background:#7f96c0"></div>
<div class="abs" style="left:1846px;top:12px;width:8px;height:8px;border:1px solid #9fb2d4"></div><div class="abs" style="left:1848px;top:10px;width:8px;height:8px;border-top:1px solid #9fb2d4;border-right:1px solid #9fb2d4"></div>
<svg class="abs" style="left:1891px;top:9px" width="12" height="12"><path d="M0.5 0.5L11.5 11.5M11.5 0.5L0.5 11.5" stroke="#9fb2d4" stroke-width="1.1"/></svg>
<div class="abs" style="left:1842px;top:35px;width:63px;height:31px;background:#1f4a85"></div>
<svg class="abs" style="left:1848px;top:41px" width="16" height="18"><circle cx="7" cy="5" r="4" fill="none" stroke="#fff" stroke-width="1.3"/><path d="M1 16 Q2 9 7 9 Q10 9 11 11" fill="none" stroke="#fff" stroke-width="1.3"/><path d="M9 14h6M12 11v6" stroke="#fff" stroke-width="1.3"/></svg>
<div class="t" style="left:1866px;top:42px;font-size:13px;line-height:16px;color:#fff"><span class="cj" style="width:2em">共享</span></div>
<div class="abs" style="left:1290px;top:73px;width:490px;height:59px;background:#fff;border:1px solid #c6c6c6"></div>
<div class="abs" style="left:1779px;top:73px;width:14px;height:59px;background:#fff;border:1px solid #c6c6c6"></div>
<div class="abs" style="left:1780px;top:92px;width:12px;height:1px;background:#c6c6c6"></div>
<div class="abs" style="left:1780px;top:112px;width:12px;height:1px;background:#c6c6c6"></div>
<div class="abs" style="left:1782px;top:103px;width:0;height:0;border-left:4px solid transparent;border-right:4px solid transparent;border-top:4px solid #555"></div>
<div class="abs" style="left:1782px;top:120px;width:8px;height:1px;background:#555"></div>
<div class="abs" style="left:1782px;top:123px;width:0;height:0;border-left:4px solid transparent;border-right:4px solid transparent;border-top:4px solid #555"></div>
<div class="t" style="left:1273px;width:72px;overflow:hidden;text-align:center;top:86px;font-size:13px;line-height:16px;color:#2e62b0;font-style:italic;font-weight:normal;letter-spacing:-0.3px">AaBbCcD.</div>
<div class="t" style="left:1269px;width:80px;text-align:center;top:110px;font-size:12px;line-height:14px;color:#444"><span class="cj" style="width:3em">显强调</span></div>
<div class="t" style="left:1345px;width:72px;overflow:hidden;text-align:center;top:86px;font-size:13px;line-height:16px;color:#000;font-style:normal;font-weight:bold;letter-spacing:-0.3px">AaBbCcD</div>
<div class="t" style="left:1341px;width:80px;text-align:center;top:110px;font-size:12px;line-height:14px;color:#444"><span class="cj" style="width:2em">要点</span></div>
<div class="t" style="left:1417px;width:72px;overflow:hidden;text-align:center;top:86px;font-size:13px;line-height:16px;color:#555;font-style:italic;font-weight:normal;letter-spacing:-0.3px">AaBbCcD.</div>
<div class="t" style="left:1413px;width:80px;text-align:center;top:110px;font-size:12px;line-height:14px;color:#444"><span class="cj" style="width:2em">引用</span></div>
<div class="t" style="left:1489px;width:72px;overflow:hidden;text-align:center;top:86px;font-size:13px;line-height:16px;color:#4472c4;font-style:italic;font-weight:normal;text-decoration:underline;letter-spacing:-0.3px">AaBbCcD.</div>
<div class="t" style="left:1485px;width:80px;text-align:center;top:110px;font-size:12px;line-height:14px;color:#444"><span class="cj" style="width:4em">明显引用</span></div>
<div class="t" style="left:1561px;width:72px;overflow:hidden;text-align:center;top:86px;font-size:13px;line-height:16px;color:#666;font-style:normal;font-weight:normal;font-variant:small-caps;letter-spacing:-0.3px">AaBbCcDı</div>
<div class="t" style="left:1557px;width:80px;text-align:center;top:110px;font-size:12px;line-height:14px;color:#444"><span class="cj" style="width:5em">不明显参考</span></div>
<div class="t" style="left:1633px;width:72px;overflow:hidden;text-align:center;top:86px;font-size:13px;line-height:16px;color:#2e62b0;font-style:normal;font-weight:normal;font-variant:small-caps;letter-spacing:-0.3px">AaBbCcDı</div>
<div class="t" style="left:1629px;width:80px;text-align:center;top:110px;font-size:12px;line-height:14px;color:#444"><span class="cj" style="width:4em">明显参考</span></div>
<div class="t" style="left:1705px;width:72px;overflow:hidden;text-align:center;top:86px;font-size:13px;line-height:16px;color:#000;font-style:italic;font-weight:bold;letter-spacing:-0.3px">AaBbCcD</div>
<div class="t" style="left:1701px;width:80px;text-align:center;top:110px;font-size:12px;line-height:14px;color:#444"><span class="cj" style="width:4em">书籍标题</span></div>
<div class="abs" style="left:1800px;top:72px;width:1px;height:86px;background:#dadada"></div>
<div class="abs" style="left:1875px;top:72px;width:1px;height:86px;background:#dadada"></div>
<svg class="abs" style="left:1810px;top:74px" width="14" height="14"><circle cx="8.5" cy="5.5" r="4" fill="none" stroke="#2e62b0" stroke-width="1.6"/><path d="M5.5 8.5L1 13" stroke="#2e62b0" stroke-width="2"/></svg>
<div class="t" style="left:1827px;top:74px;font-size:12px;line-height:14px;color:#222"><span class="cj" style="width:2em">查找</span></div>
<div class="abs" style="left:1860px;top:79px;width:0;height:0;border-left:3px solid transparent;border-right:3px solid transparent;border-top:3px solid #444"></div>
<div class="t" style="left:1808px;top:95px;font-size:10px;line-height:9px;color:#2e62b0">ab<br>ac</div>
<div class="t" style="left:1827px;top:97px;font-size:12px;line-height:14px;color:#222"><span class="cj" style="width:2em">替换</span></div>
<svg class="abs" style="left:1811px;top:118px" width="12" height="16"><path d="M1 1L1 13L4 10L7 15L9 14L6 9L10 9Z" fill="#fff" stroke="#444" stroke-width="1"/></svg>
<div class="t" style="left:1827px;top:120px;font-size:12px;line-height:14px;color:#222"><span class="cj" style="width:2em">选择</span></div>
<div class="abs" style="left:1855px;top:126px;width:0;height:0;border-left:3px solid transparent;border-right:3px solid transparent;border-top:3px solid #444"></div>
<div class="t" style="left:1827px;top:143px;font-size:12px;line-height:14px;color:#666"><span class="cj" style="width:2em">编辑</span></div>
<svg class="abs" style="left:1899px;top:148px" width="12" height="8"><path d="M1 6L6 1L11 6" fill="none" stroke="#555" stroke-width="1.3"/></svg>
<div class="abs" style="left:1788px;top:149px;width:8px;height:8px;border-right:1px solid #888;border-bottom:1px solid #888"></div>
<div class="abs" style="left:13px;top:78px;width:4px;height:24px;background:#e9c98a"></div>
<div class="abs" style="left:0px;top:162px;width:17px;height:856px;background:#e6e6e6"></div>
<div class="abs" style="left:337px;top:886px;width:1px;height:132px;background:#c8c8c8"></div>
<div class="t" style="left:8px;top:1021px;font-size:12px;line-height:14px;color:#444"><span class="cj" style="width:1em">第</span> 1 <span class="cj" style="width:3em">页，共</span> 2 <span class="cj" style="width:1em">页</span></div>
<div class="t" style="left:117px;top:1021px;font-size:12px;line-height:14px;color:#444">16 <span class="cj" style="width:2em">个字</span></div>
<div class="abs" style="left:178px;top:1022px;width:8px;height:12px;border:1px solid #555"></div>
<div class="t" style="left:210px;top:1021px;font-size:12px;line-height:14px;color:#444"><span class="cj" style="width:2em">中文</span>(<span class="cj" style="width:2em">中国</span>)</div>
<div class="abs" style="left:1667px;top:1018px;width:38px;height:22px;background:#d6d6d6"></div>
<div class="abs" style="left:1641px;top:1023px;width:13px;height:11px;border:1px solid #555;background:repeating-linear-gradient(transparent 0 2px,#777 2px 3px)"></div>
<div class="abs" style="left:1679px;top:1023px;width:13px;height:11px;border:1px solid #555;background:repeating-linear-gradient(transparent 0 2px,#777 2px 3px)"></div>
<div class="abs" style="left:1717px;top:1023px;width:13px;height:11px;border:1px solid #555;background:repeating-linear-gradient(transparent 0 2px,#777 2px 3px)"></div>
<div class="abs" style="left:1747px;top:1028px;width:6px;height:1px;background:#444"></div>
<div class="abs" style="left:1758px;top:1028px;width:100px;height:1px;background:#999"></div>
<div class="abs" style="left:1806px;top:1022px;width:4px;height:12px;background:#444"></div>
<div class="abs" style="left:1861px;top:1028px;width:7px;height:1px;background:#444"></div>
<div class="abs" style="left:1864px;top:1025px;width:1px;height:7px;background:#444"></div>
<div class="t" style="left:1880px;top:1021px;font-size:12px;line-height:14px;color:#444">100%</div>
<svg class="abs" style="left:15px;top:1052px" width="17" height="17"><path d="M0 2.3L7 1.3V8H0Z M8 1.1L17 0V8H8Z M0 9H7V15.7L0 14.7Z M8 9H17V17L8 15.9Z" fill="#fff"/></svg>
<div class="abs" style="left:58px;top:1050px;width:20px;height:20px;border-radius:50%;border:2.5px solid #111"></div>
<div class="t" style="left:88px;top:1052px;font-size:14px;line-height:16px;color:#333"><span class="cj" style="width:12em">在这里输入你要搜索的内容</span></div>
<div class="abs" style="left:367px;top:1052px;width:7px;height:11px;border:1.5px solid #333;border-radius:4px"></div>
<div class="abs" style="left:365px;top:1058px;width:11px;height:7px;border:1.5px solid #333;border-top:none;border-radius:0 0 6px 6px"></div>
<div class="abs" style="left:370px;top:1065px;width:1.5px;height:4px;background:#333"></div>
<div class="abs" style="left:408px;top:1052px;width:15px;height:16px;border:1.5px solid #fff;border-radius:1px"></div>
<div class="abs" style="left:405px;top:1054px;width:3px;height:12px;border:1.5px solid #fff;border-right:none"></div>
<div class="abs" style="left:423px;top:1054px;width:3px;height:12px;border:1.5px solid #fff;border-left:none"></div>
<svg class="abs" style="left:456px;top:1049px" width="22" height="22" viewBox="0 0 22 22"><path d="M21 12.5H7.2C7.6 16 10 17.8 13.3 17.8c2.6 0 5-0.9 7.2-2.3v4.6C18.3 21.4 15.8 22 12.8 22 6 22 2 17.8 2 11.5 2 5.2 6.2 0 13 0c5.3 0 8.5 3.600 8.5 9.5zM15.5 9C15.4 6.300 14 4.500 11.500 4.500 9.200 4.500 7.600 6.300 7.300 9z" fill="#1e78d8"/></svg>
<div class="abs" style="left:505px;top:1052px;width:20px;height:18px;background:#fff;border-radius:1px"></div>
<div class="abs" style="left:510px;top:1048px;width:10px;height:8px;border:1.5px solid #fff;border-bottom:none;border-radius:4px 4px 0 0"></div>
<div class="abs" style="left:510px;top:1056px;width:4px;height:4px;background:#f25022"></div><div class="abs" style="left:515px;top:1056px;width:4px;height:4px;background:#7fba00"></div><div class="abs" style="left:510px;top:1061px;width:4px;height:4px;background:#00a4ef"></div><div class="abs" style="left:515px;top:1061px;width:4px;height:4px;background:#ffb900"></div>
<div class="abs" style="left:554px;top:1049px;width:22px;height:22px;border-radius:50%;background:#2a8ae0;border:2px solid #fff"></div>
<div class="abs" style="left:563px;top:1053px;width:3px;height:13px;background:#fff;transform:rotate(45deg)"></div>
<svg class="abs" style="left:602px;top:1049px" width="24" height="22" viewBox="0 0 24 22"><ellipse cx="12" cy="11" rx="11.5" ry="11" fill="#f2cc1a"/><circle cx="9.5" cy="15.5" r="4" fill="#2fb34a"/><path d="M12 15V3.5c2 2 5 2.500 5.500 5.500" stroke="#2fb34a" stroke-width="2.2" fill="none"/></svg>
<svg class="abs" style="left:651px;top:1049px" width="24" height="20"><path d="M0 8L12 0L24 8V20H0Z" fill="#fff"/><path d="M0 8L12 16L24 8" fill="none" stroke="#101a24" stroke-width="1.3"/><path d="M8 12L17 10L11 17Z" fill="#101a24"/></svg>
<svg class="abs" style="left:700px;top:1050px" width="22" height="20"><path d="M0 1h8l2 2h12v17H0z" fill="#f0c040"/><path d="M0 5h22v15H0z" fill="#fbe08a"/><path d="M4 13h14v3h-2v3h-3v-3H9v3H6v-3H4z" fill="#2a8ad8"/></svg>
<div class="abs" style="left:750px;top:1050px;width:21px;height:21px;border-radius:50%;background:conic-gradient(from -30deg,#db4437 0 120deg,#f4c20d 120deg 240deg,#0f9d58 240deg 360deg)"></div>
<div class="abs" style="left:755px;top:1055px;width:11px;height:11px;border-radius:50%;background:#4285f4;border:2px solid #fff"></div>
<div class="abs" style="left:790px;top:1078px;width:152px;height:2px;background:#a9cdf0"></div>
<svg class="abs" style="left:796px;top:1048px" width="24" height="24" viewBox="0 0 16 16"><rect x="0" y="0" width="16" height="16" rx="1" fill="#0a7a2a"/><path d="M0 11h10v5H0z" fill="#0a6020"/><path d="M5 11h5l-1 5H4z" fill="#88c098"/><path d="M2 2h9v7H8.5l0.5 1.5H3.5L4.5 9H2z" fill="#fff"/><rect x="2.5" y="10.3" width="7" height="1.3" fill="#fff"/><rect x="3.5" y="3.2" width="6" height="4.3" fill="#0a7a2a"/><rect x="4.3" y="4" width="4.4" height="2.7" fill="#fff"/><path d="M10.8 9.2H14.4V14.4H10.8M11.8 11.8H14.4" stroke="#fff" stroke-width="1.3" fill="none"/><rect x="12" y="7" width="3" height="1.2" fill="#fff"/><path d="M12.5 5l1-3 1 3" stroke="#fff" stroke-width="0.8" fill="none"/></svg>
<div class="t" style="left:825px;top:1051px;font-size:12.6px;line-height:17px;color:#fff">MELSOFT GT Des...</div>
<div class="abs" style="left:951px;top:1078px;width:152px;height:2px;background:#a9cdf0"></div>
<div class="abs" style="left:959px;top:1048px;width:24px;height:24px;background:#1010e0;border:2px solid #aaa"></div>
<div class="abs" style="left:964px;top:1054px;width:13px;height:9px;background:repeating-linear-gradient(90deg,#999 0 1px,#ddd 1px 3px)"></div><div class="abs" style="left:964px;top:1054px;width:3px;height:9px;background:#e00"></div>
<div class="t" style="left:986px;top:1051px;font-size:12.6px;line-height:17px;color:#fff">GX Simulator2</div>
<div class="abs" style="left:1112px;top:1078px;width:152px;height:2px;background:#a9cdf0"></div>
<div class="abs" style="left:1119px;top:1048px;width:24px;height:24px;background:linear-gradient(135deg,#ff3030,#c00000);border-radius:2px"></div>
<div class="t" style="left:1122px;top:1051px;font-size:16px;line-height:18px;color:#fff;font-weight:bold">TF</div>
<div class="t" style="left:1147px;top:1051px;font-size:12.6px;line-height:17px;color:#fff">MELSOFT<span class="cj" style="width:2em">系列</span> GX...</div>
<div class="abs" style="left:1269px;top:1040px;width:160px;height:40px;background:#2e3a46"></div>
<div class="abs" style="left:1269px;top:1078px;width:160px;height:2px;background:#a9cdf0"></div>
<svg class="abs" style="left:1275px;top:1048px" width="24" height="24" viewBox="0 0 16 16"><rect x="0" y="0" width="16" height="16" rx="1" fill="#0a7a2a"/><path d="M0 11h10v5H0z" fill="#0a6020"/><path d="M5 11h5l-1 5H4z" fill="#88c098"/><path d="M2 2h9v7H8.5l0.5 1.5H3.5L4.5 9H2z" fill="#fff"/><rect x="2.5" y="10.3" width="7" height="1.3" fill="#fff"/><rect x="3.5" y="3.2" width="6" height="4.3" fill="#0a7a2a"/><rect x="4.3" y="4" width="4.4" height="2.7" fill="#fff"/><path d="M10.8 9.2H14.4V14.4H10.8M11.8 11.8H14.4" stroke="#fff" stroke-width="1.3" fill="none"/><rect x="12" y="7" width="3" height="1.2" fill="#fff"/><path d="M12.5 5l1-3 1 3" stroke="#fff" stroke-width="0.8" fill="none"/></svg>
<div class="t" style="left:1304px;top:1051px;font-size:12.6px;line-height:17px;color:#fff">GT Simulator3 (G...</div>
<div class="abs" style="left:1434px;top:1078px;width:152px;height:2px;background:#a9cdf0"></div>
<div class="abs" style="left:1445px;top:1049px;width:20px;height:22px;background:#fff;border:1px solid #2b579a"></div>
<div class="abs" style="left:1440px;top:1051px;width:14px;height:18px;background:#2b579a"></div>
<div class="t" style="left:1442px;top:1053px;font-size:11px;line-height:14px;color:#fff;font-weight:bold">W</div>
<div class="t" style="left:1469px;top:1051px;font-size:12.6px;line-height:17px;color:#fff"><span class="cj" style="width:4em">说明文档</span>.docx - ...</div>
<svg class="abs" style="left:1644px;top:1054px" width="14" height="9"><path d="M1 8L7 2L13 8" fill="none" stroke="#fff" stroke-width="1.4"/></svg>
<div class="abs" style="left:1669px;top:1055px;width:15px;height:10px;border:1.5px solid #fff"></div><div class="abs" style="left:1671px;top:1057px;width:9px;height:6px;background:#fff"></div>
<svg class="abs" style="left:1693px;top:1048px" width="20" height="20"><path d="M6 18A12 12 0 0 1 18 6M9 18A9 9 0 0 1 18 9M12 18A6 6 0 0 1 18 12" fill="none" stroke="#777" stroke-width="1.2"/><text x="0" y="8" font-size="9" fill="#fff">*</text></svg>
<svg class="abs" style="left:1714px;top:1052px" width="18" height="16"><path d="M1 5H4L8 1V15L4 11H1Z" fill="none" stroke="#fff" stroke-width="1.2"/><path d="M11 5L16 11M16 5L11 11" stroke="#fff" stroke-width="1.2"/></svg>
<div class="t" style="left:1740px;top:1050px;font-size:15px;line-height:18px;color:#fff"><span class="cj" style="width:1em">中</span></div>
<div class="abs" style="left:1768px;top:1052px;width:15px;height:16px;border:1.5px solid #fff"></div><div class="t" style="left:1769px;top:1052px;font-size:12px;line-height:15px;color:#fff"><span class="cj" style="width:1em">五</span></div>
<div class="t" style="left:1814px;top:1042px;font-size:13px;line-height:16px;color:#fff">21:46</div>
<div class="t" style="left:1801px;top:1061px;font-size:13px;line-height:16px;color:#fff">2018-1-31</div>
<svg class="abs" style="left:1878px;top:1050px" width="20" height="19"><path d="M1 1H19V13H10L6 17V13H1Z" fill="none" stroke="#fff" stroke-width="1.3"/></svg>
<div class="abs" style="left:1911px;top:1040px;width:1px;height:40px;background:#5a6470"></div>
<div class="abs" style="left:16px;top:11px;width:1030px;height:876px;background:#f0f0f0;border:1px solid #2a8cf4;box-shadow:0 2px 14px rgba(0,0,0,.3)"></div>
<div class="abs" style="left:17px;top:12px;width:1028px;height:30px;background:#fff"></div>
<div class="abs" style="left:17px;top:42px;width:1028px;height:53px;background:linear-gradient(90deg,#a9c6f0,#c4d8f6)"></div>
<div class="abs" style="left:17px;top:95px;width:1028px;height:773px;background:#000;border-left:2px solid #a0a0a0;border-top:2px solid #a0a0a0;border-right:2px solid #fff;border-bottom:2px solid #fff"></div>
<div class="abs" style="left:17px;top:867px;width:1028px;height:1px;background:#d8d8d8"></div>
<div class="abs" style="left:1041px;top:876px;width:2px;height:2px;background:#a8a8a8"></div>
<div class="abs" style="left:1038px;top:879px;width:2px;height:2px;background:#a8a8a8"></div>
<div class="abs" style="left:1041px;top:879px;width:2px;height:2px;background:#a8a8a8"></div>
<div class="abs" style="left:1035px;top:882px;width:2px;height:2px;background:#a8a8a8"></div>
<div class="abs" style="left:1038px;top:882px;width:2px;height:2px;background:#a8a8a8"></div>
<div class="abs" style="left:1041px;top:882px;width:2px;height:2px;background:#a8a8a8"></div>
<div class="t" style="left:46px;top:18px;font-size:12.5px;line-height:16px;color:#000">GT Simulator3 (GT27) &nbsp;[<span class="cj" style="width:7em">工程标题未设置</span> ]</div>
<svg class="abs" style="left:25px;top:18px" width="16" height="16" viewBox="0 0 16 16"><rect x="0" y="0" width="16" height="16" rx="1" fill="#0a7a2a"/><path d="M0 11h10v5H0z" fill="#0a6020"/><path d="M5 11h5l-1 5H4z" fill="#88c098"/><path d="M2 2h9v7H8.5l0.5 1.5H3.5L4.5 9H2z" fill="#fff"/><rect x="2.5" y="10.3" width="7" height="1.3" fill="#fff"/><rect x="3.5" y="3.2" width="6" height="4.3" fill="#0a7a2a"/><rect x="4.3" y="4" width="4.4" height="2.7" fill="#fff"/><path d="M10.8 9.2H14.4V14.4H10.8M11.8 11.8H14.4" stroke="#fff" stroke-width="1.3" fill="none"/><rect x="12" y="7" width="3" height="1.2" fill="#fff"/><path d="M12.5 5l1-3 1 3" stroke="#fff" stroke-width="0.8" fill="none"/></svg>
<div class="abs" style="left:926px;top:26px;width:10px;height:1px;background:#000"></div>
<div class="abs" style="left:971px;top:21px;width:10px;height:10px;border:1px solid #000"></div>
<svg class="abs" style="left:1016px;top:20px" width="12" height="12"><path d="M0.5 0.5L11.5 11.5M11.5 0.5L0.5 11.5" stroke="#000" stroke-width="1.1"/></svg>
<div class="abs" style="left:23px;top:47px;width:2px;height:14px;background:repeating-linear-gradient(#000 0 2px,transparent 2px 4px)"></div>
<div class="t" style="left:36px;top:48px;font-size:12px;line-height:14px;color:#000"><span class="cj" style="width:2em">工程</span>(<u>P</u>)</div>
<div class="t" style="left:90px;top:48px;font-size:12px;line-height:14px;color:#000"><span class="cj" style="width:2em">显示</span>(<u>V</u>)</div>
<div class="t" style="left:146px;top:48px;font-size:12px;line-height:14px;color:#000"><span class="cj" style="width:2em">模拟</span>(<u>S</u>)</div>
<div class="t" style="left:201px;top:48px;font-size:12px;line-height:14px;color:#000"><span class="cj" style="width:2em">工具</span>(<u>T</u>)</div>
<div class="t" style="left:256px;top:48px;font-size:12px;line-height:14px;color:#000"><span class="cj" style="width:2em">帮助</span>(<u>H</u>)</div>
<div class="abs" style="left:20px;top:70px;width:187px;height:24px;border-radius:3px 0 0 3px;background:linear-gradient(#dfeafb,#c6d9f6 60%,#a9c3ec);border-bottom:1px solid #7f9fd0"></div>
<div class="abs" style="left:207px;top:70px;width:11px;height:24px;border-radius:0 3px 3px 0;background:linear-gradient(#5b8ad6,#2453a8)"></div>
<svg class="abs" style="left:208px;top:83px" width="9" height="8"><path d="M1 1h7" stroke="#fff" stroke-width="1.2"/><path d="M1 4h7l-3.5 3.5z" fill="#fff"/></svg>
<div class="abs" style="left:23px;top:74px;width:2px;height:16px;background:repeating-linear-gradient(#000 0 2px,transparent 2px 4px)"></div>
<div class="abs" style="left:74px;top:75px;width:1px;height:15px;background:#7d9ccc;box-shadow:1px 0 0 #f0f6ff"></div>
<div class="abs" style="left:124px;top:75px;width:1px;height:15px;background:#7d9ccc;box-shadow:1px 0 0 #f0f6ff"></div>
<div class="abs" style="left:152px;top:75px;width:1px;height:15px;background:#7d9ccc;box-shadow:1px 0 0 #f0f6ff"></div>
<div class="abs" style="left:180px;top:75px;width:1px;height:15px;background:#7d9ccc;box-shadow:1px 0 0 #f0f6ff"></div>

<svg class="abs" style="left:30px;top:74px" width="17" height="16"><path d="M1 5h5l1 1h6v9H1z" fill="#b9c5d9"/><path d="M3 8h12l-2 7H1z" fill="#d0daea"/><path d="M6 3 Q11 0 13 5 L15 4 L13 9 L9 7 L11 6 Q10 3 7 5z" fill="#8fa3c4"/><text x="2" y="15" font-size="7" font-weight="bold" fill="#8a9ab8">W</text></svg>
<svg class="abs" style="left:52px;top:74px" width="17" height="16"><path d="M1 5h5l1 1h6v9H1z" fill="#b9c5d9"/><path d="M3 8h13l-3 7H1z" fill="#d0daea"/><path d="M6 3 Q11 0 13 5 L15 4 L13 9 L9 7 L11 6 Q10 3 7 5z" fill="#8fa3c4"/></svg>
<svg class="abs" style="left:80px;top:74px" width="17" height="16"><rect x="0.5" y="0.5" width="11" height="8" fill="#c4cfe0" stroke="#9aa8c0"/><path d="M0 10v6l5-3z" fill="#a8b6cc"/><rect x="11" y="11" width="5" height="5" rx="2" fill="#b0bccc"/></svg>
<svg class="abs" style="left:102px;top:74px" width="17" height="16"><rect x="0.5" y="0.5" width="11" height="8" fill="#7fb7ea" stroke="#333"/><circle cx="4.5" cy="11.5" r="3.6" fill="#fff" stroke="#e01010" stroke-width="1.6"/><rect x="11" y="11" width="5" height="5" rx="2" fill="#333"/></svg>
<svg class="abs" style="left:130px;top:74px" width="17" height="16"><rect x="0" y="0" width="15" height="6" fill="#1a6ad0"/><text x="1" y="5.5" font-size="5.5" font-weight="bold" fill="#fff">DEV</text><path d="M0 8v8l6-4z" fill="#10a030"/><circle cx="11" cy="11" r="3" fill="#fff" stroke="#333" stroke-width="1.3"/><path d="M13 13l3 3" stroke="#333" stroke-width="1.5"/></svg>
<svg class="abs" style="left:158px;top:74px" width="17" height="16"><path d="M0 6h5l1 1h8v9H0z" fill="#f0c030"/><path d="M2 9h14l-2 7H0z" fill="#f8d860"/><rect x="0" y="10" width="6" height="6" fill="#111"/><path d="M6 4 Q10 -1 13 4 L15 3 L13 9 L9 6 L11 5 Q9 2 7 5z" fill="#1a3aa0"/></svg>
<svg class="abs" style="left:186px;top:74px" width="17" height="16"><rect x="0.5" y="0.5" width="11" height="8" fill="#7fb7ea" stroke="#333"/><path d="M1 15 L7 9" stroke="#222" stroke-width="2"/><circle cx="8" cy="8" r="2" fill="none" stroke="#222" stroke-width="1.4"/><rect x="11" y="11" width="5" height="5" rx="2" fill="#333"/></svg>

<div class="t" style="left:19px;top:870px;font-size:12px;line-height:14px;color:#000"><span class="cj" style="width:2em">就绪</span></div>
<div class="t" style="left:676px;top:870px;font-size:12px;line-height:14px;color:#000">GX Simulator2</div>
<div class="t" style="left:771px;top:870px;font-size:12px;line-height:14px;color:#000">MELSEC</div>
<div class="abs" style="left:766px;top:868px;width:1px;height:17px;background:#d0d0d0"></div>
<div class="abs" style="left:896px;top:868px;width:1px;height:17px;background:#d0d0d0"></div>
<div class="abs" style="left:952px;top:868px;width:1px;height:17px;background:#d0d0d0"></div>
<div class="abs" style="left:1025px;top:868px;width:1px;height:17px;background:#d0d0d0"></div>
<style>
    .w{color:#fff;font-size:16px;line-height:16px}
    .lbl{color:#fff;font-size:12px;line-height:12px}
    .lamp{position:absolute;width:48px;height:16px;border:1px solid #c8c8c8;border-top-color:#8a8a8a;background:linear-gradient(#5d6d5d 0%,#55655a 35%,#1c321c 60%,#12281a 90%,#4a5a4a 100%)}
    .lamp.on{background:radial-gradient(ellipse 62% 70% at 50% 45%,#dcffdc 0%,#d0ffd0 45%,#8cf58c 80%,#3ee23e 100%);border-top-color:#4a8a4a}
    .cir{position:absolute;width:16px;height:16px;border-radius:50%;border:1.5px solid #c4c4c8;box-shadow:inset 0 0 0 1px #000;background:linear-gradient(#56707e 0%,#4a6676 30%,#1e4058 55%,#0a2840 80%,#163650 100%)}
    .cir.g{background:linear-gradient(#4a5a4a 0%,#566c56 30%,#1c3a1c 55%,#102a10 80%,#3a5a3a 100%)}
    .mb{position:absolute;width:97px;height:16px;border:2px solid #b8bcb8;border-left:3px solid #d8dcd8;border-right:3px solid #d8dcd8;border-top-color:#8a8e8a;border-bottom-color:#a8aca8;background:radial-gradient(ellipse 70% 60% at 50% 40%,#4a6a4a,#1e3a1e 70%,#142a14);color:#fff;font-size:16px;line-height:11px;text-align:center;overflow:visible;white-space:nowrap}
    .mb.on{background:radial-gradient(ellipse 60% 80% at 50% 50%,#d0ffd0,#8af58a 60%,#44e844)}
    .sb{position:absolute;left:35px;width:128px;height:47px;background:linear-gradient(90deg,#8a8a90 0,#f4f4f8 3px,#d0d0d4 6px,#9a9aa0 8px,#5a5a60 11px,transparent 11px,transparent 117px,#5a5a60 117px,#9a9aa0 120px,#d0d0d4 122px,#f4f4f8 125px,#8a8a90 128px),linear-gradient(#f0f0f4 0,#d8d8dc 2px,#9a9aa0 3.5px,#505058 5px,#505058 42px,#a0a0a6 43.5px,#e0e0e4 45px,#8a8a90 47px);padding:5px 11px}
    .sb i{display:block;width:106px;height:37px;border:1px solid #5a5a5a;border-top-color:#8a8a8a;background:linear-gradient(#3a3a3a 0%,#343434 42%,#181818 43%,#1c1c1c 100%);color:#fff;font-style:normal;font-size:16px;line-height:34px;text-align:center;box-shadow:inset 0 0 3px rgba(255,255,255,.15)}
    .sb.on i{background:radial-gradient(ellipse 65% 65% at 50% 50%,#fff 55%,#e4e4e4);color:#000}
    </style>
<div class="t lbl" style="right:1529px;top:114px"><span class="cj" style="width:5em">当前程序名</span></div>
<div class="t w" style="left:403px;top:113px">S2<span class="cj" style="width:4em">自动程序</span></div>
<div class="t lbl" style="right:1529px;top:134px"><span class="cj" style="width:5em">当前运行步</span></div>
<div class="t w" style="left:403px;top:134px">S2<span class="cj" style="width:1em">步</span>0<span class="cj" style="width:2em">注释</span></div>
<div class="t lbl" style="right:1529px;top:154px"><span class="cj" style="width:7em">当前步运行时间</span></div>
<div class="t w" style="left:450px;top:154px">0</div>
<div class="t w" style="left:851px;top:162px"><span class="cj" style="width:6em">单步最小时间</span></div>
<div class="t w" style="left:994px;top:162px">0</div>
<div class="t w" style="left:851px;top:182px"><span class="cj" style="width:6em">单步最大时间</span></div>
<div class="t w" style="left:994px;top:182px">0</div>
<div class="t lbl" style="left:611px;top:193px"><span class="cj" style="width:4em">条件设置</span></div>
<div class="t lbl" style="left:675px;top:193px"><span class="cj" style="width:4em">条件生效</span></div>
<div class="t lbl" style="left:755px;top:193px"><span class="cj" style="width:4em">动作设置</span></div>
<div class="cir" style="left:371px;top:213px"></div>
<div class="t w" style="left:403px;top:214px">S2<span class="cj" style="width:4em">条件注释</span>1</div>
<div class="lamp on" style="left:611px;top:213px"></div>
<div class="lamp on" style="left:675px;top:213px"></div>
<div class="lamp" style="left:755px;top:213px"></div>
<div class="cir g" style="left:819px;top:213px"></div>
<div class="t w" style="left:851px;top:214px">S2<span class="cj" style="width:4em">动作注释</span>1</div>
<div class="cir" style="left:371px;top:233px"></div>
<div class="t w" style="left:403px;top:234px">S2<span class="cj" style="width:4em">条件注释</span>2</div>
<div class="lamp" style="left:611px;top:233px"></div>
<div class="lamp on" style="left:675px;top:233px"></div>
<div class="lamp" style="left:755px;top:233px"></div>
<div class="cir g" style="left:819px;top:233px"></div>
<div class="t w" style="left:851px;top:234px">S2<span class="cj" style="width:4em">动作注释</span>2</div>
<div class="cir" style="left:371px;top:253px"></div>
<div class="t w" style="left:403px;top:254px">S2<span class="cj" style="width:4em">条件注释</span>3</div>
<div class="lamp on" style="left:611px;top:253px"></div>
<div class="lamp on" style="left:675px;top:253px"></div>
<div class="lamp" style="left:755px;top:253px"></div>
<div class="cir g" style="left:819px;top:253px"></div>
<div class="t w" style="left:851px;top:254px">S2<span class="cj" style="width:4em">动作注释</span>3</div>
<div class="cir" style="left:371px;top:273px"></div>
<div class="t w" style="left:403px;top:274px">S2<span class="cj" style="width:4em">条件注释</span>4</div>
<div class="lamp" style="left:611px;top:273px"></div>
<div class="lamp on" style="left:675px;top:273px"></div>
<div class="lamp" style="left:755px;top:273px"></div>
<div class="cir g" style="left:819px;top:273px"></div>
<div class="t w" style="left:851px;top:274px">S2<span class="cj" style="width:4em">动作注释</span>4</div>
<div class="cir" style="left:371px;top:293px"></div>
<div class="t w" style="left:403px;top:294px">S2<span class="cj" style="width:4em">条件注释</span>5</div>
<div class="lamp on" style="left:611px;top:293px"></div>
<div class="lamp on" style="left:675px;top:293px"></div>
<div class="lamp" style="left:755px;top:293px"></div>
<div class="cir g" style="left:819px;top:293px"></div>
<div class="t w" style="left:851px;top:294px">S2<span class="cj" style="width:4em">动作注释</span>5</div>
<div class="cir" style="left:371px;top:313px"></div>
<div class="t w" style="left:403px;top:314px">S2<span class="cj" style="width:4em">条件注释</span>6</div>
<div class="lamp" style="left:611px;top:313px"></div>
<div class="lamp" style="left:675px;top:313px"></div>
<div class="lamp" style="left:755px;top:313px"></div>
<div class="cir g" style="left:819px;top:313px"></div>
<div class="t w" style="left:851px;top:314px">S2<span class="cj" style="width:4em">动作注释</span>6</div>
<div class="cir" style="left:371px;top:333px"></div>
<div class="t w" style="left:403px;top:334px">S2<span class="cj" style="width:4em">条件注释</span>7</div>
<div class="lamp" style="left:611px;top:333px"></div>
<div class="lamp" style="left:675px;top:333px"></div>
<div class="lamp" style="left:755px;top:333px"></div>
<div class="cir g" style="left:819px;top:333px"></div>
<div class="t w" style="left:851px;top:334px">S2<span class="cj" style="width:4em">动作注释</span>7</div>
<div class="cir" style="left:371px;top:353px"></div>
<div class="t w" style="left:403px;top:354px">S2<span class="cj" style="width:4em">条件注释</span>8</div>
<div class="lamp" style="left:611px;top:353px"></div>
<div class="lamp" style="left:675px;top:353px"></div>
<div class="lamp" style="left:755px;top:353px"></div>
<div class="cir g" style="left:819px;top:353px"></div>
<div class="t w" style="left:851px;top:354px">S2<span class="cj" style="width:4em">动作注释</span>8</div>
<div class="cir" style="left:371px;top:373px"></div>
<div class="t w" style="left:403px;top:374px">S2<span class="cj" style="width:4em">条件注释</span>9</div>
<div class="lamp" style="left:611px;top:373px"></div>
<div class="lamp" style="left:675px;top:373px"></div>
<div class="lamp" style="left:755px;top:373px"></div>
<div class="cir g" style="left:819px;top:373px"></div>
<div class="t w" style="left:851px;top:374px">S2<span class="cj" style="width:4em">动作注释</span>9</div>
<div class="cir" style="left:371px;top:393px"></div>
<div class="t w" style="left:403px;top:394px">S2<span class="cj" style="width:4em">条件注释</span>10</div>
<div class="lamp" style="left:611px;top:393px"></div>
<div class="lamp" style="left:675px;top:393px"></div>
<div class="lamp" style="left:755px;top:393px"></div>
<div class="cir g" style="left:819px;top:393px"></div>
<div class="t w" style="left:851px;top:394px">S2<span class="cj" style="width:4em">动作注释</span>10</div>
<div class="cir" style="left:371px;top:413px"></div>
<div class="t w" style="left:403px;top:414px">S2<span class="cj" style="width:4em">条件注释</span>11</div>
<div class="lamp" style="left:611px;top:413px"></div>
<div class="lamp" style="left:675px;top:413px"></div>
<div class="lamp" style="left:755px;top:413px"></div>
<div class="cir g" style="left:819px;top:413px"></div>
<div class="t w" style="left:851px;top:414px">S2<span class="cj" style="width:4em">动作注释</span>11</div>
<div class="cir" style="left:371px;top:433px"></div>
<div class="t w" style="left:403px;top:434px">S2<span class="cj" style="width:4em">条件注释</span>12</div>
<div class="lamp" style="left:611px;top:433px"></div>
<div class="lamp" style="left:675px;top:433px"></div>
<div class="lamp" style="left:755px;top:433px"></div>
<div class="cir g" style="left:819px;top:433px"></div>
<div class="t w" style="left:851px;top:434px">S2<span class="cj" style="width:4em">动作注释</span>12</div>
<div class="cir" style="left:371px;top:453px"></div>
<div class="t w" style="left:403px;top:454px">S2<span class="cj" style="width:4em">条件注释</span>13</div>
<div class="lamp" style="left:611px;top:453px"></div>
<div class="lamp" style="left:675px;top:453px"></div>
<div class="lamp" style="left:755px;top:453px"></div>
<div class="cir g" style="left:819px;top:453px"></div>
<div class="t w" style="left:851px;top:454px">S2<span class="cj" style="width:4em">动作注释</span>13</div>
<div class="cir" style="left:371px;top:473px"></div>
<div class="t w" style="left:403px;top:474px">S2<span class="cj" style="width:4em">条件注释</span>14</div>
<div class="lamp" style="left:611px;top:473px"></div>
<div class="lamp" style="left:675px;top:473px"></div>
<div class="lamp" style="left:755px;top:473px"></div>
<div class="cir g" style="left:819px;top:473px"></div>
<div class="t w" style="left:851px;top:474px">S2<span class="cj" style="width:4em">动作注释</span>14</div>
<div class="cir" style="left:371px;top:493px"></div>
<div class="t w" style="left:403px;top:494px">S2<span class="cj" style="width:4em">条件注释</span>15</div>
<div class="lamp" style="left:611px;top:493px"></div>
<div class="lamp" style="left:675px;top:493px"></div>
<div class="lamp" style="left:755px;top:493px"></div>
<div class="cir g" style="left:819px;top:493px"></div>
<div class="t w" style="left:851px;top:494px">S2<span class="cj" style="width:4em">动作注释</span>15</div>
<div class="cir" style="left:371px;top:513px"></div>
<div class="t w" style="left:403px;top:514px">S2<span class="cj" style="width:4em">条件注释</span>16</div>
<div class="lamp" style="left:611px;top:513px"></div>
<div class="lamp" style="left:675px;top:513px"></div>
<div class="lamp" style="left:755px;top:513px"></div>
<div class="cir g" style="left:819px;top:513px"></div>
<div class="t w" style="left:851px;top:514px">S2<span class="cj" style="width:4em">动作注释</span>16</div>
<div class="cir" style="left:371px;top:533px"></div>
<div class="t w" style="left:403px;top:534px">S2<span class="cj" style="width:4em">条件注释</span>17</div>
<div class="lamp" style="left:611px;top:533px"></div>
<div class="lamp" style="left:675px;top:533px"></div>
<div class="lamp" style="left:755px;top:533px"></div>
<div class="cir g" style="left:819px;top:533px"></div>
<div class="t w" style="left:851px;top:534px">S2<span class="cj" style="width:4em">动作注释</span>17</div>
<div class="cir" style="left:371px;top:553px"></div>
<div class="t w" style="left:403px;top:554px">S2<span class="cj" style="width:4em">条件注释</span>18</div>
<div class="lamp" style="left:611px;top:553px"></div>
<div class="lamp" style="left:675px;top:553px"></div>
<div class="lamp" style="left:755px;top:553px"></div>
<div class="cir g" style="left:819px;top:553px"></div>
<div class="t w" style="left:851px;top:554px">S2<span class="cj" style="width:4em">动作注释</span>18</div>
<div class="cir" style="left:371px;top:573px"></div>
<div class="t w" style="left:403px;top:574px">S2<span class="cj" style="width:4em">条件注释</span>19</div>
<div class="lamp" style="left:611px;top:573px"></div>
<div class="lamp" style="left:675px;top:573px"></div>
<div class="lamp" style="left:755px;top:573px"></div>
<div class="cir g" style="left:819px;top:573px"></div>
<div class="t w" style="left:851px;top:574px">S2<span class="cj" style="width:4em">动作注释</span>19</div>
<div class="cir" style="left:371px;top:593px"></div>
<div class="t w" style="left:403px;top:594px">S2<span class="cj" style="width:4em">条件注释</span>20</div>
<div class="lamp" style="left:611px;top:593px"></div>
<div class="lamp" style="left:675px;top:593px"></div>
<div class="lamp" style="left:755px;top:593px"></div>
<div class="cir g" style="left:819px;top:593px"></div>
<div class="t w" style="left:851px;top:594px">S2<span class="cj" style="width:4em">动作注释</span>20</div>
<div class="cir" style="left:371px;top:613px"></div>
<div class="t w" style="left:403px;top:614px">S2<span class="cj" style="width:4em">条件注释</span>21</div>
<div class="lamp" style="left:611px;top:613px"></div>
<div class="lamp" style="left:675px;top:613px"></div>
<div class="lamp" style="left:755px;top:613px"></div>
<div class="cir g" style="left:819px;top:613px"></div>
<div class="t w" style="left:851px;top:614px">S2<span class="cj" style="width:4em">动作注释</span>21</div>
<div class="cir" style="left:371px;top:633px"></div>
<div class="t w" style="left:403px;top:634px">S2<span class="cj" style="width:4em">条件注释</span>22</div>
<div class="lamp" style="left:611px;top:633px"></div>
<div class="lamp" style="left:675px;top:633px"></div>
<div class="lamp" style="left:755px;top:633px"></div>
<div class="cir g" style="left:819px;top:633px"></div>
<div class="t w" style="left:851px;top:634px">S2<span class="cj" style="width:4em">动作注释</span>22</div>
<div class="cir" style="left:371px;top:653px"></div>
<div class="t w" style="left:403px;top:654px">S2<span class="cj" style="width:4em">条件注释</span>23</div>
<div class="lamp" style="left:611px;top:653px"></div>
<div class="lamp" style="left:675px;top:653px"></div>
<div class="lamp" style="left:755px;top:653px"></div>
<div class="cir g" style="left:819px;top:653px"></div>
<div class="t w" style="left:851px;top:654px">S2<span class="cj" style="width:4em">动作注释</span>23</div>
<div class="cir" style="left:371px;top:673px"></div>
<div class="t w" style="left:403px;top:674px">S2<span class="cj" style="width:4em">条件注释</span>24</div>
<div class="lamp" style="left:611px;top:673px"></div>
<div class="lamp" style="left:675px;top:673px"></div>
<div class="lamp" style="left:755px;top:673px"></div>
<div class="cir g" style="left:819px;top:673px"></div>
<div class="t w" style="left:851px;top:674px">S2<span class="cj" style="width:4em">动作注释</span>24</div>
<div class="cir" style="left:371px;top:693px"></div>
<div class="t w" style="left:403px;top:694px">S2<span class="cj" style="width:4em">条件注释</span>25</div>
<div class="lamp" style="left:611px;top:693px"></div>
<div class="lamp" style="left:675px;top:693px"></div>
<div class="lamp" style="left:755px;top:693px"></div>
<div class="cir g" style="left:819px;top:693px"></div>
<div class="t w" style="left:851px;top:694px">S2<span class="cj" style="width:4em">动作注释</span>25</div>
<div class="cir" style="left:371px;top:713px"></div>
<div class="t w" style="left:403px;top:714px">S2<span class="cj" style="width:4em">条件注释</span>26</div>
<div class="lamp" style="left:611px;top:713px"></div>
<div class="lamp" style="left:675px;top:713px"></div>
<div class="lamp" style="left:755px;top:713px"></div>
<div class="cir g" style="left:819px;top:713px"></div>
<div class="t w" style="left:851px;top:714px">S2<span class="cj" style="width:4em">动作注释</span>26</div>
<div class="cir" style="left:371px;top:733px"></div>
<div class="t w" style="left:403px;top:734px">S2<span class="cj" style="width:4em">条件注释</span>27</div>
<div class="lamp" style="left:611px;top:733px"></div>
<div class="lamp" style="left:675px;top:733px"></div>
<div class="lamp" style="left:755px;top:733px"></div>
<div class="cir g" style="left:819px;top:733px"></div>
<div class="t w" style="left:851px;top:734px">S2<span class="cj" style="width:4em">动作注释</span>27</div>
<div class="cir" style="left:371px;top:753px"></div>
<div class="t w" style="left:403px;top:754px">S2<span class="cj" style="width:4em">条件注释</span>28</div>
<div class="lamp" style="left:611px;top:753px"></div>
<div class="lamp" style="left:675px;top:753px"></div>
<div class="lamp" style="left:755px;top:753px"></div>
<div class="cir g" style="left:819px;top:753px"></div>
<div class="t w" style="left:851px;top:754px">S2<span class="cj" style="width:4em">动作注释</span>28</div>
<div class="cir" style="left:371px;top:773px"></div>
<div class="t w" style="left:403px;top:774px">S2<span class="cj" style="width:4em">条件注释</span>29</div>
<div class="lamp" style="left:611px;top:773px"></div>
<div class="lamp" style="left:675px;top:773px"></div>
<div class="lamp" style="left:755px;top:773px"></div>
<div class="cir g" style="left:819px;top:773px"></div>
<div class="t w" style="left:851px;top:774px">S2<span class="cj" style="width:4em">动作注释</span>29</div>
<div class="cir" style="left:371px;top:793px"></div>
<div class="t w" style="left:403px;top:794px">S2<span class="cj" style="width:4em">条件注释</span>30</div>
<div class="lamp" style="left:611px;top:793px"></div>
<div class="lamp" style="left:675px;top:793px"></div>
<div class="lamp" style="left:755px;top:793px"></div>
<div class="cir g" style="left:819px;top:793px"></div>
<div class="t w" style="left:851px;top:794px">S2<span class="cj" style="width:4em">动作注释</span>30</div>
<div class="cir" style="left:371px;top:813px"></div>
<div class="t w" style="left:403px;top:814px">S2<span class="cj" style="width:4em">条件注释</span>31</div>
<div class="lamp" style="left:611px;top:813px"></div>
<div class="lamp" style="left:675px;top:813px"></div>
<div class="lamp" style="left:755px;top:813px"></div>
<div class="cir g" style="left:819px;top:813px"></div>
<div class="t w" style="left:851px;top:814px">S2<span class="cj" style="width:4em">动作注释</span>31</div>
<div class="cir" style="left:371px;top:833px"></div>
<div class="t w" style="left:403px;top:834px">S2<span class="cj" style="width:4em">条件注释</span>32</div>
<div class="lamp" style="left:611px;top:833px"></div>
<div class="lamp" style="left:675px;top:833px"></div>
<div class="lamp" style="left:755px;top:833px"></div>
<div class="cir g" style="left:819px;top:833px"></div>
<div class="t w" style="left:851px;top:834px">S2<span class="cj" style="width:4em">动作注释</span>32</div>
<div class="sb" style="top:226px"><i><span class="cj" style="width:2em">工位</span>1</i></div>
<div class="sb on" style="top:278px"><i><span class="cj" style="width:2em">工位</span>2</i></div>
<div class="sb" style="top:330px"><i><span class="cj" style="width:2em">工位</span>3</i></div>
<div class="sb" style="top:382px"><i><span class="cj" style="width:2em">工位</span>4</i></div>
<div class="sb" style="top:434px"><i><span class="cj" style="width:2em">工位</span>5</i></div>
<div class="mb" style="left:259px;top:225px"><span class="cj" style="width:4em">自动模式</span></div>
<div class="mb" style="left:259px;top:245px"><span class="cj" style="width:4em">单步模式</span></div>
<div class="mb" style="left:259px;top:265px"><span class="cj" style="width:4em">单步转移</span></div>
<div class="mb on" style="left:259px;top:285px"><span class="cj" style="width:4em">编辑模式</span></div>
<div class="mb" style="left:259px;top:305px"><span class="cj" style="width:6em">监控超时选择</span></div>
<div class="mb" style="left:259px;top:325px"><span class="cj" style="width:4em">转移条件</span>OK</div>
<div class="mb" style="left:259px;top:345px"><span class="cj" style="width:2em">异常</span></div>
<div class="mb" style="left:259px;top:365px"><span class="cj" style="width:4em">异常复位</span></div>
<div class="mb" style="left:259px;top:385px"><span class="cj" style="width:3em">初始化</span></div>
<div class="mb" style="left:259px;top:481px"><span class="cj" style="width:2em">首步</span></div>
<div class="mb" style="left:259px;top:501px"><span class="cj" style="width:2em">末步</span></div>
<div class="mb" style="left:259px;top:521px"><span class="cj" style="width:3em">上一步</span></div>
<div class="mb" style="left:259px;top:541px"><span class="cj" style="width:3em">下一步</span></div>
<div class="mb" style="left:259px;top:561px"><span class="cj" style="width:2em">剪切</span></div>
<div class="mb" style="left:259px;top:581px"><span class="cj" style="width:2em">复制</span></div>
<div class="mb" style="left:259px;top:601px"><span class="cj" style="width:2em">粘粘</span></div>
<div class="mb" style="left:259px;top:621px"><span class="cj" style="width:2em">插入</span></div>
<div class="mb" style="left:259px;top:641px"><span class="cj" style="width:2em">删除</span></div>
<div class="mb" style="left:259px;top:661px"><span class="cj" style="width:2em">新增</span></div>
<div class="abs" style="left:1048px;top:16px;width:252px;height:205px;background:#f0f0f0;border:1px solid #aaa;box-shadow:0 0 12px rgba(0,0,0,.3)"></div>
<div class="abs" style="left:1049px;top:17px;width:250px;height:42px;background:#fff"></div>
<div class="abs" style="left:1052px;top:21px;width:16px;height:14px;background:#1010e0;border:1px solid #333;border-right-width:2px;border-bottom-width:2px"></div>
<div class="abs" style="left:1055px;top:24px;width:10px;height:7px;background:repeating-linear-gradient(90deg,#999 0 1px,#ddd 1px 2px)"></div><div class="abs" style="left:1055px;top:24px;width:2px;height:7px;background:#e00"></div>
<div class="t" style="left:1073px;top:19px;font-size:13px;line-height:16px;color:#999">GX Simulator2</div>
<div class="abs" style="left:1181px;top:28px;width:10px;height:1px;background:#999"></div>
<div class="abs" style="left:1226px;top:23px;width:10px;height:10px;border:1px solid #ccc"></div>
<svg class="abs" style="left:1271px;top:22px" width="12" height="12"><path d="M0.5 0.5L11.5 11.5M11.5 0.5L0.5 11.5" stroke="#ccc" stroke-width="1.1"/></svg>
<div class="t" style="left:1056px;top:43px;font-size:12px;line-height:14px;color:#000"><span class="cj" style="width:2em">工具</span>(T)</div>
<div class="t" style="left:1109px;top:43px;font-size:12px;line-height:14px;color:#000"><span class="cj" style="width:2em">选项</span>(O)</div>
<div class="abs" style="left:1064px;top:78px;width:209px;height:32px;border:1px solid #bbb"></div>
<div class="t" style="left:1072px;top:72px;font-size:12px;line-height:13px;color:#000;background:#f0f0f0;padding:0 2px"><span class="cj" style="width:2em">开关</span></div>
<div class="abs" style="left:1064px;top:121px;width:209px;height:91px;border:1px solid #bbb"></div>
<div class="t" style="left:1071px;top:116px;font-size:12px;line-height:12px;color:#000;background:#f0f0f0;padding:0 1px">LED</div>
<div class="abs" style="left:1080px;top:90px;width:11px;height:11px;border-radius:50%;border:1px solid #888;border-right-color:#fff;border-bottom-color:#fff;background:#fff"></div>
<div class="t" style="left:1096px;top:90px;font-size:11px;line-height:13px;color:#999">RESET</div>
<div class="abs" style="left:1146px;top:90px;width:11px;height:11px;border-radius:50%;border:1px solid #888;border-right-color:#fff;border-bottom-color:#fff;background:#fff"></div>
<div class="t" style="left:1162px;top:90px;font-size:11px;line-height:13px;color:#000">STOP</div>
<div class="abs" style="left:1212px;top:90px;width:11px;height:11px;border-radius:50%;border:1px solid #888;border-right-color:#fff;border-bottom-color:#fff;background:#fff"></div>
<div class="abs" style="left:1215px;top:93px;width:5px;height:5px;border-radius:50%;background:#000"></div>
<div class="t" style="left:1228px;top:90px;font-size:11px;line-height:13px;color:#000">RUN</div>
<div class="abs" style="left:1112px;top:129px;width:114px;height:77px;background:#808080"></div>
<div class="t" style="right:758px;top:132.0px;font-size:13px;line-height:14px;color:#fff">MODE</div>
<div class="abs" style="left:1181px;top:134.0px;width:25px;height:10px;background:#00ff00"></div>
<div class="t" style="right:758px;top:150.5px;font-size:13px;line-height:14px;color:#fff">RUN</div>
<div class="abs" style="left:1181px;top:152.5px;width:25px;height:10px;background:#00ff00"></div>
<div class="t" style="right:758px;top:169.0px;font-size:13px;line-height:14px;color:#fff">ERR.</div>
<div class="abs" style="left:1181px;top:171.0px;width:25px;height:10px;background:#c0c0c0"></div>
<div class="t" style="right:758px;top:187.5px;font-size:13px;line-height:14px;color:#fff">USER</div>
<div class="abs" style="left:1181px;top:189.5px;width:25px;height:10px;background:#c0c0c0"></div>
</body></html>
